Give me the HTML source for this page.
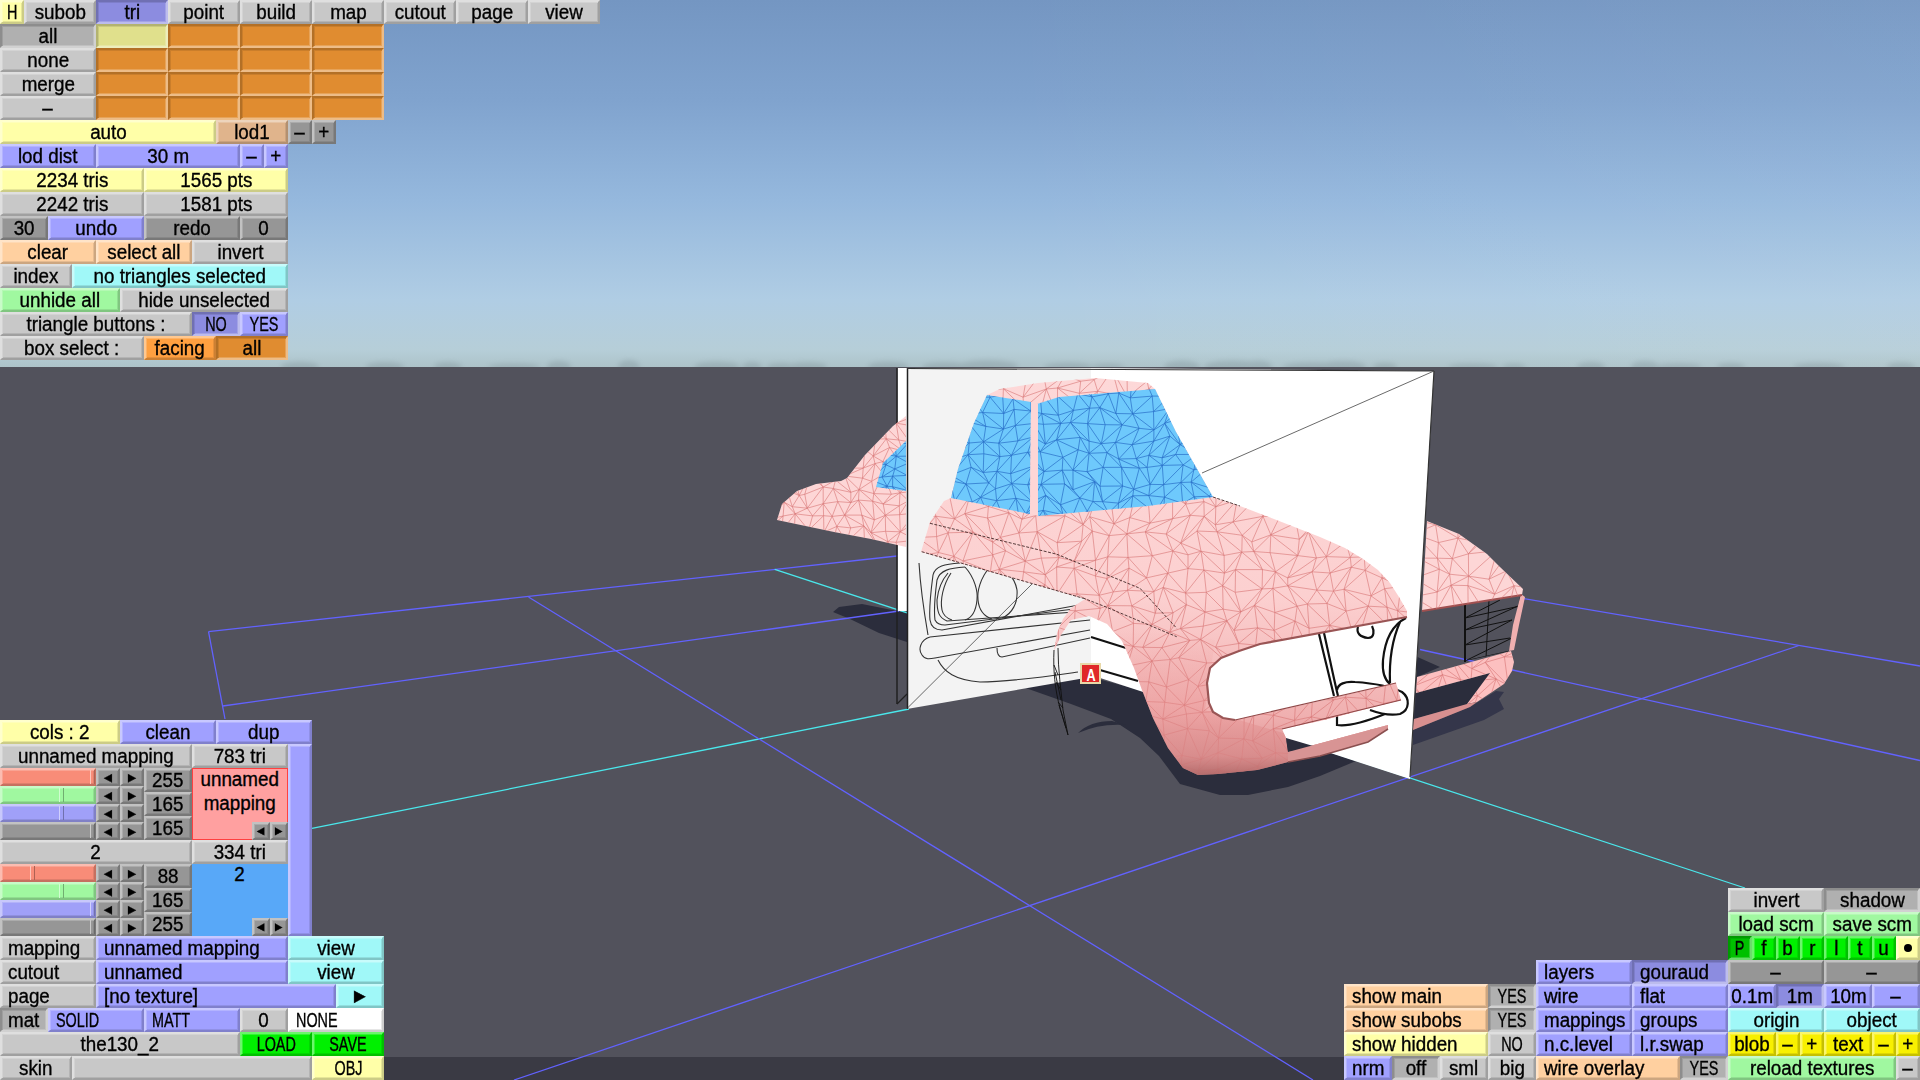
<!DOCTYPE html>
<html><head><meta charset="utf-8"><style>
*{margin:0;padding:0;box-sizing:border-box}
html,body{width:1920px;height:1080px;overflow:hidden;background:#52525c;font-family:"Liberation Sans",sans-serif}
#scene{position:absolute;left:0;top:0;width:1920px;height:1080px}
.b{position:absolute;border:2px solid;border-top-width:2px;border-bottom-width:2px;font-size:20px;line-height:20px;color:#000;text-align:center;white-space:nowrap}
.b span{display:inline-block;transform:scaleX(0.94);transform-origin:50% 50%;-webkit-text-stroke:0.35px #000}
.b.l span{transform-origin:0 50%}
.b.caps span{transform:scaleX(0.72)}
</style></head>
<body>
<svg id="scene" width="1920" height="1080" viewBox="0 0 1920 1080">
<defs>
<linearGradient id="sky" x1="0" y1="0" x2="0" y2="1">
<stop offset="0" stop-color="#7496c2"/><stop offset="0.272" stop-color="#80a3ce"/><stop offset="0.545" stop-color="#95b8dd"/><stop offset="0.817" stop-color="#b0cde4"/><stop offset="0.954" stop-color="#b6ced8"/><stop offset="1" stop-color="#adc3c9"/>
</linearGradient>
<linearGradient id="fshade" x1="0" y1="630" x2="0" y2="778" gradientUnits="userSpaceOnUse">
<stop offset="0" stop-color="#e89090" stop-opacity="0"/><stop offset="0.5" stop-color="#e89090" stop-opacity="0.35"/><stop offset="0.85" stop-color="#d88888" stop-opacity="0.6"/><stop offset="1" stop-color="#a86060" stop-opacity="0.85"/>
</linearGradient>
<filter id="hblur" x="-50%" y="-50%" width="200%" height="200%"><feGaussianBlur stdDeviation="2.5"/></filter>
<linearGradient id="skyh" x1="0" y1="0" x2="1920" y2="0" gradientUnits="userSpaceOnUse">
<stop offset="0.5" stop-color="#ffffff" stop-opacity="0"/><stop offset="1" stop-color="#ffffff" stop-opacity="0.05"/>
</linearGradient>
<linearGradient id="pinkg" x1="0" y1="0" x2="0" y2="1">
<stop offset="0" stop-color="#fdd8d8"/><stop offset="0.55" stop-color="#fcd0d0"/><stop offset="0.85" stop-color="#f0b0b0"/><stop offset="1" stop-color="#d08888"/>
</linearGradient>

<clipPath id="cpf"><polygon points="921,552 930,522 944,501 951,498 958,469 974,423 987,395 1000,389 1038,383 1095,378 1148,383 1155,389 1176,432 1213,497 1240,506 1274,519 1320,537 1345,548 1363,559 1378,570 1390,583 1399,597 1407,611 1407,617 1260,644 1239,651 1221,658 1210,668 1207,683 1209,703 1213,712 1223,718 1235,720 1320,701 1396,683 1401,700 1320,721 1282,729 1286,738 1288,752 1388,725 1388,729 1368,742 1320,756 1288,762 1257,770 1218,774 1198,775 1183,768 1168,748 1153,718 1142,690 1134,668 1122,641 1107,624 1089,616 1071,620 1061,635 1054,651 1057,633 1063,619 1071,608 1085,599"/><polygon points="1427,521 1459,534 1487,554 1500,567 1523,589 1522,595 1422,611"/><polygon points="1417,677 1511,651 1514,662 1512,671 1504,684 1477,702 1467,704 1490,673 1416,693"/></clipPath>
<clipPath id="cpr"><polygon points="906,416 893,426 865,455 847,478 841,481 816,484 797,491 782,504 777,520 834,532 871,539 906,547"/></clipPath>
<clipPath id="cpb"><polygon points="987,395 1031,402 1030,514 951,498 958,469 974,423"/><polygon points="1037,404 1059,397 1155,389 1176,432 1213,497 1148,506 1038,516"/><polygon points="906,441 883,463 876,487 906,491"/></clipPath>
<clipPath id="cpbr"><polygon points="906,441 883,463 876,487 906,491"/></clipPath>
<clipPath id="cpg"><polygon points="1465,604 1521,594 1510,651 1465,661"/></clipPath>
</defs>
<rect x="0" y="0" width="1920" height="367" fill="url(#sky)"/>
<rect x="0" y="0" width="1920" height="367" fill="url(#skyh)"/>
<g fill="#6f8288" opacity="0.28" filter="url(#hblur)"><ellipse cx="300" cy="367" rx="19" ry="5.2"/><ellipse cx="385" cy="367" rx="19" ry="5.0"/><ellipse cx="448" cy="367" rx="14" ry="5.0"/><ellipse cx="514" cy="367" rx="26" ry="3.4"/><ellipse cx="559" cy="367" rx="12" ry="6.2"/><ellipse cx="629" cy="367" rx="11" ry="6.9"/><ellipse cx="717" cy="367" rx="23" ry="5.5"/><ellipse cx="752" cy="367" rx="10" ry="5.1"/><ellipse cx="781" cy="367" rx="14" ry="4.0"/><ellipse cx="808" cy="367" rx="19" ry="4.8"/><ellipse cx="888" cy="367" rx="20" ry="5.6"/><ellipse cx="945" cy="367" rx="23" ry="4.8"/><ellipse cx="988" cy="367" rx="30" ry="7.0"/><ellipse cx="1068" cy="367" rx="24" ry="4.3"/><ellipse cx="1108" cy="367" rx="16" ry="3.3"/><ellipse cx="1182" cy="367" rx="18" ry="6.4"/><ellipse cx="1233" cy="367" rx="29" ry="6.4"/><ellipse cx="1258" cy="367" rx="14" ry="6.6"/><ellipse cx="1313" cy="367" rx="30" ry="4.6"/><ellipse cx="1343" cy="367" rx="23" ry="6.1"/><ellipse cx="1385" cy="367" rx="12" ry="4.3"/><ellipse cx="1473" cy="367" rx="25" ry="3.5"/><ellipse cx="1514" cy="367" rx="12" ry="3.2"/><ellipse cx="1591" cy="367" rx="14" ry="5.2"/><ellipse cx="1645" cy="367" rx="14" ry="5.9"/><ellipse cx="1679" cy="367" rx="23" ry="3.5"/><ellipse cx="1731" cy="367" rx="14" ry="4.1"/><ellipse cx="1819" cy="367" rx="26" ry="4.2"/><ellipse cx="1901" cy="367" rx="14" ry="4.6"/></g>
<rect x="0" y="367" width="1920" height="713" fill="#52525c"/>
<rect x="384" y="1057" width="960" height="23" fill="#3a3a44"/>
<polygon points="833,612 839,607 862,604 897,611 907,613 907,642 879,633 850,619" fill="#2b2d3c" />
<polygon points="1020,686 1090,677 1140,690 1210,720 1336,754 1356,761 1320,776 1288,787 1248,795 1220,795 1180,784 1159,756 1140,738 1111,719 1071,704" fill="#2b2d3c" />
<path d="M1078,733 Q1090,721 1112,721 L1126,725 Q1100,723 1078,733Z" fill="#2b2d3c"/>
<polygon points="1413,655 1440,667 1417,677 1416,693 1414,719 1413,741" fill="#2b2d3c" />
<polygon points="1413,730 1470,707 1496,691 1504,692 1499,699 1504,709 1484,720 1413,745" fill="#34364a" />
<line x1="208.5" y1="631.6" x2="897" y2="556" stroke="#6262ff" stroke-width="1.3"/>
<line x1="222.8" y1="706" x2="899" y2="611" stroke="#6262ff" stroke-width="1.3"/>
<line x1="312" y1="828.4" x2="909" y2="709" stroke="#4ae8ec" stroke-width="1.3"/>
<line x1="514" y1="1080" x2="1799" y2="645.5" stroke="#6262ff" stroke-width="1.3"/>
<line x1="208.5" y1="631.6" x2="225" y2="719" stroke="#6262ff" stroke-width="1.3"/>
<line x1="528.5" y1="597" x2="1313" y2="1080" stroke="#6262ff" stroke-width="1.3"/>
<line x1="774.7" y1="569.3" x2="1745" y2="888" stroke="#4ae8ec" stroke-width="1.3"/>
<line x1="1420" y1="649.5" x2="1920" y2="760.5" stroke="#6262ff" stroke-width="1.3"/>
<line x1="1520" y1="598" x2="1920" y2="666" stroke="#6262ff" stroke-width="1.3"/>
<line x1="897" y1="556" x2="975" y2="547.5" stroke="#6262ff" stroke-width="1.3"/>
<rect x="897.5" y="368" width="10" height="243" fill="#ffffff"/>
<line x1="897" y1="368" x2="897" y2="704" stroke="#202020" stroke-width="1.5"/>
<path d="M897,704 L907,694" stroke="#202020" stroke-width="1.2"/>
<polygon points="906,416 893,426 865,455 847,478 841,481 816,484 797,491 782,504 777,520 834,532 871,539 906,547" fill="#fdd6d6" />
<path clip-path="url(#cpr)" d="M767.6 400.4L786.3 399.8M767.6 400.4L768.8 413.9M767.6 400.4L785.0 416.4M768.8 413.9L785.0 416.4M768.8 413.9L771.1 422.0M785.0 416.4L771.1 422.0M771.1 422.0L784.9 429.8M771.1 422.0L765.6 442.1M784.9 429.8L765.6 442.1M765.6 442.1L782.0 441.7M765.6 442.1L767.8 449.6M782.0 441.7L767.8 449.6M767.8 449.6L782.5 456.0M767.8 449.6L774.5 464.7M782.5 456.0L774.5 464.7M774.5 464.7L786.4 461.3M774.5 464.7L773.1 477.8M786.4 461.3L773.1 477.8M773.1 477.8L779.7 475.4M773.1 477.8L771.3 487.8M779.7 475.4L771.3 487.8M771.3 487.8L787.2 490.4M771.3 487.8L771.2 507.3M771.3 487.8L784.2 502.2M771.2 507.3L784.2 502.2M771.2 507.3L770.2 519.2M784.2 502.2L770.2 519.2M770.2 519.2L783.1 516.0M770.2 519.2L771.6 526.0M783.1 516.0L771.6 526.0M771.6 526.0L781.6 530.8M771.6 526.0L772.3 543.8M781.6 530.8L772.3 543.8M772.3 543.8L783.8 546.7M772.3 543.8L768.2 551.7M772.3 543.8L784.7 559.9M768.2 551.7L784.7 559.9M786.3 399.8L799.2 404.5M786.3 399.8L785.0 416.4M799.2 404.5L785.0 416.4M785.0 416.4L797.6 409.9M785.0 416.4L784.9 429.8M797.6 409.9L784.9 429.8M784.9 429.8L799.3 430.2M784.9 429.8L782.0 441.7M784.9 429.8L799.7 439.6M782.0 441.7L799.7 439.6M782.0 441.7L782.5 456.0M782.0 441.7L797.9 449.4M782.5 456.0L797.9 449.4M782.5 456.0L786.4 461.3M797.9 449.4L786.4 461.3M786.4 461.3L799.0 465.7M786.4 461.3L779.7 475.4M799.0 465.7L779.7 475.4M779.7 475.4L794.0 474.0M779.7 475.4L787.2 490.4M779.7 475.4L799.2 495.5M787.2 490.4L799.2 495.5M787.2 490.4L784.2 502.2M787.2 490.4L792.3 506.7M784.2 502.2L792.3 506.7M784.2 502.2L783.1 516.0M784.2 502.2L795.2 513.8M783.1 516.0L795.2 513.8M783.1 516.0L781.6 530.8M795.2 513.8L781.6 530.8M781.6 530.8L794.1 532.4M781.6 530.8L783.8 546.7M794.1 532.4L783.8 546.7M783.8 546.7L799.4 538.9M783.8 546.7L784.7 559.9M783.8 546.7L797.0 551.9M784.7 559.9L797.0 551.9M799.2 404.5L811.0 398.5M799.2 404.5L797.6 409.9M799.2 404.5L812.5 417.4M797.6 409.9L812.5 417.4M797.6 409.9L799.3 430.2M797.6 409.9L809.0 430.5M799.3 430.2L809.0 430.5M799.3 430.2L799.7 439.6M799.3 430.2L807.3 435.2M799.7 439.6L807.3 435.2M799.7 439.6L797.9 449.4M799.7 439.6L809.9 447.7M797.9 449.4L809.9 447.7M797.9 449.4L799.0 465.7M797.9 449.4L806.2 464.2M799.0 465.7L806.2 464.2M799.0 465.7L794.0 474.0M806.2 464.2L794.0 474.0M794.0 474.0L810.0 474.9M794.0 474.0L799.2 495.5M810.0 474.9L799.2 495.5M799.2 495.5L804.8 494.3M799.2 495.5L792.3 506.7M799.2 495.5L807.3 508.2M792.3 506.7L807.3 508.2M792.3 506.7L795.2 513.8M807.3 508.2L795.2 513.8M795.2 513.8L812.6 515.9M795.2 513.8L794.1 532.4M795.2 513.8L808.6 530.2M794.1 532.4L808.6 530.2M794.1 532.4L799.4 538.9M808.6 530.2L799.4 538.9M799.4 538.9L810.3 543.9M799.4 538.9L797.0 551.9M810.3 543.9L797.0 551.9M797.0 551.9L809.5 557.1M811.0 398.5L826.0 400.1M811.0 398.5L812.5 417.4M826.0 400.1L812.5 417.4M812.5 417.4L821.4 415.0M812.5 417.4L809.0 430.5M821.4 415.0L809.0 430.5M809.0 430.5L819.6 424.2M809.0 430.5L807.3 435.2M809.0 430.5L826.3 439.2M807.3 435.2L826.3 439.2M807.3 435.2L809.9 447.7M826.3 439.2L809.9 447.7M809.9 447.7L822.4 447.6M809.9 447.7L806.2 464.2M822.4 447.6L806.2 464.2M806.2 464.2L821.2 465.7M806.2 464.2L810.0 474.9M806.2 464.2L817.6 479.1M810.0 474.9L817.6 479.1M810.0 474.9L804.8 494.3M810.0 474.9L823.2 487.0M804.8 494.3L823.2 487.0M804.8 494.3L807.3 508.2M823.2 487.0L807.3 508.2M807.3 508.2L823.2 503.7M807.3 508.2L812.6 515.9M823.2 503.7L812.6 515.9M812.6 515.9L823.6 515.7M812.6 515.9L808.6 530.2M823.6 515.7L808.6 530.2M808.6 530.2L823.9 532.2M808.6 530.2L810.3 543.9M808.6 530.2L817.7 539.0M810.3 543.9L817.7 539.0M810.3 543.9L809.5 557.1M817.7 539.0L809.5 557.1M809.5 557.1L823.6 560.2M826.0 400.1L832.7 399.6M826.0 400.1L821.4 415.0M826.0 400.1L835.8 411.4M821.4 415.0L835.8 411.4M821.4 415.0L819.6 424.2M821.4 415.0L833.8 424.3M819.6 424.2L833.8 424.3M819.6 424.2L826.3 439.2M819.6 424.2L833.8 439.9M826.3 439.2L833.8 439.9M826.3 439.2L822.4 447.6M833.8 439.9L822.4 447.6M822.4 447.6L833.2 450.9M822.4 447.6L821.2 465.7M822.4 447.6L837.5 460.7M821.2 465.7L837.5 460.7M821.2 465.7L817.6 479.1M821.2 465.7L835.6 480.1M817.6 479.1L835.6 480.1M817.6 479.1L823.2 487.0M835.6 480.1L823.2 487.0M823.2 487.0L833.3 488.5M823.2 487.0L823.2 503.7M833.3 488.5L823.2 503.7M823.2 503.7L837.8 501.6M823.2 503.7L823.6 515.7M823.2 503.7L832.2 516.4M823.6 515.7L832.2 516.4M823.6 515.7L823.9 532.2M832.2 516.4L823.9 532.2M823.9 532.2L836.8 526.4M823.9 532.2L817.7 539.0M823.9 532.2L833.4 541.5M817.7 539.0L833.4 541.5M817.7 539.0L823.6 560.2M833.4 541.5L823.6 560.2M823.6 560.2L838.0 555.4M832.7 399.6L851.2 397.0M832.7 399.6L835.8 411.4M851.2 397.0L835.8 411.4M835.8 411.4L846.5 414.4M835.8 411.4L833.8 424.3M835.8 411.4L851.5 425.6M833.8 424.3L851.5 425.6M833.8 424.3L833.8 439.9M833.8 424.3L845.5 435.6M833.8 439.9L845.5 435.6M833.8 439.9L833.2 450.9M833.8 439.9L848.3 449.2M833.2 450.9L848.3 449.2M833.2 450.9L837.5 460.7M833.2 450.9L850.8 468.1M837.5 460.7L850.8 468.1M837.5 460.7L835.6 480.1M837.5 460.7L845.1 476.0M835.6 480.1L845.1 476.0M835.6 480.1L833.3 488.5M835.6 480.1L850.8 492.3M833.3 488.5L850.8 492.3M833.3 488.5L837.8 501.6M833.3 488.5L850.8 502.6M837.8 501.6L850.8 502.6M837.8 501.6L832.2 516.4M837.8 501.6L844.6 515.1M832.2 516.4L844.6 515.1M832.2 516.4L836.8 526.4M844.6 515.1L836.8 526.4M836.8 526.4L850.7 527.9M836.8 526.4L833.4 541.5M836.8 526.4L846.6 542.2M833.4 541.5L846.6 542.2M833.4 541.5L838.0 555.4M846.6 542.2L838.0 555.4M838.0 555.4L847.3 555.2M851.2 397.0L864.8 396.9M851.2 397.0L846.5 414.4M851.2 397.0L856.5 417.0M846.5 414.4L856.5 417.0M846.5 414.4L851.5 425.6M856.5 417.0L851.5 425.6M851.5 425.6L864.5 430.4M851.5 425.6L845.5 435.6M851.5 425.6L860.4 443.1M845.5 435.6L860.4 443.1M845.5 435.6L848.3 449.2M860.4 443.1L848.3 449.2M848.3 449.2L864.9 449.5M848.3 449.2L850.8 468.1M864.9 449.5L850.8 468.1M850.8 468.1L863.2 468.1M850.8 468.1L845.1 476.0M863.2 468.1L845.1 476.0M845.1 476.0L862.5 478.2M845.1 476.0L850.8 492.3M845.1 476.0L859.1 489.6M850.8 492.3L859.1 489.6M850.8 492.3L850.8 502.6M859.1 489.6L850.8 502.6M850.8 502.6L858.5 500.1M850.8 502.6L844.6 515.1M858.5 500.1L844.6 515.1M844.6 515.1L861.8 515.1M844.6 515.1L850.7 527.9M844.6 515.1L863.8 525.9M850.7 527.9L863.8 525.9M850.7 527.9L846.6 542.2M863.8 525.9L846.6 542.2M846.6 542.2L864.7 544.8M846.6 542.2L847.3 555.2M864.7 544.8L847.3 555.2M847.3 555.2L864.9 559.6M864.8 396.9L877.6 400.7M864.8 396.9L856.5 417.0M864.8 396.9L869.6 415.2M856.5 417.0L869.6 415.2M856.5 417.0L864.5 430.4M856.5 417.0L871.0 424.2M864.5 430.4L871.0 424.2M864.5 430.4L860.4 443.1M864.5 430.4L875.5 439.2M860.4 443.1L875.5 439.2M860.4 443.1L864.9 449.5M875.5 439.2L864.9 449.5M864.9 449.5L873.2 456.0M864.9 449.5L863.2 468.1M873.2 456.0L863.2 468.1M863.2 468.1L875.0 463.6M863.2 468.1L862.5 478.2M875.0 463.6L862.5 478.2M862.5 478.2L871.7 481.3M862.5 478.2L859.1 489.6M871.7 481.3L859.1 489.6M859.1 489.6L873.8 493.6M859.1 489.6L858.5 500.1M859.1 489.6L872.7 501.2M858.5 500.1L872.7 501.2M858.5 500.1L861.8 515.1M858.5 500.1L874.3 519.9M861.8 515.1L874.3 519.9M861.8 515.1L863.8 525.9M861.8 515.1L871.0 532.7M863.8 525.9L871.0 532.7M863.8 525.9L864.7 544.8M863.8 525.9L877.8 545.8M864.7 544.8L877.8 545.8M864.7 544.8L864.9 559.6M877.8 545.8L864.9 559.6M864.9 559.6L876.9 551.5M877.6 400.7L888.2 403.3M877.6 400.7L869.6 415.2M888.2 403.3L869.6 415.2M869.6 415.2L882.9 410.9M869.6 415.2L871.0 424.2M882.9 410.9L871.0 424.2M871.0 424.2L884.9 426.2M871.0 424.2L875.5 439.2M871.0 424.2L886.3 438.8M875.5 439.2L886.3 438.8M875.5 439.2L873.2 456.0M886.3 438.8L873.2 456.0M873.2 456.0L889.5 447.5M873.2 456.0L875.0 463.6M873.2 456.0L882.9 461.6M875.0 463.6L882.9 461.6M875.0 463.6L871.7 481.3M875.0 463.6L883.6 474.1M871.7 481.3L883.6 474.1M871.7 481.3L873.8 493.6M883.6 474.1L873.8 493.6M873.8 493.6L891.3 494.2M873.8 493.6L872.7 501.2M873.8 493.6L883.2 504.0M872.7 501.2L883.2 504.0M872.7 501.2L874.3 519.9M872.7 501.2L885.3 515.3M874.3 519.9L885.3 515.3M874.3 519.9L871.0 532.7M885.3 515.3L871.0 532.7M871.0 532.7L885.6 531.3M871.0 532.7L877.8 545.8M871.0 532.7L887.8 541.7M877.8 545.8L887.8 541.7M877.8 545.8L876.9 551.5M877.8 545.8L884.2 554.4M876.9 551.5L884.2 554.4M888.2 403.3L896.6 400.5M888.2 403.3L882.9 410.9M896.6 400.5L882.9 410.9M882.9 410.9L902.0 411.9M882.9 410.9L884.9 426.2M902.0 411.9L884.9 426.2M884.9 426.2L896.2 423.1M884.9 426.2L886.3 438.8M884.9 426.2L898.8 440.0M886.3 438.8L898.8 440.0M886.3 438.8L889.5 447.5M886.3 438.8L902.6 450.9M889.5 447.5L902.6 450.9M889.5 447.5L882.9 461.6M889.5 447.5L902.7 466.1M882.9 461.6L902.7 466.1M882.9 461.6L883.6 474.1M882.9 461.6L899.4 476.8M883.6 474.1L899.4 476.8M883.6 474.1L891.3 494.2M883.6 474.1L900.0 492.8M891.3 494.2L900.0 492.8M891.3 494.2L883.2 504.0M900.0 492.8L883.2 504.0M883.2 504.0L899.3 505.8M883.2 504.0L885.3 515.3M899.3 505.8L885.3 515.3M885.3 515.3L899.6 514.7M885.3 515.3L885.6 531.3M885.3 515.3L900.3 531.8M885.6 531.3L900.3 531.8M885.6 531.3L887.8 541.7M900.3 531.8L887.8 541.7M887.8 541.7L896.1 542.3M887.8 541.7L884.2 554.4M887.8 541.7L899.3 559.5M884.2 554.4L899.3 559.5M896.6 400.5L917.0 398.9M896.6 400.5L902.0 411.9M896.6 400.5L916.6 415.6M902.0 411.9L916.6 415.6M902.0 411.9L896.2 423.1M916.6 415.6L896.2 423.1M896.2 423.1L910.8 425.7M896.2 423.1L898.8 440.0M896.2 423.1L909.6 441.9M898.8 440.0L909.6 441.9M898.8 440.0L902.6 450.9M909.6 441.9L902.6 450.9M902.6 450.9L914.5 455.5M902.6 450.9L902.7 466.1M914.5 455.5L902.7 466.1M902.7 466.1L915.7 466.5M902.7 466.1L899.4 476.8M902.7 466.1L915.1 478.6M899.4 476.8L915.1 478.6M899.4 476.8L900.0 492.8M915.1 478.6L900.0 492.8M900.0 492.8L909.4 491.8M900.0 492.8L899.3 505.8M900.0 492.8L908.5 500.8M899.3 505.8L908.5 500.8M899.3 505.8L899.6 514.7M908.5 500.8L899.6 514.7M899.6 514.7L915.5 512.9M899.6 514.7L900.3 531.8M915.5 512.9L900.3 531.8M900.3 531.8L909.3 526.4M900.3 531.8L896.1 542.3M900.3 531.8L916.5 540.1M896.1 542.3L916.5 540.1M896.1 542.3L899.3 559.5M916.5 540.1L899.3 559.5M899.3 559.5L908.7 559.1M917.0 398.9L916.6 415.6M916.6 415.6L910.8 425.7M910.8 425.7L909.6 441.9M909.6 441.9L914.5 455.5M914.5 455.5L915.7 466.5M915.7 466.5L915.1 478.6M915.1 478.6L909.4 491.8M909.4 491.8L908.5 500.8M908.5 500.8L915.5 512.9M915.5 512.9L909.3 526.4M909.3 526.4L916.5 540.1M916.5 540.1L908.7 559.1" stroke="#d87878" stroke-width="0.7" fill="none" opacity="0.9"/>
<polygon points="906,441 883,463 876,487 906,491" fill="#6ec9fc" />
<path clip-path="url(#cpbr)" d="M861.3 432.6L873.2 431.1M861.3 432.6L858.0 444.1M873.2 431.1L858.0 444.1M858.0 444.1L869.3 445.3M858.0 444.1L863.9 455.5M869.3 445.3L863.9 455.5M863.9 455.5L873.3 450.8M863.9 455.5L860.3 462.8M863.9 455.5L875.6 463.0M860.3 462.8L875.6 463.0M860.3 462.8L859.9 476.8M875.6 463.0L859.9 476.8M859.9 476.8L870.6 479.9M859.9 476.8L861.8 491.5M870.6 479.9L861.8 491.5M861.8 491.5L872.8 490.5M861.8 491.5L860.6 499.3M861.8 491.5L873.2 501.6M860.6 499.3L873.2 501.6M873.2 431.1L882.4 427.3M873.2 431.1L869.3 445.3M882.4 427.3L869.3 445.3M869.3 445.3L880.4 443.8M869.3 445.3L873.3 450.8M869.3 445.3L886.1 454.4M873.3 450.8L886.1 454.4M873.3 450.8L875.6 463.0M873.3 450.8L886.0 464.8M875.6 463.0L886.0 464.8M875.6 463.0L870.6 479.9M886.0 464.8L870.6 479.9M870.6 479.9L882.0 477.0M870.6 479.9L872.8 490.5M870.6 479.9L887.1 486.2M872.8 490.5L887.1 486.2M872.8 490.5L873.2 501.6M887.1 486.2L873.2 501.6M873.2 501.6L884.0 499.9M882.4 427.3L898.3 428.8M882.4 427.3L880.4 443.8M898.3 428.8L880.4 443.8M880.4 443.8L894.6 441.2M880.4 443.8L886.1 454.4M880.4 443.8L896.3 456.3M886.1 454.4L896.3 456.3M886.1 454.4L886.0 464.8M896.3 456.3L886.0 464.8M886.0 464.8L894.8 468.9M886.0 464.8L882.0 477.0M894.8 468.9L882.0 477.0M882.0 477.0L892.7 476.1M882.0 477.0L887.1 486.2M892.7 476.1L887.1 486.2M887.1 486.2L892.6 486.7M887.1 486.2L884.0 499.9M887.1 486.2L898.3 503.9M884.0 499.9L898.3 503.9M898.3 428.8L905.4 427.4M898.3 428.8L894.6 441.2M905.4 427.4L894.6 441.2M894.6 441.2L907.3 444.0M894.6 441.2L896.3 456.3M907.3 444.0L896.3 456.3M896.3 456.3L910.7 456.1M896.3 456.3L894.8 468.9M896.3 456.3L908.8 463.0M894.8 468.9L908.8 463.0M894.8 468.9L892.7 476.1M894.8 468.9L907.1 475.4M892.7 476.1L907.1 475.4M892.7 476.1L892.6 486.7M892.7 476.1L908.2 490.6M892.6 486.7L908.2 490.6M892.6 486.7L898.3 503.9M892.6 486.7L905.5 499.9M898.3 503.9L905.5 499.9M905.4 427.4L922.4 426.1M905.4 427.4L907.3 444.0M922.4 426.1L907.3 444.0M907.3 444.0L922.5 445.3M907.3 444.0L910.7 456.1M922.5 445.3L910.7 456.1M910.7 456.1L923.8 453.0M910.7 456.1L908.8 463.0M910.7 456.1L920.4 466.7M908.8 463.0L920.4 466.7M908.8 463.0L907.1 475.4M920.4 466.7L907.1 475.4M907.1 475.4L921.1 482.0M907.1 475.4L908.2 490.6M921.1 482.0L908.2 490.6M908.2 490.6L921.6 488.3M908.2 490.6L905.5 499.9M908.2 490.6L923.0 501.9M905.5 499.9L923.0 501.9M922.4 426.1L922.5 445.3M922.5 445.3L923.8 453.0M923.8 453.0L920.4 466.7M920.4 466.7L921.1 482.0M921.1 482.0L921.6 488.3M921.6 488.3L923.0 501.9" stroke="#2a70c8" stroke-width="0.8" fill="none" opacity="0.9"/>
<polygon points="907,368 1091,368 1091,677 907,709" fill="#f3f3f3" />
<polygon points="1091,368 1434,371 1410,779 1091,675" fill="#ffffff" />
<line x1="907.5" y1="368" x2="907.5" y2="709" stroke="#222" stroke-width="1.5"/>
<line x1="907" y1="368.5" x2="1434" y2="371" stroke="#333" stroke-width="1.2"/>
<line x1="1434" y1="371" x2="1410" y2="777" stroke="#333" stroke-width="1.2"/>
<line x1="907.5" y1="708" x2="1033" y2="583" stroke="#444" stroke-width="0.8"/>
<line x1="1202" y1="473" x2="1434" y2="371" stroke="#444" stroke-width="0.8"/>
<g fill="none" stroke="#333" stroke-width="1.1">
<path d="M919,563 C920,580 922,600 928,635"/>
<path d="M960,563 C945,564 935,566 933,575 C931,590 929,610 930,620 C931,627 936,630 942,630 L1090,603"/>
<path d="M965,567 C950,568 940,570 937,580 C935,595 934,612 935,620 C937,624 940,625 945,625 L1090,607"/>
<path d="M948,573 C942,580 938,590 937,600 C937,612 939,618 947,621 L1090,611"/>
<path d="M951,573 C943,585 940,600 942,610 C943,615 946,618 952,620"/>
<path d="M965,567 C975,578 978,592 977,600 C976,610 972,618 965,620"/>
<path d="M990,567 C980,578 977,592 978,600 C979,610 983,616 992,619"/>
<path d="M990,567 C1005,565 1015,578 1017,590 C1018,603 1012,614 1002,618"/>
<path d="M930,637 C920,640 918,650 922,655 C925,660 930,659 935,658 L1090,630"/>
<path d="M930,637 L1090,620"/>
<path d="M997,648 C997,654 999,657 1002,657 L1090,638"/>
<path d="M938,660 C944,672 955,680 980,682 C1010,682 1050,676 1078,672"/>
</g>
<g fill="none" stroke="#111" stroke-width="2.2">
<path d="M1091,637 L1126,648"/>
<path d="M1100,670 L1138,681"/>
<path d="M1319,634 C1324,655 1330,680 1334,696"/>
<path d="M1324,633 C1329,655 1334,680 1338,696"/>
<path d="M1358,627 C1356,633 1360,637 1368,638 C1375,638 1374,630 1372,626"/>
<path d="M1406,618 C1392,625 1385,640 1383,660 C1382,672 1385,680 1390,684"/>
<path d="M1400,622 C1392,640 1389,660 1390,683"/>
<path d="M1337,690 C1338,684 1345,681 1355,682 C1370,683 1390,686 1402,692 C1410,698 1410,710 1400,714 C1390,716 1378,713 1370,710"/>
<path d="M1337,700 L1337,725 C1350,727 1370,720 1385,714"/>
</g>
<path clip-path="url(#cpg)" d="M1465,604 L1521,594 L1510,651 L1465,661 Z M1465,618 L1520,606 M1465,630 L1512,620 M1465,645 L1510,638 M1489,600 L1486,658 M1465,618 L1500,600 M1465,630 L1518,606 M1465,645 L1512,620 M1465,661 L1512,638" stroke="#111" stroke-width="1" fill="none"/>
<line x1="1465" y1="604" x2="1465" y2="662" stroke="#111" stroke-width="2"/>
<polygon points="1416,693 1490,673 1477,702 1414,719" fill="#2b2d3c" />
<polygon points="1427,521 1459,534 1487,554 1500,567 1523,589 1522,595 1422,611" fill="#fdd6d6" />
<polygon points="1417,677 1511,651 1514,662 1512,671 1504,684 1477,702 1467,704 1490,673 1416,693" fill="#fcc0c0" />
<polygon points="1414,719 1467,704 1477,702 1470,707 1413,730" fill="#d89090" />
<polygon points="1521,594 1525,597 1519,625 1514,650 1509,651 1513,625" fill="#f0b0b0" />
<path d="M1422,611 L1522,595" stroke="#a05050" stroke-width="2" fill="none"/>
<polygon points="921,552 930,522 944,501 951,498 958,469 974,423 987,395 1000,389 1038,383 1095,378 1148,383 1155,389 1176,432 1213,497 1240,506 1274,519 1320,537 1345,548 1363,559 1378,570 1390,583 1399,597 1407,611 1407,617 1260,644 1239,651 1221,658 1210,668 1207,683 1209,703 1213,712 1223,718 1235,720 1320,701 1396,683 1401,700 1320,721 1282,729 1286,738 1288,752 1388,725 1388,729 1368,742 1320,756 1288,762 1257,770 1218,774 1198,775 1183,768 1168,748 1153,718 1142,690 1134,668 1122,641 1107,624 1089,616 1071,620 1061,635 1054,651 1057,633 1063,619 1071,608 1085,599" fill="url(#pinkg)" />
<path clip-path="url(#cpf)" d="M919.5 376.3L932.3 373.8M919.5 376.3L920.4 395.7M932.3 373.8L920.4 395.7M920.4 395.7L935.6 387.3M920.4 395.7L918.0 409.0M935.6 387.3L918.0 409.0M918.0 409.0L931.8 409.7M918.0 409.0L918.9 434.4M931.8 409.7L918.9 434.4M918.9 434.4L927.0 434.9M918.9 434.4L919.6 446.2M927.0 434.9L919.6 446.2M919.6 446.2L929.5 441.9M919.6 446.2L918.2 464.8M929.5 441.9L918.2 464.8M918.2 464.8L932.7 460.8M918.2 464.8L910.1 477.2M932.7 460.8L910.1 477.2M910.1 477.2L934.5 481.1M910.1 477.2L909.7 497.2M934.5 481.1L909.7 497.2M909.7 497.2L928.3 495.4M909.7 497.2L910.7 519.0M928.3 495.4L910.7 519.0M910.7 519.0L935.9 516.2M910.7 519.0L917.5 537.5M935.9 516.2L917.5 537.5M917.5 537.5L936.6 536.6M917.5 537.5L914.0 556.9M917.5 537.5L938.5 552.5M914.0 556.9L938.5 552.5M914.0 556.9L912.5 572.6M914.0 556.9L929.8 570.0M912.5 572.6L929.8 570.0M912.5 572.6L918.2 589.8M929.8 570.0L918.2 589.8M918.2 589.8L937.0 592.6M918.2 589.8L911.0 614.0M937.0 592.6L911.0 614.0M911.0 614.0L931.0 603.9M911.0 614.0L917.8 625.3M911.0 614.0L935.3 632.9M917.8 625.3L935.3 632.9M917.8 625.3L913.4 645.4M935.3 632.9L913.4 645.4M913.4 645.4L934.2 638.7M913.4 645.4L916.2 659.5M934.2 638.7L916.2 659.5M916.2 659.5L927.1 657.8M916.2 659.5L908.7 677.3M927.1 657.8L908.7 677.3M908.7 677.3L928.8 675.2M908.7 677.3L918.6 694.5M928.8 675.2L918.6 694.5M918.6 694.5L927.4 700.9M918.6 694.5L914.5 713.2M927.4 700.9L914.5 713.2M914.5 713.2L938.0 713.2M914.5 713.2L911.3 730.9M914.5 713.2L939.0 734.7M911.3 730.9L939.0 734.7M911.3 730.9L913.8 748.8M939.0 734.7L913.8 748.8M913.8 748.8L936.8 758.3M913.8 748.8L909.0 766.1M913.8 748.8L938.5 765.1M909.0 766.1L938.5 765.1M909.0 766.1L910.8 788.9M938.5 765.1L910.8 788.9M910.8 788.9L930.5 790.3M910.8 788.9L909.5 801.0M930.5 790.3L909.5 801.0M909.5 801.0L938.6 801.8M932.3 373.8L948.4 379.4M932.3 373.8L935.6 387.3M932.3 373.8L946.1 391.6M935.6 387.3L946.1 391.6M935.6 387.3L931.8 409.7M935.6 387.3L948.9 413.3M931.8 409.7L948.9 413.3M931.8 409.7L927.0 434.9M948.9 413.3L927.0 434.9M927.0 434.9L956.4 424.9M927.0 434.9L929.5 441.9M927.0 434.9L954.0 449.9M929.5 441.9L954.0 449.9M929.5 441.9L932.7 460.8M954.0 449.9L932.7 460.8M932.7 460.8L955.2 465.7M932.7 460.8L934.5 481.1M932.7 460.8L956.3 481.3M934.5 481.1L956.3 481.3M934.5 481.1L928.3 495.4M956.3 481.3L928.3 495.4M928.3 495.4L949.9 497.6M928.3 495.4L935.9 516.2M928.3 495.4L954.5 518.8M935.9 516.2L954.5 518.8M935.9 516.2L936.6 536.6M935.9 516.2L948.1 532.8M936.6 536.6L948.1 532.8M936.6 536.6L938.5 552.5M948.1 532.8L938.5 552.5M938.5 552.5L953.8 556.3M938.5 552.5L929.8 570.0M953.8 556.3L929.8 570.0M929.8 570.0L953.7 571.6M929.8 570.0L937.0 592.6M929.8 570.0L950.8 586.6M937.0 592.6L950.8 586.6M937.0 592.6L931.0 603.9M937.0 592.6L953.7 603.0M931.0 603.9L953.7 603.0M931.0 603.9L935.3 632.9M931.0 603.9L950.6 630.3M935.3 632.9L950.6 630.3M935.3 632.9L934.2 638.7M935.3 632.9L953.2 639.9M934.2 638.7L953.2 639.9M934.2 638.7L927.1 657.8M934.2 638.7L947.7 667.3M927.1 657.8L947.7 667.3M927.1 657.8L928.8 675.2M947.7 667.3L928.8 675.2M928.8 675.2L952.8 685.8M928.8 675.2L927.4 700.9M928.8 675.2L955.7 698.4M927.4 700.9L955.7 698.4M927.4 700.9L938.0 713.2M927.4 700.9L956.0 719.9M938.0 713.2L956.0 719.9M938.0 713.2L939.0 734.7M956.0 719.9L939.0 734.7M939.0 734.7L948.9 733.4M939.0 734.7L936.8 758.3M939.0 734.7L945.6 751.7M936.8 758.3L945.6 751.7M936.8 758.3L938.5 765.1M945.6 751.7L938.5 765.1M938.5 765.1L956.7 766.0M938.5 765.1L930.5 790.3M956.7 766.0L930.5 790.3M930.5 790.3L951.9 784.1M930.5 790.3L938.6 801.8M951.9 784.1L938.6 801.8M938.6 801.8L945.7 808.9M948.4 379.4L965.7 369.3M948.4 379.4L946.1 391.6M948.4 379.4L964.6 394.8M946.1 391.6L964.6 394.8M946.1 391.6L948.9 413.3M964.6 394.8L948.9 413.3M948.9 413.3L970.1 404.8M948.9 413.3L956.4 424.9M948.9 413.3L965.6 434.9M956.4 424.9L965.6 434.9M956.4 424.9L954.0 449.9M965.6 434.9L954.0 449.9M954.0 449.9L965.5 447.8M954.0 449.9L955.2 465.7M954.0 449.9L968.0 468.5M955.2 465.7L968.0 468.5M955.2 465.7L956.3 481.3M968.0 468.5L956.3 481.3M956.3 481.3L970.3 486.6M956.3 481.3L949.9 497.6M956.3 481.3L969.4 497.1M949.9 497.6L969.4 497.1M949.9 497.6L954.5 518.8M969.4 497.1L954.5 518.8M954.5 518.8L964.9 513.7M954.5 518.8L948.1 532.8M954.5 518.8L973.1 532.1M948.1 532.8L973.1 532.1M948.1 532.8L953.8 556.3M973.1 532.1L953.8 556.3M953.8 556.3L963.0 560.9M953.8 556.3L953.7 571.6M953.8 556.3L965.2 578.0M953.7 571.6L965.2 578.0M953.7 571.6L950.8 586.6M965.2 578.0L950.8 586.6M950.8 586.6L963.8 590.6M950.8 586.6L953.7 603.0M963.8 590.6L953.7 603.0M953.7 603.0L965.5 613.2M953.7 603.0L950.6 630.3M953.7 603.0L970.5 628.8M950.6 630.3L970.5 628.8M950.6 630.3L953.2 639.9M970.5 628.8L953.2 639.9M953.2 639.9L972.3 649.7M953.2 639.9L947.7 667.3M972.3 649.7L947.7 667.3M947.7 667.3L967.1 664.3M947.7 667.3L952.8 685.8M947.7 667.3L968.3 676.1M952.8 685.8L968.3 676.1M952.8 685.8L955.7 698.4M952.8 685.8L973.2 700.2M955.7 698.4L973.2 700.2M955.7 698.4L956.0 719.9M973.2 700.2L956.0 719.9M956.0 719.9L973.0 713.3M956.0 719.9L948.9 733.4M973.0 713.3L948.9 733.4M948.9 733.4L969.5 734.5M948.9 733.4L945.6 751.7M948.9 733.4L971.9 747.7M945.6 751.7L971.9 747.7M945.6 751.7L956.7 766.0M971.9 747.7L956.7 766.0M956.7 766.0L967.1 770.8M956.7 766.0L951.9 784.1M967.1 770.8L951.9 784.1M951.9 784.1L963.6 789.7M951.9 784.1L945.7 808.9M951.9 784.1L972.0 806.0M945.7 808.9L972.0 806.0M965.7 369.3L988.9 376.3M965.7 369.3L964.6 394.8M988.9 376.3L964.6 394.8M964.6 394.8L983.4 391.1M964.6 394.8L970.1 404.8M964.6 394.8L993.2 408.9M970.1 404.8L993.2 408.9M970.1 404.8L965.6 434.9M993.2 408.9L965.6 434.9M965.6 434.9L986.1 423.8M965.6 434.9L965.5 447.8M986.1 423.8L965.5 447.8M965.5 447.8L983.4 442.8M965.5 447.8L968.0 468.5M965.5 447.8L992.4 467.9M968.0 468.5L992.4 467.9M968.0 468.5L970.3 486.6M968.0 468.5L991.7 489.1M970.3 486.6L991.7 489.1M970.3 486.6L969.4 497.1M991.7 489.1L969.4 497.1M969.4 497.1L988.4 506.4M969.4 497.1L964.9 513.7M988.4 506.4L964.9 513.7M964.9 513.7L987.5 518.0M964.9 513.7L973.1 532.1M964.9 513.7L992.6 542.1M973.1 532.1L992.6 542.1M973.1 532.1L963.0 560.9M973.1 532.1L992.7 554.8M963.0 560.9L992.7 554.8M963.0 560.9L965.2 578.0M963.0 560.9L990.4 571.8M965.2 578.0L990.4 571.8M965.2 578.0L963.8 590.6M965.2 578.0L993.3 596.3M963.8 590.6L993.3 596.3M963.8 590.6L965.5 613.2M993.3 596.3L965.5 613.2M965.5 613.2L984.4 614.5M965.5 613.2L970.5 628.8M984.4 614.5L970.5 628.8M970.5 628.8L983.0 621.9M970.5 628.8L972.3 649.7M983.0 621.9L972.3 649.7M972.3 649.7L989.8 642.4M972.3 649.7L967.1 664.3M989.8 642.4L967.1 664.3M967.1 664.3L987.2 664.8M967.1 664.3L968.3 676.1M967.1 664.3L981.2 684.1M968.3 676.1L981.2 684.1M968.3 676.1L973.2 700.2M968.3 676.1L984.2 698.1M973.2 700.2L984.2 698.1M973.2 700.2L973.0 713.3M984.2 698.1L973.0 713.3M973.0 713.3L985.0 720.1M973.0 713.3L969.5 734.5M985.0 720.1L969.5 734.5M969.5 734.5L990.1 732.3M969.5 734.5L971.9 747.7M990.1 732.3L971.9 747.7M971.9 747.7L982.0 750.5M971.9 747.7L967.1 770.8M982.0 750.5L967.1 770.8M967.1 770.8L985.9 765.7M967.1 770.8L963.6 789.7M985.9 765.7L963.6 789.7M963.6 789.7L982.6 792.3M963.6 789.7L972.0 806.0M982.6 792.3L972.0 806.0M972.0 806.0L989.5 813.0M988.9 376.3L1011.0 379.7M988.9 376.3L983.4 391.1M1011.0 379.7L983.4 391.1M983.4 391.1L1003.4 388.7M983.4 391.1L993.2 408.9M983.4 391.1L1002.6 410.5M993.2 408.9L1002.6 410.5M993.2 408.9L986.1 423.8M993.2 408.9L1005.3 429.5M986.1 423.8L1005.3 429.5M986.1 423.8L983.4 442.8M986.1 423.8L1003.2 451.4M983.4 442.8L1003.2 451.4M983.4 442.8L992.4 467.9M983.4 442.8L1002.3 464.5M992.4 467.9L1002.3 464.5M992.4 467.9L991.7 489.1M992.4 467.9L1009.9 486.9M991.7 489.1L1009.9 486.9M991.7 489.1L988.4 506.4M1009.9 486.9L988.4 506.4M988.4 506.4L1002.4 497.8M988.4 506.4L987.5 518.0M988.4 506.4L1008.9 512.8M987.5 518.0L1008.9 512.8M987.5 518.0L992.6 542.1M987.5 518.0L1000.4 537.4M992.6 542.1L1000.4 537.4M992.6 542.1L992.7 554.8M992.6 542.1L1005.5 550.8M992.7 554.8L1005.5 550.8M992.7 554.8L990.4 571.8M992.7 554.8L999.3 569.3M990.4 571.8L999.3 569.3M990.4 571.8L993.3 596.3M999.3 569.3L993.3 596.3M993.3 596.3L1008.4 590.6M993.3 596.3L984.4 614.5M1008.4 590.6L984.4 614.5M984.4 614.5L1011.0 612.6M984.4 614.5L983.0 621.9M1011.0 612.6L983.0 621.9M983.0 621.9L1011.0 621.1M983.0 621.9L989.8 642.4M983.0 621.9L1001.0 638.9M989.8 642.4L1001.0 638.9M989.8 642.4L987.2 664.8M989.8 642.4L1004.1 661.0M987.2 664.8L1004.1 661.0M987.2 664.8L981.2 684.1M987.2 664.8L999.3 681.6M981.2 684.1L999.3 681.6M981.2 684.1L984.2 698.1M999.3 681.6L984.2 698.1M984.2 698.1L999.9 696.6M984.2 698.1L985.0 720.1M999.9 696.6L985.0 720.1M985.0 720.1L1001.8 720.8M985.0 720.1L990.1 732.3M1001.8 720.8L990.1 732.3M990.1 732.3L1004.0 732.0M990.1 732.3L982.0 750.5M1004.0 732.0L982.0 750.5M982.0 750.5L999.3 752.1M982.0 750.5L985.9 765.7M982.0 750.5L1006.6 773.2M985.9 765.7L1006.6 773.2M985.9 765.7L982.6 792.3M1006.6 773.2L982.6 792.3M982.6 792.3L1010.2 792.9M982.6 792.3L989.5 813.0M982.6 792.3L1001.8 802.4M989.5 813.0L1001.8 802.4M1011.0 379.7L1026.3 378.6M1011.0 379.7L1003.4 388.7M1026.3 378.6L1003.4 388.7M1003.4 388.7L1023.1 397.2M1003.4 388.7L1002.6 410.5M1003.4 388.7L1023.7 408.2M1002.6 410.5L1023.7 408.2M1002.6 410.5L1005.3 429.5M1023.7 408.2L1005.3 429.5M1005.3 429.5L1018.8 422.9M1005.3 429.5L1003.2 451.4M1005.3 429.5L1024.8 452.0M1003.2 451.4L1024.8 452.0M1003.2 451.4L1002.3 464.5M1003.2 451.4L1028.1 464.6M1002.3 464.5L1028.1 464.6M1002.3 464.5L1009.9 486.9M1002.3 464.5L1025.1 488.4M1009.9 486.9L1025.1 488.4M1009.9 486.9L1002.4 497.8M1025.1 488.4L1002.4 497.8M1002.4 497.8L1027.0 502.3M1002.4 497.8L1008.9 512.8M1002.4 497.8L1021.9 519.2M1008.9 512.8L1021.9 519.2M1008.9 512.8L1000.4 537.4M1008.9 512.8L1018.9 533.0M1000.4 537.4L1018.9 533.0M1000.4 537.4L1005.5 550.8M1000.4 537.4L1025.3 561.2M1005.5 550.8L1025.3 561.2M1005.5 550.8L999.3 569.3M1025.3 561.2L999.3 569.3M999.3 569.3L1023.6 571.8M999.3 569.3L1008.4 590.6M999.3 569.3L1021.1 590.4M1008.4 590.6L1021.1 590.4M1008.4 590.6L1011.0 612.6M1021.1 590.4L1011.0 612.6M1011.0 612.6L1026.8 608.4M1011.0 612.6L1011.0 621.1M1026.8 608.4L1011.0 621.1M1011.0 621.1L1028.8 622.7M1011.0 621.1L1001.0 638.9M1028.8 622.7L1001.0 638.9M1001.0 638.9L1020.7 645.3M1001.0 638.9L1004.1 661.0M1020.7 645.3L1004.1 661.0M1004.1 661.0L1021.9 667.4M1004.1 661.0L999.3 681.6M1004.1 661.0L1027.1 686.4M999.3 681.6L1027.1 686.4M999.3 681.6L999.9 696.6M1027.1 686.4L999.9 696.6M999.9 696.6L1024.4 693.1M999.9 696.6L1001.8 720.8M1024.4 693.1L1001.8 720.8M1001.8 720.8L1023.9 717.6M1001.8 720.8L1004.0 732.0M1023.9 717.6L1004.0 732.0M1004.0 732.0L1022.8 732.2M1004.0 732.0L999.3 752.1M1004.0 732.0L1025.6 758.2M999.3 752.1L1025.6 758.2M999.3 752.1L1006.6 773.2M999.3 752.1L1018.0 773.1M1006.6 773.2L1018.0 773.1M1006.6 773.2L1010.2 792.9M1018.0 773.1L1010.2 792.9M1010.2 792.9L1021.4 789.2M1010.2 792.9L1001.8 802.4M1021.4 789.2L1001.8 802.4M1001.8 802.4L1028.0 812.8M1026.3 378.6L1042.8 371.2M1026.3 378.6L1023.1 397.2M1042.8 371.2L1023.1 397.2M1023.1 397.2L1046.3 389.0M1023.1 397.2L1023.7 408.2M1046.3 389.0L1023.7 408.2M1023.7 408.2L1039.5 415.1M1023.7 408.2L1018.8 422.9M1039.5 415.1L1018.8 422.9M1018.8 422.9L1038.7 426.1M1018.8 422.9L1024.8 452.0M1018.8 422.9L1046.7 452.6M1024.8 452.0L1046.7 452.6M1024.8 452.0L1028.1 464.6M1046.7 452.6L1028.1 464.6M1028.1 464.6L1038.7 463.6M1028.1 464.6L1025.1 488.4M1038.7 463.6L1025.1 488.4M1025.1 488.4L1038.3 478.4M1025.1 488.4L1027.0 502.3M1025.1 488.4L1037.9 507.1M1027.0 502.3L1037.9 507.1M1027.0 502.3L1021.9 519.2M1037.9 507.1L1021.9 519.2M1021.9 519.2L1035.7 515.6M1021.9 519.2L1018.9 533.0M1035.7 515.6L1018.9 533.0M1018.9 533.0L1037.2 531.7M1018.9 533.0L1025.3 561.2M1037.2 531.7L1025.3 561.2M1025.3 561.2L1041.3 558.1M1025.3 561.2L1023.6 571.8M1025.3 561.2L1045.3 574.7M1023.6 571.8L1045.3 574.7M1023.6 571.8L1021.1 590.4M1023.6 571.8L1045.0 584.8M1021.1 590.4L1045.0 584.8M1021.1 590.4L1026.8 608.4M1045.0 584.8L1026.8 608.4M1026.8 608.4L1038.3 614.8M1026.8 608.4L1028.8 622.7M1038.3 614.8L1028.8 622.7M1028.8 622.7L1035.6 624.1M1028.8 622.7L1020.7 645.3M1035.6 624.1L1020.7 645.3M1020.7 645.3L1040.8 642.1M1020.7 645.3L1021.9 667.4M1020.7 645.3L1041.6 657.3M1021.9 667.4L1041.6 657.3M1021.9 667.4L1027.1 686.4M1041.6 657.3L1027.1 686.4M1027.1 686.4L1037.7 686.8M1027.1 686.4L1024.4 693.1M1037.7 686.8L1024.4 693.1M1024.4 693.1L1036.5 704.1M1024.4 693.1L1023.9 717.6M1024.4 693.1L1036.9 723.2M1023.9 717.6L1036.9 723.2M1023.9 717.6L1022.8 732.2M1036.9 723.2L1022.8 732.2M1022.8 732.2L1043.2 736.9M1022.8 732.2L1025.6 758.2M1022.8 732.2L1036.5 747.4M1025.6 758.2L1036.5 747.4M1025.6 758.2L1018.0 773.1M1025.6 758.2L1044.3 766.9M1018.0 773.1L1044.3 766.9M1018.0 773.1L1021.4 789.2M1018.0 773.1L1037.1 793.1M1021.4 789.2L1037.1 793.1M1021.4 789.2L1028.0 812.8M1037.1 793.1L1028.0 812.8M1028.0 812.8L1045.7 801.3M1042.8 371.2L1064.8 375.4M1042.8 371.2L1046.3 389.0M1064.8 375.4L1046.3 389.0M1046.3 389.0L1057.5 388.0M1046.3 389.0L1039.5 415.1M1046.3 389.0L1057.6 417.1M1039.5 415.1L1057.6 417.1M1039.5 415.1L1038.7 426.1M1039.5 415.1L1056.2 424.4M1038.7 426.1L1056.2 424.4M1038.7 426.1L1046.7 452.6M1038.7 426.1L1054.5 442.3M1046.7 452.6L1054.5 442.3M1046.7 452.6L1038.7 463.6M1046.7 452.6L1057.1 470.2M1038.7 463.6L1057.1 470.2M1038.7 463.6L1038.3 478.4M1057.1 470.2L1038.3 478.4M1038.3 478.4L1053.7 479.1M1038.3 478.4L1037.9 507.1M1038.3 478.4L1064.5 507.3M1037.9 507.1L1064.5 507.3M1037.9 507.1L1035.7 515.6M1064.5 507.3L1035.7 515.6M1035.7 515.6L1065.0 515.8M1035.7 515.6L1037.2 531.7M1065.0 515.8L1037.2 531.7M1037.2 531.7L1057.2 542.7M1037.2 531.7L1041.3 558.1M1037.2 531.7L1058.8 557.6M1041.3 558.1L1058.8 557.6M1041.3 558.1L1045.3 574.7M1058.8 557.6L1045.3 574.7M1045.3 574.7L1056.6 567.0M1045.3 574.7L1045.0 584.8M1045.3 574.7L1057.1 594.1M1045.0 584.8L1057.1 594.1M1045.0 584.8L1038.3 614.8M1057.1 594.1L1038.3 614.8M1038.3 614.8L1062.6 609.9M1038.3 614.8L1035.6 624.1M1062.6 609.9L1035.6 624.1M1035.6 624.1L1058.5 627.5M1035.6 624.1L1040.8 642.1M1035.6 624.1L1058.3 645.4M1040.8 642.1L1058.3 645.4M1040.8 642.1L1041.6 657.3M1040.8 642.1L1063.2 659.2M1041.6 657.3L1063.2 659.2M1041.6 657.3L1037.7 686.8M1063.2 659.2L1037.7 686.8M1037.7 686.8L1060.2 686.5M1037.7 686.8L1036.5 704.1M1060.2 686.5L1036.5 704.1M1036.5 704.1L1063.4 695.0M1036.5 704.1L1036.9 723.2M1063.4 695.0L1036.9 723.2M1036.9 723.2L1064.8 721.3M1036.9 723.2L1043.2 736.9M1036.9 723.2L1054.8 732.1M1043.2 736.9L1054.8 732.1M1043.2 736.9L1036.5 747.4M1054.8 732.1L1036.5 747.4M1036.5 747.4L1055.2 747.4M1036.5 747.4L1044.3 766.9M1036.5 747.4L1065.0 769.9M1044.3 766.9L1065.0 769.9M1044.3 766.9L1037.1 793.1M1044.3 766.9L1063.7 784.1M1037.1 793.1L1063.7 784.1M1037.1 793.1L1045.7 801.3M1063.7 784.1L1045.7 801.3M1045.7 801.3L1052.9 811.7M1064.8 375.4L1080.7 381.2M1064.8 375.4L1057.5 388.0M1080.7 381.2L1057.5 388.0M1057.5 388.0L1079.3 393.3M1057.5 388.0L1057.6 417.1M1057.5 388.0L1080.4 405.9M1057.6 417.1L1080.4 405.9M1057.6 417.1L1056.2 424.4M1080.4 405.9L1056.2 424.4M1056.2 424.4L1077.5 428.3M1056.2 424.4L1054.5 442.3M1056.2 424.4L1072.5 448.3M1054.5 442.3L1072.5 448.3M1054.5 442.3L1057.1 470.2M1072.5 448.3L1057.1 470.2M1057.1 470.2L1074.8 465.1M1057.1 470.2L1053.7 479.1M1074.8 465.1L1053.7 479.1M1053.7 479.1L1075.4 480.7M1053.7 479.1L1064.5 507.3M1053.7 479.1L1075.2 502.3M1064.5 507.3L1075.2 502.3M1064.5 507.3L1065.0 515.8M1064.5 507.3L1083.1 524.5M1065.0 515.8L1083.1 524.5M1065.0 515.8L1057.2 542.7M1083.1 524.5L1057.2 542.7M1057.2 542.7L1081.6 541.2M1057.2 542.7L1058.8 557.6M1081.6 541.2L1058.8 557.6M1058.8 557.6L1074.3 561.0M1058.8 557.6L1056.6 567.0M1074.3 561.0L1056.6 567.0M1056.6 567.0L1074.1 568.3M1056.6 567.0L1057.1 594.1M1074.1 568.3L1057.1 594.1M1057.1 594.1L1077.0 593.9M1057.1 594.1L1062.6 609.9M1077.0 593.9L1062.6 609.9M1062.6 609.9L1075.0 610.8M1062.6 609.9L1058.5 627.5M1075.0 610.8L1058.5 627.5M1058.5 627.5L1074.3 632.9M1058.5 627.5L1058.3 645.4M1074.3 632.9L1058.3 645.4M1058.3 645.4L1076.4 644.7M1058.3 645.4L1063.2 659.2M1076.4 644.7L1063.2 659.2M1063.2 659.2L1077.4 667.7M1063.2 659.2L1060.2 686.5M1063.2 659.2L1083.1 681.4M1060.2 686.5L1083.1 681.4M1060.2 686.5L1063.4 695.0M1083.1 681.4L1063.4 695.0M1063.4 695.0L1076.3 700.5M1063.4 695.0L1064.8 721.3M1076.3 700.5L1064.8 721.3M1064.8 721.3L1071.6 716.1M1064.8 721.3L1054.8 732.1M1071.6 716.1L1054.8 732.1M1054.8 732.1L1081.4 738.5M1054.8 732.1L1055.2 747.4M1054.8 732.1L1071.4 757.5M1055.2 747.4L1071.4 757.5M1055.2 747.4L1065.0 769.9M1055.2 747.4L1075.5 777.1M1065.0 769.9L1075.5 777.1M1065.0 769.9L1063.7 784.1M1075.5 777.1L1063.7 784.1M1063.7 784.1L1075.3 785.4M1063.7 784.1L1052.9 811.7M1063.7 784.1L1077.6 811.8M1052.9 811.7L1077.6 811.8M1080.7 381.2L1094.1 379.6M1080.7 381.2L1079.3 393.3M1094.1 379.6L1079.3 393.3M1079.3 393.3L1097.7 391.3M1079.3 393.3L1080.4 405.9M1097.7 391.3L1080.4 405.9M1080.4 405.9L1092.5 411.1M1080.4 405.9L1077.5 428.3M1092.5 411.1L1077.5 428.3M1077.5 428.3L1093.7 427.4M1077.5 428.3L1072.5 448.3M1077.5 428.3L1096.9 451.7M1072.5 448.3L1096.9 451.7M1072.5 448.3L1074.8 465.1M1096.9 451.7L1074.8 465.1M1074.8 465.1L1096.1 460.5M1074.8 465.1L1075.4 480.7M1096.1 460.5L1075.4 480.7M1075.4 480.7L1091.5 481.4M1075.4 480.7L1075.2 502.3M1091.5 481.4L1075.2 502.3M1075.2 502.3L1096.4 496.5M1075.2 502.3L1083.1 524.5M1096.4 496.5L1083.1 524.5M1083.1 524.5L1089.7 516.7M1083.1 524.5L1081.6 541.2M1083.1 524.5L1092.3 531.1M1081.6 541.2L1092.3 531.1M1081.6 541.2L1074.3 561.0M1092.3 531.1L1074.3 561.0M1074.3 561.0L1095.5 560.3M1074.3 561.0L1074.1 568.3M1095.5 560.3L1074.1 568.3M1074.1 568.3L1095.4 576.0M1074.1 568.3L1077.0 593.9M1074.1 568.3L1099.1 595.3M1077.0 593.9L1099.1 595.3M1077.0 593.9L1075.0 610.8M1077.0 593.9L1100.2 608.3M1075.0 610.8L1100.2 608.3M1075.0 610.8L1074.3 632.9M1075.0 610.8L1097.3 622.2M1074.3 632.9L1097.3 622.2M1074.3 632.9L1076.4 644.7M1097.3 622.2L1076.4 644.7M1076.4 644.7L1099.8 643.5M1076.4 644.7L1077.4 667.7M1076.4 644.7L1094.7 667.9M1077.4 667.7L1094.7 667.9M1077.4 667.7L1083.1 681.4M1094.7 667.9L1083.1 681.4M1083.1 681.4L1092.3 677.1M1083.1 681.4L1076.3 700.5M1092.3 677.1L1076.3 700.5M1076.3 700.5L1099.1 700.2M1076.3 700.5L1071.6 716.1M1099.1 700.2L1071.6 716.1M1071.6 716.1L1089.8 711.1M1071.6 716.1L1081.4 738.5M1071.6 716.1L1093.1 728.8M1081.4 738.5L1093.1 728.8M1081.4 738.5L1071.4 757.5M1093.1 728.8L1071.4 757.5M1071.4 757.5L1099.2 749.0M1071.4 757.5L1075.5 777.1M1099.2 749.0L1075.5 777.1M1075.5 777.1L1092.2 769.6M1075.5 777.1L1075.3 785.4M1092.2 769.6L1075.3 785.4M1075.3 785.4L1095.1 788.1M1075.3 785.4L1077.6 811.8M1095.1 788.1L1077.6 811.8M1077.6 811.8L1096.6 809.0M1094.1 379.6L1112.2 369.9M1094.1 379.6L1097.7 391.3M1112.2 369.9L1097.7 391.3M1097.7 391.3L1119.0 395.4M1097.7 391.3L1092.5 411.1M1119.0 395.4L1092.5 411.1M1092.5 411.1L1107.8 410.3M1092.5 411.1L1093.7 427.4M1107.8 410.3L1093.7 427.4M1093.7 427.4L1116.2 435.2M1093.7 427.4L1096.9 451.7M1116.2 435.2L1096.9 451.7M1096.9 451.7L1107.5 440.8M1096.9 451.7L1096.1 460.5M1096.9 451.7L1112.7 464.0M1096.1 460.5L1112.7 464.0M1096.1 460.5L1091.5 481.4M1096.1 460.5L1118.0 487.1M1091.5 481.4L1118.0 487.1M1091.5 481.4L1096.4 496.5M1118.0 487.1L1096.4 496.5M1096.4 496.5L1110.9 500.0M1096.4 496.5L1089.7 516.7M1096.4 496.5L1114.0 523.8M1089.7 516.7L1114.0 523.8M1089.7 516.7L1092.3 531.1M1089.7 516.7L1109.2 535.6M1092.3 531.1L1109.2 535.6M1092.3 531.1L1095.5 560.3M1109.2 535.6L1095.5 560.3M1095.5 560.3L1107.8 556.8M1095.5 560.3L1095.4 576.0M1107.8 556.8L1095.4 576.0M1095.4 576.0L1107.0 578.5M1095.4 576.0L1099.1 595.3M1107.0 578.5L1099.1 595.3M1099.1 595.3L1113.3 591.9M1099.1 595.3L1100.2 608.3M1099.1 595.3L1107.8 605.6M1100.2 608.3L1107.8 605.6M1100.2 608.3L1097.3 622.2M1107.8 605.6L1097.3 622.2M1097.3 622.2L1112.6 631.5M1097.3 622.2L1099.8 643.5M1097.3 622.2L1113.5 642.3M1099.8 643.5L1113.5 642.3M1099.8 643.5L1094.7 667.9M1099.8 643.5L1119.1 665.0M1094.7 667.9L1119.1 665.0M1094.7 667.9L1092.3 677.1M1094.7 667.9L1113.4 677.2M1092.3 677.1L1113.4 677.2M1092.3 677.1L1099.1 700.2M1113.4 677.2L1099.1 700.2M1099.1 700.2L1110.5 704.0M1099.1 700.2L1089.8 711.1M1110.5 704.0L1089.8 711.1M1089.8 711.1L1108.4 717.4M1089.8 711.1L1093.1 728.8M1089.8 711.1L1114.5 733.2M1093.1 728.8L1114.5 733.2M1093.1 728.8L1099.2 749.0M1114.5 733.2L1099.2 749.0M1099.2 749.0L1116.4 758.2M1099.2 749.0L1092.2 769.6M1099.2 749.0L1117.5 774.0M1092.2 769.6L1117.5 774.0M1092.2 769.6L1095.1 788.1M1092.2 769.6L1109.3 783.5M1095.1 788.1L1109.3 783.5M1095.1 788.1L1096.6 809.0M1095.1 788.1L1112.2 804.6M1096.6 809.0L1112.2 804.6M1112.2 369.9L1127.1 379.7M1112.2 369.9L1119.0 395.4M1112.2 369.9L1127.4 397.1M1119.0 395.4L1127.4 397.1M1119.0 395.4L1107.8 410.3M1119.0 395.4L1136.5 406.2M1107.8 410.3L1136.5 406.2M1107.8 410.3L1116.2 435.2M1136.5 406.2L1116.2 435.2M1116.2 435.2L1136.2 427.7M1116.2 435.2L1107.5 440.8M1116.2 435.2L1127.4 443.0M1107.5 440.8L1127.4 443.0M1107.5 440.8L1112.7 464.0M1127.4 443.0L1112.7 464.0M1112.7 464.0L1125.2 465.0M1112.7 464.0L1118.0 487.1M1112.7 464.0L1129.5 487.4M1118.0 487.1L1129.5 487.4M1118.0 487.1L1110.9 500.0M1118.0 487.1L1135.2 495.4M1110.9 500.0L1135.2 495.4M1110.9 500.0L1114.0 523.8M1135.2 495.4L1114.0 523.8M1114.0 523.8L1129.8 517.6M1114.0 523.8L1109.2 535.6M1114.0 523.8L1126.9 533.9M1109.2 535.6L1126.9 533.9M1109.2 535.6L1107.8 556.8M1126.9 533.9L1107.8 556.8M1107.8 556.8L1128.0 557.4M1107.8 556.8L1107.0 578.5M1128.0 557.4L1107.0 578.5M1107.0 578.5L1129.0 568.1M1107.0 578.5L1113.3 591.9M1129.0 568.1L1113.3 591.9M1113.3 591.9L1127.5 590.3M1113.3 591.9L1107.8 605.6M1127.5 590.3L1107.8 605.6M1107.8 605.6L1131.8 605.8M1107.8 605.6L1112.6 631.5M1107.8 605.6L1133.5 623.4M1112.6 631.5L1133.5 623.4M1112.6 631.5L1113.5 642.3M1112.6 631.5L1133.2 646.4M1113.5 642.3L1133.2 646.4M1113.5 642.3L1119.1 665.0M1133.2 646.4L1119.1 665.0M1119.1 665.0L1126.9 666.2M1119.1 665.0L1113.4 677.2M1126.9 666.2L1113.4 677.2M1113.4 677.2L1129.7 681.5M1113.4 677.2L1110.5 704.0M1113.4 677.2L1132.2 700.6M1110.5 704.0L1132.2 700.6M1110.5 704.0L1108.4 717.4M1110.5 704.0L1130.3 711.4M1108.4 717.4L1130.3 711.4M1108.4 717.4L1114.5 733.2M1108.4 717.4L1134.6 739.5M1114.5 733.2L1134.6 739.5M1114.5 733.2L1116.4 758.2M1134.6 739.5L1116.4 758.2M1116.4 758.2L1130.9 754.0M1116.4 758.2L1117.5 774.0M1116.4 758.2L1128.1 776.0M1117.5 774.0L1128.1 776.0M1117.5 774.0L1109.3 783.5M1128.1 776.0L1109.3 783.5M1109.3 783.5L1133.3 785.5M1109.3 783.5L1112.2 804.6M1109.3 783.5L1135.0 813.1M1112.2 804.6L1135.0 813.1M1127.1 379.7L1147.1 381.2M1127.1 379.7L1127.4 397.1M1147.1 381.2L1127.4 397.1M1127.4 397.1L1148.8 389.0M1127.4 397.1L1136.5 406.2M1148.8 389.0L1136.5 406.2M1136.5 406.2L1151.7 409.0M1136.5 406.2L1136.2 427.7M1136.5 406.2L1151.9 430.1M1136.2 427.7L1151.9 430.1M1136.2 427.7L1127.4 443.0M1151.9 430.1L1127.4 443.0M1127.4 443.0L1144.1 447.4M1127.4 443.0L1125.2 465.0M1144.1 447.4L1125.2 465.0M1125.2 465.0L1153.4 464.7M1125.2 465.0L1129.5 487.4M1125.2 465.0L1149.5 487.6M1129.5 487.4L1149.5 487.6M1129.5 487.4L1135.2 495.4M1149.5 487.6L1135.2 495.4M1135.2 495.4L1148.3 500.9M1135.2 495.4L1129.8 517.6M1148.3 500.9L1129.8 517.6M1129.8 517.6L1150.0 523.1M1129.8 517.6L1126.9 533.9M1150.0 523.1L1126.9 533.9M1126.9 533.9L1145.3 531.9M1126.9 533.9L1128.0 557.4M1126.9 533.9L1152.3 555.7M1128.0 557.4L1152.3 555.7M1128.0 557.4L1129.0 568.1M1128.0 557.4L1146.5 577.9M1129.0 568.1L1146.5 577.9M1129.0 568.1L1127.5 590.3M1146.5 577.9L1127.5 590.3M1127.5 590.3L1153.8 591.5M1127.5 590.3L1131.8 605.8M1153.8 591.5L1131.8 605.8M1131.8 605.8L1155.2 613.2M1131.8 605.8L1133.5 623.4M1131.8 605.8L1152.1 624.4M1133.5 623.4L1152.1 624.4M1133.5 623.4L1133.2 646.4M1152.1 624.4L1133.2 646.4M1133.2 646.4L1142.8 647.3M1133.2 646.4L1126.9 666.2M1133.2 646.4L1152.0 661.1M1126.9 666.2L1152.0 661.1M1126.9 666.2L1129.7 681.5M1152.0 661.1L1129.7 681.5M1129.7 681.5L1148.7 681.8M1129.7 681.5L1132.2 700.6M1129.7 681.5L1145.8 701.5M1132.2 700.6L1145.8 701.5M1132.2 700.6L1130.3 711.4M1132.2 700.6L1149.8 715.6M1130.3 711.4L1149.8 715.6M1130.3 711.4L1134.6 739.5M1130.3 711.4L1144.1 735.7M1134.6 739.5L1144.1 735.7M1134.6 739.5L1130.9 754.0M1134.6 739.5L1146.7 755.8M1130.9 754.0L1146.7 755.8M1130.9 754.0L1128.1 776.0M1130.9 754.0L1144.9 769.7M1128.1 776.0L1144.9 769.7M1128.1 776.0L1133.3 785.5M1144.9 769.7L1133.3 785.5M1133.3 785.5L1145.2 787.8M1133.3 785.5L1135.0 813.1M1145.2 787.8L1135.0 813.1M1135.0 813.1L1150.0 802.0M1147.1 381.2L1161.4 374.8M1147.1 381.2L1148.8 389.0M1161.4 374.8L1148.8 389.0M1148.8 389.0L1163.2 393.1M1148.8 389.0L1151.7 409.0M1148.8 389.0L1162.8 406.0M1151.7 409.0L1162.8 406.0M1151.7 409.0L1151.9 430.1M1151.7 409.0L1167.5 434.3M1151.9 430.1L1167.5 434.3M1151.9 430.1L1144.1 447.4M1167.5 434.3L1144.1 447.4M1144.1 447.4L1171.6 447.2M1144.1 447.4L1153.4 464.7M1144.1 447.4L1165.7 459.5M1153.4 464.7L1165.7 459.5M1153.4 464.7L1149.5 487.6M1153.4 464.7L1164.2 480.7M1149.5 487.6L1164.2 480.7M1149.5 487.6L1148.3 500.9M1149.5 487.6L1172.6 496.2M1148.3 500.9L1172.6 496.2M1148.3 500.9L1150.0 523.1M1172.6 496.2L1150.0 523.1M1150.0 523.1L1172.6 518.7M1150.0 523.1L1145.3 531.9M1172.6 518.7L1145.3 531.9M1145.3 531.9L1166.2 534.0M1145.3 531.9L1152.3 555.7M1145.3 531.9L1172.8 551.0M1152.3 555.7L1172.8 551.0M1152.3 555.7L1146.5 577.9M1152.3 555.7L1167.9 573.1M1146.5 577.9L1167.9 573.1M1146.5 577.9L1153.8 591.5M1167.9 573.1L1153.8 591.5M1153.8 591.5L1163.2 587.5M1153.8 591.5L1155.2 613.2M1163.2 587.5L1155.2 613.2M1155.2 613.2L1173.1 612.7M1155.2 613.2L1152.1 624.4M1173.1 612.7L1152.1 624.4M1152.1 624.4L1169.9 632.1M1152.1 624.4L1142.8 647.3M1169.9 632.1L1142.8 647.3M1142.8 647.3L1161.9 647.6M1142.8 647.3L1152.0 661.1M1161.9 647.6L1152.0 661.1M1152.0 661.1L1170.2 659.5M1152.0 661.1L1148.7 681.8M1152.0 661.1L1166.5 687.0M1148.7 681.8L1166.5 687.0M1148.7 681.8L1145.8 701.5M1148.7 681.8L1164.8 702.3M1145.8 701.5L1164.8 702.3M1145.8 701.5L1149.8 715.6M1145.8 701.5L1162.8 719.1M1149.8 715.6L1162.8 719.1M1149.8 715.6L1144.1 735.7M1149.8 715.6L1164.1 735.1M1144.1 735.7L1164.1 735.1M1144.1 735.7L1146.7 755.8M1144.1 735.7L1165.4 757.7M1146.7 755.8L1165.4 757.7M1146.7 755.8L1144.9 769.7M1146.7 755.8L1170.1 771.1M1144.9 769.7L1170.1 771.1M1144.9 769.7L1145.2 787.8M1144.9 769.7L1169.4 788.1M1145.2 787.8L1169.4 788.1M1145.2 787.8L1150.0 802.0M1169.4 788.1L1150.0 802.0M1150.0 802.0L1170.8 803.9M1161.4 374.8L1185.6 376.1M1161.4 374.8L1163.2 393.1M1185.6 376.1L1163.2 393.1M1163.2 393.1L1183.6 387.3M1163.2 393.1L1162.8 406.0M1183.6 387.3L1162.8 406.0M1162.8 406.0L1180.8 412.8M1162.8 406.0L1167.5 434.3M1162.8 406.0L1181.4 432.3M1167.5 434.3L1181.4 432.3M1167.5 434.3L1171.6 447.2M1167.5 434.3L1185.1 452.7M1171.6 447.2L1185.1 452.7M1171.6 447.2L1165.7 459.5M1185.1 452.7L1165.7 459.5M1165.7 459.5L1189.4 467.9M1165.7 459.5L1164.2 480.7M1189.4 467.9L1164.2 480.7M1164.2 480.7L1183.4 477.2M1164.2 480.7L1172.6 496.2M1164.2 480.7L1185.7 504.1M1172.6 496.2L1185.7 504.1M1172.6 496.2L1172.6 518.7M1185.7 504.1L1172.6 518.7M1172.6 518.7L1190.3 515.3M1172.6 518.7L1166.2 534.0M1190.3 515.3L1166.2 534.0M1166.2 534.0L1180.7 543.1M1166.2 534.0L1172.8 551.0M1180.7 543.1L1172.8 551.0M1172.8 551.0L1188.0 554.8M1172.8 551.0L1167.9 573.1M1172.8 551.0L1188.0 568.6M1167.9 573.1L1188.0 568.6M1167.9 573.1L1163.2 587.5M1167.9 573.1L1185.6 593.1M1163.2 587.5L1185.6 593.1M1163.2 587.5L1173.1 612.7M1163.2 587.5L1186.3 604.7M1173.1 612.7L1186.3 604.7M1173.1 612.7L1169.9 632.1M1186.3 604.7L1169.9 632.1M1169.9 632.1L1180.4 628.6M1169.9 632.1L1161.9 647.6M1169.9 632.1L1189.8 640.4M1161.9 647.6L1189.8 640.4M1161.9 647.6L1170.2 659.5M1189.8 640.4L1170.2 659.5M1170.2 659.5L1178.8 657.7M1170.2 659.5L1166.5 687.0M1170.2 659.5L1188.6 679.6M1166.5 687.0L1188.6 679.6M1166.5 687.0L1164.8 702.3M1166.5 687.0L1184.4 705.2M1164.8 702.3L1184.4 705.2M1164.8 702.3L1162.8 719.1M1184.4 705.2L1162.8 719.1M1162.8 719.1L1186.4 714.0M1162.8 719.1L1164.1 735.1M1162.8 719.1L1187.5 728.7M1164.1 735.1L1187.5 728.7M1164.1 735.1L1165.4 757.7M1164.1 735.1L1182.2 755.5M1165.4 757.7L1182.2 755.5M1165.4 757.7L1170.1 771.1M1182.2 755.5L1170.1 771.1M1170.1 771.1L1180.9 765.1M1170.1 771.1L1169.4 788.1M1170.1 771.1L1185.2 786.8M1169.4 788.1L1185.2 786.8M1169.4 788.1L1170.8 803.9M1185.2 786.8L1170.8 803.9M1170.8 803.9L1190.9 802.0M1185.6 376.1L1206.8 373.6M1185.6 376.1L1183.6 387.3M1206.8 373.6L1183.6 387.3M1183.6 387.3L1206.8 392.3M1183.6 387.3L1180.8 412.8M1183.6 387.3L1205.1 408.8M1180.8 412.8L1205.1 408.8M1180.8 412.8L1181.4 432.3M1205.1 408.8L1181.4 432.3M1181.4 432.3L1199.5 428.4M1181.4 432.3L1185.1 452.7M1199.5 428.4L1185.1 452.7M1185.1 452.7L1206.8 445.1M1185.1 452.7L1189.4 467.9M1206.8 445.1L1189.4 467.9M1189.4 467.9L1199.6 463.9M1189.4 467.9L1183.4 477.2M1199.6 463.9L1183.4 477.2M1183.4 477.2L1197.9 480.7M1183.4 477.2L1185.7 504.1M1197.9 480.7L1185.7 504.1M1185.7 504.1L1203.9 501.6M1185.7 504.1L1190.3 515.3M1203.9 501.6L1190.3 515.3M1190.3 515.3L1204.2 516.4M1190.3 515.3L1180.7 543.1M1204.2 516.4L1180.7 543.1M1180.7 543.1L1197.0 531.0M1180.7 543.1L1188.0 554.8M1180.7 543.1L1201.0 551.2M1188.0 554.8L1201.0 551.2M1188.0 554.8L1188.0 568.6M1201.0 551.2L1188.0 568.6M1188.0 568.6L1203.9 570.0M1188.0 568.6L1185.6 593.1M1203.9 570.0L1185.6 593.1M1185.6 593.1L1206.3 592.3M1185.6 593.1L1186.3 604.7M1185.6 593.1L1205.0 612.0M1186.3 604.7L1205.0 612.0M1186.3 604.7L1180.4 628.6M1205.0 612.0L1180.4 628.6M1180.4 628.6L1203.3 626.1M1180.4 628.6L1189.8 640.4M1180.4 628.6L1200.6 639.5M1189.8 640.4L1200.6 639.5M1189.8 640.4L1178.8 657.7M1200.6 639.5L1178.8 657.7M1178.8 657.7L1206.7 663.0M1178.8 657.7L1188.6 679.6M1206.7 663.0L1188.6 679.6M1188.6 679.6L1198.0 686.4M1188.6 679.6L1184.4 705.2M1198.0 686.4L1184.4 705.2M1184.4 705.2L1204.0 700.6M1184.4 705.2L1186.4 714.0M1184.4 705.2L1202.2 712.3M1186.4 714.0L1202.2 712.3M1186.4 714.0L1187.5 728.7M1202.2 712.3L1187.5 728.7M1187.5 728.7L1209.3 730.8M1187.5 728.7L1182.2 755.5M1187.5 728.7L1201.3 759.3M1182.2 755.5L1201.3 759.3M1182.2 755.5L1180.9 765.1M1201.3 759.3L1180.9 765.1M1180.9 765.1L1198.2 771.0M1180.9 765.1L1185.2 786.8M1180.9 765.1L1202.7 785.8M1185.2 786.8L1202.7 785.8M1185.2 786.8L1190.9 802.0M1202.7 785.8L1190.9 802.0M1190.9 802.0L1208.4 805.9M1206.8 373.6L1214.8 374.7M1206.8 373.6L1206.8 392.3M1214.8 374.7L1206.8 392.3M1206.8 392.3L1214.8 395.6M1206.8 392.3L1205.1 408.8M1214.8 395.6L1205.1 408.8M1205.1 408.8L1225.6 416.1M1205.1 408.8L1199.5 428.4M1205.1 408.8L1215.3 431.2M1199.5 428.4L1215.3 431.2M1199.5 428.4L1206.8 445.1M1215.3 431.2L1206.8 445.1M1206.8 445.1L1218.5 446.7M1206.8 445.1L1199.6 463.9M1206.8 445.1L1218.5 462.5M1199.6 463.9L1218.5 462.5M1199.6 463.9L1197.9 480.7M1218.5 462.5L1197.9 480.7M1197.9 480.7L1216.4 484.6M1197.9 480.7L1203.9 501.6M1197.9 480.7L1215.8 506.8M1203.9 501.6L1215.8 506.8M1203.9 501.6L1204.2 516.4M1215.8 506.8L1204.2 516.4M1204.2 516.4L1215.3 524.8M1204.2 516.4L1197.0 531.0M1204.2 516.4L1217.1 531.8M1197.0 531.0L1217.1 531.8M1197.0 531.0L1201.0 551.2M1197.0 531.0L1224.1 555.4M1201.0 551.2L1224.1 555.4M1201.0 551.2L1203.9 570.0M1201.0 551.2L1224.4 573.1M1203.9 570.0L1224.4 573.1M1203.9 570.0L1206.3 592.3M1203.9 570.0L1222.6 585.7M1206.3 592.3L1222.6 585.7M1206.3 592.3L1205.0 612.0M1206.3 592.3L1223.2 609.2M1205.0 612.0L1223.2 609.2M1205.0 612.0L1203.3 626.1M1205.0 612.0L1226.8 620.8M1203.3 626.1L1226.8 620.8M1203.3 626.1L1200.6 639.5M1226.8 620.8L1200.6 639.5M1200.6 639.5L1215.6 647.2M1200.6 639.5L1206.7 663.0M1200.6 639.5L1226.4 662.0M1206.7 663.0L1226.4 662.0M1206.7 663.0L1198.0 686.4M1226.4 662.0L1198.0 686.4M1198.0 686.4L1223.7 681.8M1198.0 686.4L1204.0 700.6M1223.7 681.8L1204.0 700.6M1204.0 700.6L1219.6 698.6M1204.0 700.6L1202.2 712.3M1219.6 698.6L1202.2 712.3M1202.2 712.3L1222.3 711.1M1202.2 712.3L1209.3 730.8M1202.2 712.3L1218.6 738.0M1209.3 730.8L1218.6 738.0M1209.3 730.8L1201.3 759.3M1218.6 738.0L1201.3 759.3M1201.3 759.3L1218.0 752.7M1201.3 759.3L1198.2 771.0M1218.0 752.7L1198.2 771.0M1198.2 771.0L1217.9 769.2M1198.2 771.0L1202.7 785.8M1217.9 769.2L1202.7 785.8M1202.7 785.8L1222.9 792.1M1202.7 785.8L1208.4 805.9M1202.7 785.8L1226.8 806.7M1208.4 805.9L1226.8 806.7M1214.8 374.7L1235.3 372.9M1214.8 374.7L1214.8 395.6M1214.8 374.7L1233.4 389.7M1214.8 395.6L1233.4 389.7M1214.8 395.6L1225.6 416.1M1233.4 389.7L1225.6 416.1M1225.6 416.1L1240.1 412.4M1225.6 416.1L1215.3 431.2M1240.1 412.4L1215.3 431.2M1215.3 431.2L1235.7 425.0M1215.3 431.2L1218.5 446.7M1215.3 431.2L1233.9 443.0M1218.5 446.7L1233.9 443.0M1218.5 446.7L1218.5 462.5M1233.9 443.0L1218.5 462.5M1218.5 462.5L1239.0 461.9M1218.5 462.5L1216.4 484.6M1218.5 462.5L1243.8 483.8M1216.4 484.6L1243.8 483.8M1216.4 484.6L1215.8 506.8M1243.8 483.8L1215.8 506.8M1215.8 506.8L1237.0 500.1M1215.8 506.8L1215.3 524.8M1237.0 500.1L1215.3 524.8M1215.3 524.8L1233.2 521.9M1215.3 524.8L1217.1 531.8M1233.2 521.9L1217.1 531.8M1217.1 531.8L1242.2 535.3M1217.1 531.8L1224.1 555.4M1217.1 531.8L1241.8 552.1M1224.1 555.4L1241.8 552.1M1224.1 555.4L1224.4 573.1M1241.8 552.1L1224.4 573.1M1224.4 573.1L1235.5 569.6M1224.4 573.1L1222.6 585.7M1235.5 569.6L1222.6 585.7M1222.6 585.7L1235.2 592.3M1222.6 585.7L1223.2 609.2M1222.6 585.7L1240.8 611.9M1223.2 609.2L1240.8 611.9M1223.2 609.2L1226.8 620.8M1240.8 611.9L1226.8 620.8M1226.8 620.8L1234.0 630.4M1226.8 620.8L1215.6 647.2M1226.8 620.8L1238.7 643.5M1215.6 647.2L1238.7 643.5M1215.6 647.2L1226.4 662.0M1215.6 647.2L1239.0 662.2M1226.4 662.0L1239.0 662.2M1226.4 662.0L1223.7 681.8M1226.4 662.0L1235.2 679.7M1223.7 681.8L1235.2 679.7M1223.7 681.8L1219.6 698.6M1223.7 681.8L1240.8 701.7M1219.6 698.6L1240.8 701.7M1219.6 698.6L1222.3 711.1M1240.8 701.7L1222.3 711.1M1222.3 711.1L1244.2 713.1M1222.3 711.1L1218.6 738.0M1244.2 713.1L1218.6 738.0M1218.6 738.0L1243.9 738.8M1218.6 738.0L1218.0 752.7M1243.9 738.8L1218.0 752.7M1218.0 752.7L1241.7 759.0M1218.0 752.7L1217.9 769.2M1241.7 759.0L1217.9 769.2M1217.9 769.2L1234.4 774.5M1217.9 769.2L1222.9 792.1M1217.9 769.2L1244.0 784.2M1222.9 792.1L1244.0 784.2M1222.9 792.1L1226.8 806.7M1244.0 784.2L1226.8 806.7M1226.8 806.7L1240.2 812.6M1235.3 372.9L1254.4 379.5M1235.3 372.9L1233.4 389.7M1254.4 379.5L1233.4 389.7M1233.4 389.7L1262.1 392.2M1233.4 389.7L1240.1 412.4M1262.1 392.2L1240.1 412.4M1240.1 412.4L1252.5 407.4M1240.1 412.4L1235.7 425.0M1240.1 412.4L1261.2 428.0M1235.7 425.0L1261.2 428.0M1235.7 425.0L1233.9 443.0M1235.7 425.0L1254.7 446.3M1233.9 443.0L1254.7 446.3M1233.9 443.0L1239.0 461.9M1233.9 443.0L1262.4 461.9M1239.0 461.9L1262.4 461.9M1239.0 461.9L1243.8 483.8M1239.0 461.9L1250.9 488.7M1243.8 483.8L1250.9 488.7M1243.8 483.8L1237.0 500.1M1243.8 483.8L1254.7 499.6M1237.0 500.1L1254.7 499.6M1237.0 500.1L1233.2 521.9M1254.7 499.6L1233.2 521.9M1233.2 521.9L1263.0 516.3M1233.2 521.9L1242.2 535.3M1263.0 516.3L1242.2 535.3M1242.2 535.3L1251.8 541.9M1242.2 535.3L1241.8 552.1M1242.2 535.3L1253.8 551.5M1241.8 552.1L1253.8 551.5M1241.8 552.1L1235.5 569.6M1241.8 552.1L1262.5 569.6M1235.5 569.6L1262.5 569.6M1235.5 569.6L1235.2 592.3M1235.5 569.6L1262.1 588.9M1235.2 592.3L1262.1 588.9M1235.2 592.3L1240.8 611.9M1262.1 588.9L1240.8 611.9M1240.8 611.9L1254.5 605.4M1240.8 611.9L1234.0 630.4M1254.5 605.4L1234.0 630.4M1234.0 630.4L1257.5 627.8M1234.0 630.4L1238.7 643.5M1257.5 627.8L1238.7 643.5M1238.7 643.5L1255.7 645.1M1238.7 643.5L1239.0 662.2M1255.7 645.1L1239.0 662.2M1239.0 662.2L1254.5 667.3M1239.0 662.2L1235.2 679.7M1254.5 667.3L1235.2 679.7M1235.2 679.7L1262.5 684.2M1235.2 679.7L1240.8 701.7M1235.2 679.7L1261.0 693.6M1240.8 701.7L1261.0 693.6M1240.8 701.7L1244.2 713.1M1261.0 693.6L1244.2 713.1M1244.2 713.1L1253.9 713.3M1244.2 713.1L1243.9 738.8M1253.9 713.3L1243.9 738.8M1243.9 738.8L1252.7 740.9M1243.9 738.8L1241.7 759.0M1243.9 738.8L1262.1 758.2M1241.7 759.0L1262.1 758.2M1241.7 759.0L1234.4 774.5M1241.7 759.0L1257.7 766.2M1234.4 774.5L1257.7 766.2M1234.4 774.5L1244.0 784.2M1234.4 774.5L1256.1 783.4M1244.0 784.2L1256.1 783.4M1244.0 784.2L1240.2 812.6M1256.1 783.4L1240.2 812.6M1240.2 812.6L1262.1 804.0M1254.4 379.5L1272.3 380.6M1254.4 379.5L1262.1 392.2M1272.3 380.6L1262.1 392.2M1262.1 392.2L1271.2 398.3M1262.1 392.2L1252.5 407.4M1262.1 392.2L1272.6 413.1M1252.5 407.4L1272.6 413.1M1252.5 407.4L1261.2 428.0M1272.6 413.1L1261.2 428.0M1261.2 428.0L1270.0 434.0M1261.2 428.0L1254.7 446.3M1261.2 428.0L1273.7 445.0M1254.7 446.3L1273.7 445.0M1254.7 446.3L1262.4 461.9M1273.7 445.0L1262.4 461.9M1262.4 461.9L1276.9 466.2M1262.4 461.9L1250.9 488.7M1262.4 461.9L1271.9 478.3M1250.9 488.7L1271.9 478.3M1250.9 488.7L1254.7 499.6M1271.9 478.3L1254.7 499.6M1254.7 499.6L1276.0 495.0M1254.7 499.6L1263.0 516.3M1276.0 495.0L1263.0 516.3M1263.0 516.3L1279.7 517.0M1263.0 516.3L1251.8 541.9M1263.0 516.3L1270.8 534.8M1251.8 541.9L1270.8 534.8M1251.8 541.9L1253.8 551.5M1270.8 534.8L1253.8 551.5M1253.8 551.5L1270.1 552.7M1253.8 551.5L1262.5 569.6M1253.8 551.5L1275.5 571.8M1262.5 569.6L1275.5 571.8M1262.5 569.6L1262.1 588.9M1275.5 571.8L1262.1 588.9M1262.1 588.9L1272.9 588.4M1262.1 588.9L1254.5 605.4M1272.9 588.4L1254.5 605.4M1254.5 605.4L1274.8 612.5M1254.5 605.4L1257.5 627.8M1254.5 605.4L1274.2 630.4M1257.5 627.8L1274.2 630.4M1257.5 627.8L1255.7 645.1M1257.5 627.8L1274.8 640.2M1255.7 645.1L1274.8 640.2M1255.7 645.1L1254.5 667.3M1255.7 645.1L1270.8 667.4M1254.5 667.3L1270.8 667.4M1254.5 667.3L1262.5 684.2M1270.8 667.4L1262.5 684.2M1262.5 684.2L1274.7 679.5M1262.5 684.2L1261.0 693.6M1274.7 679.5L1261.0 693.6M1261.0 693.6L1275.2 703.4M1261.0 693.6L1253.9 713.3M1275.2 703.4L1253.9 713.3M1253.9 713.3L1273.4 715.3M1253.9 713.3L1252.7 740.9M1273.4 715.3L1252.7 740.9M1252.7 740.9L1273.3 728.8M1252.7 740.9L1262.1 758.2M1252.7 740.9L1275.6 752.7M1262.1 758.2L1275.6 752.7M1262.1 758.2L1257.7 766.2M1275.6 752.7L1257.7 766.2M1257.7 766.2L1274.9 770.4M1257.7 766.2L1256.1 783.4M1257.7 766.2L1274.7 791.7M1256.1 783.4L1274.7 791.7M1256.1 783.4L1262.1 804.0M1256.1 783.4L1271.0 813.1M1262.1 804.0L1271.0 813.1M1272.3 380.6L1288.1 379.6M1272.3 380.6L1271.2 398.3M1272.3 380.6L1288.9 396.7M1271.2 398.3L1288.9 396.7M1271.2 398.3L1272.6 413.1M1288.9 396.7L1272.6 413.1M1272.6 413.1L1290.0 405.7M1272.6 413.1L1270.0 434.0M1272.6 413.1L1293.5 433.3M1270.0 434.0L1293.5 433.3M1270.0 434.0L1273.7 445.0M1293.5 433.3L1273.7 445.0M1273.7 445.0L1297.4 451.7M1273.7 445.0L1276.9 466.2M1297.4 451.7L1276.9 466.2M1276.9 466.2L1299.0 459.4M1276.9 466.2L1271.9 478.3M1299.0 459.4L1271.9 478.3M1271.9 478.3L1291.5 478.0M1271.9 478.3L1276.0 495.0M1271.9 478.3L1296.2 500.4M1276.0 495.0L1296.2 500.4M1276.0 495.0L1279.7 517.0M1276.0 495.0L1296.1 522.7M1279.7 517.0L1296.1 522.7M1279.7 517.0L1270.8 534.8M1296.1 522.7L1270.8 534.8M1270.8 534.8L1299.3 539.2M1270.8 534.8L1270.1 552.7M1270.8 534.8L1297.7 555.6M1270.1 552.7L1297.7 555.6M1270.1 552.7L1275.5 571.8M1297.7 555.6L1275.5 571.8M1275.5 571.8L1287.7 577.9M1275.5 571.8L1272.9 588.4M1275.5 571.8L1287.8 585.8M1272.9 588.4L1287.8 585.8M1272.9 588.4L1274.8 612.5M1272.9 588.4L1297.2 606.2M1274.8 612.5L1297.2 606.2M1274.8 612.5L1274.2 630.4M1274.8 612.5L1295.0 621.1M1274.2 630.4L1295.0 621.1M1274.2 630.4L1274.8 640.2M1274.2 630.4L1289.4 647.7M1274.8 640.2L1289.4 647.7M1274.8 640.2L1270.8 667.4M1289.4 647.7L1270.8 667.4M1270.8 667.4L1287.2 663.1M1270.8 667.4L1274.7 679.5M1287.2 663.1L1274.7 679.5M1274.7 679.5L1298.5 677.4M1274.7 679.5L1275.2 703.4M1298.5 677.4L1275.2 703.4M1275.2 703.4L1295.6 702.1M1275.2 703.4L1273.4 715.3M1295.6 702.1L1273.4 715.3M1273.4 715.3L1294.5 720.4M1273.4 715.3L1273.3 728.8M1294.5 720.4L1273.3 728.8M1273.3 728.8L1295.5 728.9M1273.3 728.8L1275.6 752.7M1273.3 728.8L1289.1 753.5M1275.6 752.7L1289.1 753.5M1275.6 752.7L1274.9 770.4M1275.6 752.7L1298.9 767.4M1274.9 770.4L1298.9 767.4M1274.9 770.4L1274.7 791.7M1298.9 767.4L1274.7 791.7M1274.7 791.7L1294.1 784.3M1274.7 791.7L1271.0 813.1M1274.7 791.7L1297.4 806.3M1271.0 813.1L1297.4 806.3M1288.1 379.6L1311.3 377.1M1288.1 379.6L1288.9 396.7M1311.3 377.1L1288.9 396.7M1288.9 396.7L1306.4 395.9M1288.9 396.7L1290.0 405.7M1288.9 396.7L1314.8 415.5M1290.0 405.7L1314.8 415.5M1290.0 405.7L1293.5 433.3M1290.0 405.7L1308.2 425.7M1293.5 433.3L1308.2 425.7M1293.5 433.3L1297.4 451.7M1308.2 425.7L1297.4 451.7M1297.4 451.7L1306.8 452.0M1297.4 451.7L1299.0 459.4M1297.4 451.7L1310.2 463.6M1299.0 459.4L1310.2 463.6M1299.0 459.4L1291.5 478.0M1299.0 459.4L1311.3 485.5M1291.5 478.0L1311.3 485.5M1291.5 478.0L1296.2 500.4M1311.3 485.5L1296.2 500.4M1296.2 500.4L1308.7 498.9M1296.2 500.4L1296.1 522.7M1296.2 500.4L1314.4 522.5M1296.1 522.7L1314.4 522.5M1296.1 522.7L1299.3 539.2M1314.4 522.5L1299.3 539.2M1299.3 539.2L1308.4 531.6M1299.3 539.2L1297.7 555.6M1308.4 531.6L1297.7 555.6M1297.7 555.6L1316.4 557.9M1297.7 555.6L1287.7 577.9M1316.4 557.9L1287.7 577.9M1287.7 577.9L1312.2 571.8M1287.7 577.9L1287.8 585.8M1312.2 571.8L1287.8 585.8M1287.8 585.8L1316.8 590.1M1287.8 585.8L1297.2 606.2M1287.8 585.8L1307.4 604.0M1297.2 606.2L1307.4 604.0M1297.2 606.2L1295.0 621.1M1297.2 606.2L1309.1 628.3M1295.0 621.1L1309.1 628.3M1295.0 621.1L1289.4 647.7M1295.0 621.1L1309.3 650.6M1289.4 647.7L1309.3 650.6M1289.4 647.7L1287.2 663.1M1309.3 650.6L1287.2 663.1M1287.2 663.1L1312.9 662.5M1287.2 663.1L1298.5 677.4M1287.2 663.1L1313.0 682.3M1298.5 677.4L1313.0 682.3M1298.5 677.4L1295.6 702.1M1298.5 677.4L1312.5 698.9M1295.6 702.1L1312.5 698.9M1295.6 702.1L1294.5 720.4M1312.5 698.9L1294.5 720.4M1294.5 720.4L1311.3 716.9M1294.5 720.4L1295.5 728.9M1311.3 716.9L1295.5 728.9M1295.5 728.9L1315.2 731.1M1295.5 728.9L1289.1 753.5M1315.2 731.1L1289.1 753.5M1289.1 753.5L1314.6 750.5M1289.1 753.5L1298.9 767.4M1314.6 750.5L1298.9 767.4M1298.9 767.4L1315.4 765.6M1298.9 767.4L1294.1 784.3M1315.4 765.6L1294.1 784.3M1294.1 784.3L1310.8 788.3M1294.1 784.3L1297.4 806.3M1294.1 784.3L1313.7 803.3M1297.4 806.3L1313.7 803.3M1311.3 377.1L1326.0 370.4M1311.3 377.1L1306.4 395.9M1311.3 377.1L1329.8 394.0M1306.4 395.9L1329.8 394.0M1306.4 395.9L1314.8 415.5M1329.8 394.0L1314.8 415.5M1314.8 415.5L1322.7 406.9M1314.8 415.5L1308.2 425.7M1322.7 406.9L1308.2 425.7M1308.2 425.7L1325.2 434.8M1308.2 425.7L1306.8 452.0M1308.2 425.7L1328.4 447.8M1306.8 452.0L1328.4 447.8M1306.8 452.0L1310.2 463.6M1306.8 452.0L1326.3 467.0M1310.2 463.6L1326.3 467.0M1310.2 463.6L1311.3 485.5M1326.3 467.0L1311.3 485.5M1311.3 485.5L1332.9 485.2M1311.3 485.5L1308.7 498.9M1311.3 485.5L1322.7 500.2M1308.7 498.9L1322.7 500.2M1308.7 498.9L1314.4 522.5M1322.7 500.2L1314.4 522.5M1314.4 522.5L1328.9 513.3M1314.4 522.5L1308.4 531.6M1328.9 513.3L1308.4 531.6M1308.4 531.6L1332.7 534.7M1308.4 531.6L1316.4 557.9M1308.4 531.6L1326.4 556.6M1316.4 557.9L1326.4 556.6M1316.4 557.9L1312.2 571.8M1326.4 556.6L1312.2 571.8M1312.2 571.8L1330.1 573.0M1312.2 571.8L1316.8 590.1M1330.1 573.0L1316.8 590.1M1316.8 590.1L1333.5 591.2M1316.8 590.1L1307.4 604.0M1316.8 590.1L1327.0 603.5M1307.4 604.0L1327.0 603.5M1307.4 604.0L1309.1 628.3M1307.4 604.0L1329.7 625.3M1309.1 628.3L1329.7 625.3M1309.1 628.3L1309.3 650.6M1329.7 625.3L1309.3 650.6M1309.3 650.6L1329.5 643.1M1309.3 650.6L1312.9 662.5M1309.3 650.6L1322.8 657.2M1312.9 662.5L1322.8 657.2M1312.9 662.5L1313.0 682.3M1322.8 657.2L1313.0 682.3M1313.0 682.3L1324.7 675.9M1313.0 682.3L1312.5 698.9M1313.0 682.3L1333.4 700.0M1312.5 698.9L1333.4 700.0M1312.5 698.9L1311.3 716.9M1333.4 700.0L1311.3 716.9M1311.3 716.9L1325.7 719.7M1311.3 716.9L1315.2 731.1M1325.7 719.7L1315.2 731.1M1315.2 731.1L1330.7 729.5M1315.2 731.1L1314.6 750.5M1330.7 729.5L1314.6 750.5M1314.6 750.5L1332.2 749.6M1314.6 750.5L1315.4 765.6M1314.6 750.5L1335.3 766.5M1315.4 765.6L1335.3 766.5M1315.4 765.6L1310.8 788.3M1315.4 765.6L1326.3 785.8M1310.8 788.3L1326.3 785.8M1310.8 788.3L1313.7 803.3M1310.8 788.3L1333.6 811.0M1313.7 803.3L1333.6 811.0M1326.0 370.4L1348.0 370.6M1326.0 370.4L1329.8 394.0M1326.0 370.4L1346.1 395.5M1329.8 394.0L1346.1 395.5M1329.8 394.0L1322.7 406.9M1329.8 394.0L1341.4 416.3M1322.7 406.9L1341.4 416.3M1322.7 406.9L1325.2 434.8M1322.7 406.9L1351.3 434.4M1325.2 434.8L1351.3 434.4M1325.2 434.8L1328.4 447.8M1325.2 434.8L1349.5 448.5M1328.4 447.8L1349.5 448.5M1328.4 447.8L1326.3 467.0M1328.4 447.8L1353.0 462.1M1326.3 467.0L1353.0 462.1M1326.3 467.0L1332.9 485.2M1326.3 467.0L1344.5 478.3M1332.9 485.2L1344.5 478.3M1332.9 485.2L1322.7 500.2M1344.5 478.3L1322.7 500.2M1322.7 500.2L1343.0 504.8M1322.7 500.2L1328.9 513.3M1322.7 500.2L1341.9 522.1M1328.9 513.3L1341.9 522.1M1328.9 513.3L1332.7 534.7M1341.9 522.1L1332.7 534.7M1332.7 534.7L1345.7 541.8M1332.7 534.7L1326.4 556.6M1345.7 541.8L1326.4 556.6M1326.4 556.6L1350.3 557.4M1326.4 556.6L1330.1 573.0M1350.3 557.4L1330.1 573.0M1330.1 573.0L1351.3 567.2M1330.1 573.0L1333.5 591.2M1351.3 567.2L1333.5 591.2M1333.5 591.2L1344.0 589.3M1333.5 591.2L1327.0 603.5M1333.5 591.2L1346.1 611.1M1327.0 603.5L1346.1 611.1M1327.0 603.5L1329.7 625.3M1346.1 611.1L1329.7 625.3M1329.7 625.3L1351.8 630.0M1329.7 625.3L1329.5 643.1M1329.7 625.3L1352.4 647.5M1329.5 643.1L1352.4 647.5M1329.5 643.1L1322.8 657.2M1352.4 647.5L1322.8 657.2M1322.8 657.2L1345.2 663.1M1322.8 657.2L1324.7 675.9M1322.8 657.2L1350.1 685.0M1324.7 675.9L1350.1 685.0M1324.7 675.9L1333.4 700.0M1350.1 685.0L1333.4 700.0M1333.4 700.0L1345.4 697.2M1333.4 700.0L1325.7 719.7M1345.4 697.2L1325.7 719.7M1325.7 719.7L1348.4 713.6M1325.7 719.7L1330.7 729.5M1325.7 719.7L1351.8 728.7M1330.7 729.5L1351.8 728.7M1330.7 729.5L1332.2 749.6M1330.7 729.5L1348.9 752.8M1332.2 749.6L1348.9 752.8M1332.2 749.6L1335.3 766.5M1348.9 752.8L1335.3 766.5M1335.3 766.5L1343.2 771.9M1335.3 766.5L1326.3 785.8M1343.2 771.9L1326.3 785.8M1326.3 785.8L1346.7 794.8M1326.3 785.8L1333.6 811.0M1326.3 785.8L1351.8 808.1M1333.6 811.0L1351.8 808.1M1348.0 370.6L1369.7 379.8M1348.0 370.6L1346.1 395.5M1348.0 370.6L1360.8 397.1M1346.1 395.5L1360.8 397.1M1346.1 395.5L1341.4 416.3M1346.1 395.5L1369.2 417.2M1341.4 416.3L1369.2 417.2M1341.4 416.3L1351.3 434.4M1369.2 417.2L1351.3 434.4M1351.3 434.4L1368.3 427.6M1351.3 434.4L1349.5 448.5M1368.3 427.6L1349.5 448.5M1349.5 448.5L1361.3 448.9M1349.5 448.5L1353.0 462.1M1349.5 448.5L1361.4 468.2M1353.0 462.1L1361.4 468.2M1353.0 462.1L1344.5 478.3M1361.4 468.2L1344.5 478.3M1344.5 478.3L1365.9 487.1M1344.5 478.3L1343.0 504.8M1365.9 487.1L1343.0 504.8M1343.0 504.8L1363.2 498.5M1343.0 504.8L1341.9 522.1M1343.0 504.8L1370.1 521.0M1341.9 522.1L1370.1 521.0M1341.9 522.1L1345.7 541.8M1370.1 521.0L1345.7 541.8M1345.7 541.8L1363.5 537.8M1345.7 541.8L1350.3 557.4M1363.5 537.8L1350.3 557.4M1350.3 557.4L1364.2 556.8M1350.3 557.4L1351.3 567.2M1364.2 556.8L1351.3 567.2M1351.3 567.2L1365.2 570.3M1351.3 567.2L1344.0 589.3M1365.2 570.3L1344.0 589.3M1344.0 589.3L1371.0 595.9M1344.0 589.3L1346.1 611.1M1344.0 589.3L1368.3 606.2M1346.1 611.1L1368.3 606.2M1346.1 611.1L1351.8 630.0M1368.3 606.2L1351.8 630.0M1351.8 630.0L1361.1 629.9M1351.8 630.0L1352.4 647.5M1351.8 630.0L1369.1 646.9M1352.4 647.5L1369.1 646.9M1352.4 647.5L1345.2 663.1M1369.1 646.9L1345.2 663.1M1345.2 663.1L1361.4 665.8M1345.2 663.1L1350.1 685.0M1361.4 665.8L1350.1 685.0M1350.1 685.0L1365.3 679.4M1350.1 685.0L1345.4 697.2M1350.1 685.0L1366.1 698.4M1345.4 697.2L1366.1 698.4M1345.4 697.2L1348.4 713.6M1345.4 697.2L1366.9 720.2M1348.4 713.6L1366.9 720.2M1348.4 713.6L1351.8 728.7M1348.4 713.6L1371.1 730.1M1351.8 728.7L1371.1 730.1M1351.8 728.7L1348.9 752.8M1351.8 728.7L1365.9 758.6M1348.9 752.8L1365.9 758.6M1348.9 752.8L1343.2 771.9M1365.9 758.6L1343.2 771.9M1343.2 771.9L1367.0 772.0M1343.2 771.9L1346.7 794.8M1343.2 771.9L1369.4 783.1M1346.7 794.8L1369.4 783.1M1346.7 794.8L1351.8 808.1M1369.4 783.1L1351.8 808.1M1351.8 808.1L1368.7 808.6M1369.7 379.8L1384.1 372.6M1369.7 379.8L1360.8 397.1M1369.7 379.8L1384.5 388.3M1360.8 397.1L1384.5 388.3M1360.8 397.1L1369.2 417.2M1360.8 397.1L1383.3 407.9M1369.2 417.2L1383.3 407.9M1369.2 417.2L1368.3 427.6M1369.2 417.2L1388.4 432.8M1368.3 427.6L1388.4 432.8M1368.3 427.6L1361.3 448.9M1368.3 427.6L1382.7 450.2M1361.3 448.9L1382.7 450.2M1361.3 448.9L1361.4 468.2M1382.7 450.2L1361.4 468.2M1361.4 468.2L1381.5 465.3M1361.4 468.2L1365.9 487.1M1361.4 468.2L1378.7 487.5M1365.9 487.1L1378.7 487.5M1365.9 487.1L1363.2 498.5M1365.9 487.1L1386.3 504.3M1363.2 498.5L1386.3 504.3M1363.2 498.5L1370.1 521.0M1386.3 504.3L1370.1 521.0M1370.1 521.0L1377.7 523.0M1370.1 521.0L1363.5 537.8M1370.1 521.0L1376.9 537.8M1363.5 537.8L1376.9 537.8M1363.5 537.8L1364.2 556.8M1376.9 537.8L1364.2 556.8M1364.2 556.8L1382.8 549.4M1364.2 556.8L1365.2 570.3M1382.8 549.4L1365.2 570.3M1365.2 570.3L1382.0 577.9M1365.2 570.3L1371.0 595.9M1382.0 577.9L1371.0 595.9M1371.0 595.9L1384.6 588.7M1371.0 595.9L1368.3 606.2M1371.0 595.9L1387.0 607.2M1368.3 606.2L1387.0 607.2M1368.3 606.2L1361.1 629.9M1368.3 606.2L1388.0 625.8M1361.1 629.9L1388.0 625.8M1361.1 629.9L1369.1 646.9M1361.1 629.9L1377.7 650.9M1369.1 646.9L1377.7 650.9M1369.1 646.9L1361.4 665.8M1377.7 650.9L1361.4 665.8M1361.4 665.8L1377.6 659.9M1361.4 665.8L1365.3 679.4M1377.6 659.9L1365.3 679.4M1365.3 679.4L1386.4 676.2M1365.3 679.4L1366.1 698.4M1386.4 676.2L1366.1 698.4M1366.1 698.4L1383.6 703.5M1366.1 698.4L1366.9 720.2M1366.1 698.4L1384.1 715.1M1366.9 720.2L1384.1 715.1M1366.9 720.2L1371.1 730.1M1366.9 720.2L1386.3 739.1M1371.1 730.1L1386.3 739.1M1371.1 730.1L1365.9 758.6M1386.3 739.1L1365.9 758.6M1365.9 758.6L1384.0 754.6M1365.9 758.6L1367.0 772.0M1384.0 754.6L1367.0 772.0M1367.0 772.0L1380.8 769.8M1367.0 772.0L1369.4 783.1M1367.0 772.0L1389.2 794.9M1369.4 783.1L1389.2 794.9M1369.4 783.1L1368.7 808.6M1369.4 783.1L1376.7 803.2M1368.7 808.6L1376.7 803.2M1384.1 372.6L1397.5 378.7M1384.1 372.6L1384.5 388.3M1384.1 372.6L1397.2 388.8M1384.5 388.3L1397.2 388.8M1384.5 388.3L1383.3 407.9M1397.2 388.8L1383.3 407.9M1383.3 407.9L1404.4 406.8M1383.3 407.9L1388.4 432.8M1383.3 407.9L1407.0 428.4M1388.4 432.8L1407.0 428.4M1388.4 432.8L1382.7 450.2M1388.4 432.8L1406.0 451.0M1382.7 450.2L1406.0 451.0M1382.7 450.2L1381.5 465.3M1406.0 451.0L1381.5 465.3M1381.5 465.3L1397.3 468.6M1381.5 465.3L1378.7 487.5M1381.5 465.3L1399.9 479.5M1378.7 487.5L1399.9 479.5M1378.7 487.5L1386.3 504.3M1378.7 487.5L1395.3 503.6M1386.3 504.3L1395.3 503.6M1386.3 504.3L1377.7 523.0M1386.3 504.3L1401.8 516.5M1377.7 523.0L1401.8 516.5M1377.7 523.0L1376.9 537.8M1377.7 523.0L1405.2 533.2M1376.9 537.8L1405.2 533.2M1376.9 537.8L1382.8 549.4M1405.2 533.2L1382.8 549.4M1382.8 549.4L1400.3 549.8M1382.8 549.4L1382.0 577.9M1382.8 549.4L1399.1 577.8M1382.0 577.9L1399.1 577.8M1382.0 577.9L1384.6 588.7M1382.0 577.9L1401.0 586.6M1384.6 588.7L1401.0 586.6M1384.6 588.7L1387.0 607.2M1384.6 588.7L1397.7 610.8M1387.0 607.2L1397.7 610.8M1387.0 607.2L1388.0 625.8M1387.0 607.2L1398.2 631.9M1388.0 625.8L1398.2 631.9M1388.0 625.8L1377.7 650.9M1398.2 631.9L1377.7 650.9M1377.7 650.9L1395.5 649.6M1377.7 650.9L1377.6 659.9M1377.7 650.9L1402.5 667.1M1377.6 659.9L1402.5 667.1M1377.6 659.9L1386.4 676.2M1402.5 667.1L1386.4 676.2M1386.4 676.2L1399.2 675.6M1386.4 676.2L1383.6 703.5M1386.4 676.2L1396.9 700.6M1383.6 703.5L1396.9 700.6M1383.6 703.5L1384.1 715.1M1383.6 703.5L1395.0 712.1M1384.1 715.1L1395.0 712.1M1384.1 715.1L1386.3 739.1M1384.1 715.1L1404.6 739.8M1386.3 739.1L1404.6 739.8M1386.3 739.1L1384.0 754.6M1386.3 739.1L1405.5 757.3M1384.0 754.6L1405.5 757.3M1384.0 754.6L1380.8 769.8M1405.5 757.3L1380.8 769.8M1380.8 769.8L1401.7 775.7M1380.8 769.8L1389.2 794.9M1401.7 775.7L1389.2 794.9M1389.2 794.9L1403.5 789.7M1389.2 794.9L1376.7 803.2M1403.5 789.7L1376.7 803.2M1376.7 803.2L1400.1 801.0M1397.5 378.7L1413.8 371.8M1397.5 378.7L1397.2 388.8M1413.8 371.8L1397.2 388.8M1397.2 388.8L1418.5 388.2M1397.2 388.8L1404.4 406.8M1397.2 388.8L1424.9 412.0M1404.4 406.8L1424.9 412.0M1404.4 406.8L1407.0 428.4M1424.9 412.0L1407.0 428.4M1407.0 428.4L1422.0 433.9M1407.0 428.4L1406.0 451.0M1407.0 428.4L1415.6 451.9M1406.0 451.0L1415.6 451.9M1406.0 451.0L1397.3 468.6M1406.0 451.0L1424.8 462.1M1397.3 468.6L1424.8 462.1M1397.3 468.6L1399.9 479.5M1397.3 468.6L1414.3 486.8M1399.9 479.5L1414.3 486.8M1399.9 479.5L1395.3 503.6M1414.3 486.8L1395.3 503.6M1395.3 503.6L1423.9 504.8M1395.3 503.6L1401.8 516.5M1423.9 504.8L1401.8 516.5M1401.8 516.5L1417.8 520.3M1401.8 516.5L1405.2 533.2M1401.8 516.5L1414.1 533.7M1405.2 533.2L1414.1 533.7M1405.2 533.2L1400.3 549.8M1405.2 533.2L1418.0 558.1M1400.3 549.8L1418.0 558.1M1400.3 549.8L1399.1 577.8M1400.3 549.8L1413.8 578.4M1399.1 577.8L1413.8 578.4M1399.1 577.8L1401.0 586.6M1413.8 578.4L1401.0 586.6M1401.0 586.6L1413.1 596.9M1401.0 586.6L1397.7 610.8M1413.1 596.9L1397.7 610.8M1397.7 610.8L1415.7 613.0M1397.7 610.8L1398.2 631.9M1397.7 610.8L1423.0 632.7M1398.2 631.9L1423.0 632.7M1398.2 631.9L1395.5 649.6M1398.2 631.9L1418.6 647.5M1395.5 649.6L1418.6 647.5M1395.5 649.6L1402.5 667.1M1418.6 647.5L1402.5 667.1M1402.5 667.1L1416.4 667.2M1402.5 667.1L1399.2 675.6M1416.4 667.2L1399.2 675.6M1399.2 675.6L1414.1 685.8M1399.2 675.6L1396.9 700.6M1399.2 675.6L1420.2 693.5M1396.9 700.6L1420.2 693.5M1396.9 700.6L1395.0 712.1M1420.2 693.5L1395.0 712.1M1395.0 712.1L1424.6 714.7M1395.0 712.1L1404.6 739.8M1424.6 714.7L1404.6 739.8M1404.6 739.8L1413.6 732.0M1404.6 739.8L1405.5 757.3M1413.6 732.0L1405.5 757.3M1405.5 757.3L1413.0 750.2M1405.5 757.3L1401.7 775.7M1405.5 757.3L1421.6 777.2M1401.7 775.7L1421.6 777.2M1401.7 775.7L1403.5 789.7M1421.6 777.2L1403.5 789.7M1403.5 789.7L1420.7 793.5M1403.5 789.7L1400.1 801.0M1403.5 789.7L1423.1 809.7M1400.1 801.0L1423.1 809.7M1413.8 371.8L1435.5 371.9M1413.8 371.8L1418.5 388.2M1435.5 371.9L1418.5 388.2M1418.5 388.2L1432.7 393.6M1418.5 388.2L1424.9 412.0M1432.7 393.6L1424.9 412.0M1424.9 412.0L1433.3 414.0M1424.9 412.0L1422.0 433.9M1433.3 414.0L1422.0 433.9M1422.0 433.9L1434.7 430.0M1422.0 433.9L1415.6 451.9M1422.0 433.9L1437.6 448.6M1415.6 451.9L1437.6 448.6M1415.6 451.9L1424.8 462.1M1415.6 451.9L1432.7 461.9M1424.8 462.1L1432.7 461.9M1424.8 462.1L1414.3 486.8M1424.8 462.1L1439.4 479.4M1414.3 486.8L1439.4 479.4M1414.3 486.8L1423.9 504.8M1414.3 486.8L1439.2 506.9M1423.9 504.8L1439.2 506.9M1423.9 504.8L1417.8 520.3M1439.2 506.9L1417.8 520.3M1417.8 520.3L1435.6 524.8M1417.8 520.3L1414.1 533.7M1435.6 524.8L1414.1 533.7M1414.1 533.7L1438.4 542.6M1414.1 533.7L1418.0 558.1M1414.1 533.7L1437.3 558.2M1418.0 558.1L1437.3 558.2M1418.0 558.1L1413.8 578.4M1418.0 558.1L1439.3 569.2M1413.8 578.4L1439.3 569.2M1413.8 578.4L1413.1 596.9M1413.8 578.4L1437.2 592.0M1413.1 596.9L1437.2 592.0M1413.1 596.9L1415.7 613.0M1413.1 596.9L1436.5 611.0M1415.7 613.0L1436.5 611.0M1415.7 613.0L1423.0 632.7M1436.5 611.0L1423.0 632.7M1423.0 632.7L1442.2 630.7M1423.0 632.7L1418.6 647.5M1423.0 632.7L1440.9 640.5M1418.6 647.5L1440.9 640.5M1418.6 647.5L1416.4 667.2M1440.9 640.5L1416.4 667.2M1416.4 667.2L1439.6 664.6M1416.4 667.2L1414.1 685.8M1439.6 664.6L1414.1 685.8M1414.1 685.8L1442.5 674.7M1414.1 685.8L1420.2 693.5M1442.5 674.7L1420.2 693.5M1420.2 693.5L1432.9 705.0M1420.2 693.5L1424.6 714.7M1432.9 705.0L1424.6 714.7M1424.6 714.7L1435.4 719.6M1424.6 714.7L1413.6 732.0M1424.6 714.7L1438.2 733.7M1413.6 732.0L1438.2 733.7M1413.6 732.0L1413.0 750.2M1413.6 732.0L1436.2 753.8M1413.0 750.2L1436.2 753.8M1413.0 750.2L1421.6 777.2M1436.2 753.8L1421.6 777.2M1421.6 777.2L1443.1 771.4M1421.6 777.2L1420.7 793.5M1421.6 777.2L1440.7 786.5M1420.7 793.5L1440.7 786.5M1420.7 793.5L1423.1 809.7M1440.7 786.5L1423.1 809.7M1423.1 809.7L1439.7 808.3M1435.5 371.9L1458.1 379.8M1435.5 371.9L1432.7 393.6M1435.5 371.9L1449.7 398.9M1432.7 393.6L1449.7 398.9M1432.7 393.6L1433.3 414.0M1449.7 398.9L1433.3 414.0M1433.3 414.0L1456.4 408.0M1433.3 414.0L1434.7 430.0M1433.3 414.0L1454.6 423.9M1434.7 430.0L1454.6 423.9M1434.7 430.0L1437.6 448.6M1434.7 430.0L1451.6 451.3M1437.6 448.6L1451.6 451.3M1437.6 448.6L1432.7 461.9M1451.6 451.3L1432.7 461.9M1432.7 461.9L1457.7 469.6M1432.7 461.9L1439.4 479.4M1432.7 461.9L1450.7 478.1M1439.4 479.4L1450.7 478.1M1439.4 479.4L1439.2 506.9M1439.4 479.4L1453.5 500.9M1439.2 506.9L1453.5 500.9M1439.2 506.9L1435.6 524.8M1439.2 506.9L1457.7 516.5M1435.6 524.8L1457.7 516.5M1435.6 524.8L1438.4 542.6M1435.6 524.8L1458.0 538.1M1438.4 542.6L1458.0 538.1M1438.4 542.6L1437.3 558.2M1438.4 542.6L1452.3 558.6M1437.3 558.2L1452.3 558.6M1437.3 558.2L1439.3 569.2M1437.3 558.2L1449.6 574.2M1439.3 569.2L1449.6 574.2M1439.3 569.2L1437.2 592.0M1449.6 574.2L1437.2 592.0M1437.2 592.0L1451.1 585.2M1437.2 592.0L1436.5 611.0M1451.1 585.2L1436.5 611.0M1436.5 611.0L1454.7 609.2M1436.5 611.0L1442.2 630.7M1454.7 609.2L1442.2 630.7M1442.2 630.7L1456.4 625.4M1442.2 630.7L1440.9 640.5M1456.4 625.4L1440.9 640.5M1440.9 640.5L1460.4 648.6M1440.9 640.5L1439.6 664.6M1440.9 640.5L1450.6 656.8M1439.6 664.6L1450.6 656.8M1439.6 664.6L1442.5 674.7M1439.6 664.6L1460.8 679.9M1442.5 674.7L1460.8 679.9M1442.5 674.7L1432.9 705.0M1442.5 674.7L1450.0 694.9M1432.9 705.0L1450.0 694.9M1432.9 705.0L1435.4 719.6M1432.9 705.0L1457.5 712.9M1435.4 719.6L1457.5 712.9M1435.4 719.6L1438.2 733.7M1457.5 712.9L1438.2 733.7M1438.2 733.7L1453.4 737.2M1438.2 733.7L1436.2 753.8M1438.2 733.7L1453.1 754.9M1436.2 753.8L1453.1 754.9M1436.2 753.8L1443.1 771.4M1453.1 754.9L1443.1 771.4M1443.1 771.4L1460.6 774.7M1443.1 771.4L1440.7 786.5M1460.6 774.7L1440.7 786.5M1440.7 786.5L1456.6 790.6M1440.7 786.5L1439.7 808.3M1440.7 786.5L1452.6 808.8M1439.7 808.3L1452.6 808.8M1458.1 379.8L1474.9 376.1M1458.1 379.8L1449.7 398.9M1458.1 379.8L1472.9 396.2M1449.7 398.9L1472.9 396.2M1449.7 398.9L1456.4 408.0M1449.7 398.9L1469.3 413.7M1456.4 408.0L1469.3 413.7M1456.4 408.0L1454.6 423.9M1456.4 408.0L1479.0 423.2M1454.6 423.9L1479.0 423.2M1454.6 423.9L1451.6 451.3M1454.6 423.9L1469.9 453.1M1451.6 451.3L1469.9 453.1M1451.6 451.3L1457.7 469.6M1451.6 451.3L1467.7 469.0M1457.7 469.6L1467.7 469.0M1457.7 469.6L1450.7 478.1M1457.7 469.6L1474.0 477.6M1450.7 478.1L1474.0 477.6M1450.7 478.1L1453.5 500.9M1450.7 478.1L1474.6 494.8M1453.5 500.9L1474.6 494.8M1453.5 500.9L1457.7 516.5M1474.6 494.8L1457.7 516.5M1457.7 516.5L1477.4 516.5M1457.7 516.5L1458.0 538.1M1477.4 516.5L1458.0 538.1M1458.0 538.1L1478.3 542.0M1458.0 538.1L1452.3 558.6M1458.0 538.1L1468.4 553.8M1452.3 558.6L1468.4 553.8M1452.3 558.6L1449.6 574.2M1452.3 558.6L1468.6 576.2M1449.6 574.2L1468.6 576.2M1449.6 574.2L1451.1 585.2M1468.6 576.2L1451.1 585.2M1451.1 585.2L1467.9 585.6M1451.1 585.2L1454.7 609.2M1451.1 585.2L1468.2 613.5M1454.7 609.2L1468.2 613.5M1454.7 609.2L1456.4 625.4M1454.7 609.2L1469.8 624.8M1456.4 625.4L1469.8 624.8M1456.4 625.4L1460.4 648.6M1469.8 624.8L1460.4 648.6M1460.4 648.6L1472.3 645.7M1460.4 648.6L1450.6 656.8M1472.3 645.7L1450.6 656.8M1450.6 656.8L1471.9 668.6M1450.6 656.8L1460.8 679.9M1450.6 656.8L1471.0 680.7M1460.8 679.9L1471.0 680.7M1460.8 679.9L1450.0 694.9M1471.0 680.7L1450.0 694.9M1450.0 694.9L1477.6 695.8M1450.0 694.9L1457.5 712.9M1477.6 695.8L1457.5 712.9M1457.5 712.9L1468.9 721.2M1457.5 712.9L1453.4 737.2M1468.9 721.2L1453.4 737.2M1453.4 737.2L1470.7 739.9M1453.4 737.2L1453.1 754.9M1453.4 737.2L1477.1 751.4M1453.1 754.9L1477.1 751.4M1453.1 754.9L1460.6 774.7M1453.1 754.9L1470.9 766.0M1460.6 774.7L1470.9 766.0M1460.6 774.7L1456.6 790.6M1460.6 774.7L1477.7 788.3M1456.6 790.6L1477.7 788.3M1456.6 790.6L1452.6 808.8M1477.7 788.3L1452.6 808.8M1452.6 808.8L1471.0 802.9M1474.9 376.1L1487.5 379.7M1474.9 376.1L1472.9 396.2M1487.5 379.7L1472.9 396.2M1472.9 396.2L1486.3 393.7M1472.9 396.2L1469.3 413.7M1472.9 396.2L1492.6 411.3M1469.3 413.7L1492.6 411.3M1469.3 413.7L1479.0 423.2M1492.6 411.3L1479.0 423.2M1479.0 423.2L1491.0 427.7M1479.0 423.2L1469.9 453.1M1479.0 423.2L1487.1 451.0M1469.9 453.1L1487.1 451.0M1469.9 453.1L1467.7 469.0M1487.1 451.0L1467.7 469.0M1467.7 469.0L1496.0 465.8M1467.7 469.0L1474.0 477.6M1467.7 469.0L1487.9 488.2M1474.0 477.6L1487.9 488.2M1474.0 477.6L1474.6 494.8M1487.9 488.2L1474.6 494.8M1474.6 494.8L1487.2 496.9M1474.6 494.8L1477.4 516.5M1487.2 496.9L1477.4 516.5M1477.4 516.5L1492.6 523.2M1477.4 516.5L1478.3 542.0M1477.4 516.5L1491.9 532.1M1478.3 542.0L1491.9 532.1M1478.3 542.0L1468.4 553.8M1491.9 532.1L1468.4 553.8M1468.4 553.8L1497.0 550.7M1468.4 553.8L1468.6 576.2M1497.0 550.7L1468.6 576.2M1468.6 576.2L1489.0 579.2M1468.6 576.2L1467.9 585.6M1468.6 576.2L1494.7 594.2M1467.9 585.6L1494.7 594.2M1467.9 585.6L1468.2 613.5M1467.9 585.6L1485.7 613.4M1468.2 613.5L1485.7 613.4M1468.2 613.5L1469.8 624.8M1468.2 613.5L1489.7 620.8M1469.8 624.8L1489.7 620.8M1469.8 624.8L1472.3 645.7M1489.7 620.8L1472.3 645.7M1472.3 645.7L1494.6 650.4M1472.3 645.7L1471.9 668.6M1494.6 650.4L1471.9 668.6M1471.9 668.6L1485.3 662.4M1471.9 668.6L1471.0 680.7M1471.9 668.6L1496.1 678.9M1471.0 680.7L1496.1 678.9M1471.0 680.7L1477.6 695.8M1496.1 678.9L1477.6 695.8M1477.6 695.8L1488.5 702.5M1477.6 695.8L1468.9 721.2M1488.5 702.5L1468.9 721.2M1468.9 721.2L1490.3 723.3M1468.9 721.2L1470.7 739.9M1468.9 721.2L1495.5 739.5M1470.7 739.9L1495.5 739.5M1470.7 739.9L1477.1 751.4M1470.7 739.9L1493.6 749.2M1477.1 751.4L1493.6 749.2M1477.1 751.4L1470.9 766.0M1493.6 749.2L1470.9 766.0M1470.9 766.0L1493.4 772.0M1470.9 766.0L1477.7 788.3M1470.9 766.0L1490.8 789.8M1477.7 788.3L1490.8 789.8M1477.7 788.3L1471.0 802.9M1490.8 789.8L1471.0 802.9M1471.0 802.9L1488.5 803.2M1487.5 379.7L1514.2 373.3M1487.5 379.7L1486.3 393.7M1514.2 373.3L1486.3 393.7M1486.3 393.7L1504.0 399.0M1486.3 393.7L1492.6 411.3M1486.3 393.7L1509.1 413.2M1492.6 411.3L1509.1 413.2M1492.6 411.3L1491.0 427.7M1492.6 411.3L1507.0 424.6M1491.0 427.7L1507.0 424.6M1491.0 427.7L1487.1 451.0M1507.0 424.6L1487.1 451.0M1487.1 451.0L1506.9 451.2M1487.1 451.0L1496.0 465.8M1506.9 451.2L1496.0 465.8M1496.0 465.8L1506.2 470.2M1496.0 465.8L1487.9 488.2M1506.2 470.2L1487.9 488.2M1487.9 488.2L1506.5 488.0M1487.9 488.2L1487.2 496.9M1487.9 488.2L1505.0 500.3M1487.2 496.9L1505.0 500.3M1487.2 496.9L1492.6 523.2M1487.2 496.9L1504.3 514.6M1492.6 523.2L1504.3 514.6M1492.6 523.2L1491.9 532.1M1492.6 523.2L1509.3 535.3M1491.9 532.1L1509.3 535.3M1491.9 532.1L1497.0 550.7M1491.9 532.1L1509.5 551.4M1497.0 550.7L1509.5 551.4M1497.0 550.7L1489.0 579.2M1509.5 551.4L1489.0 579.2M1489.0 579.2L1506.6 570.8M1489.0 579.2L1494.7 594.2M1506.6 570.8L1494.7 594.2M1494.7 594.2L1514.0 585.7M1494.7 594.2L1485.7 613.4M1514.0 585.7L1485.7 613.4M1485.7 613.4L1507.9 613.5M1485.7 613.4L1489.7 620.8M1485.7 613.4L1509.9 623.9M1489.7 620.8L1509.9 623.9M1489.7 620.8L1494.6 650.4M1489.7 620.8L1515.3 640.1M1494.6 650.4L1515.3 640.1M1494.6 650.4L1485.3 662.4M1494.6 650.4L1504.4 656.9M1485.3 662.4L1504.4 656.9M1485.3 662.4L1496.1 678.9M1485.3 662.4L1508.2 685.5M1496.1 678.9L1508.2 685.5M1496.1 678.9L1488.5 702.5M1496.1 678.9L1506.3 696.3M1488.5 702.5L1506.3 696.3M1488.5 702.5L1490.3 723.3M1506.3 696.3L1490.3 723.3M1490.3 723.3L1512.8 711.7M1490.3 723.3L1495.5 739.5M1490.3 723.3L1502.9 737.1M1495.5 739.5L1502.9 737.1M1495.5 739.5L1493.6 749.2M1495.5 739.5L1503.8 753.3M1493.6 749.2L1503.8 753.3M1493.6 749.2L1493.4 772.0M1503.8 753.3L1493.4 772.0M1493.4 772.0L1504.5 772.3M1493.4 772.0L1490.8 789.8M1493.4 772.0L1513.4 788.4M1490.8 789.8L1513.4 788.4M1490.8 789.8L1488.5 803.2M1490.8 789.8L1506.1 808.6M1488.5 803.2L1506.1 808.6M1514.2 373.3L1529.5 369.4M1514.2 373.3L1504.0 399.0M1529.5 369.4L1504.0 399.0M1504.0 399.0L1523.7 391.4M1504.0 399.0L1509.1 413.2M1523.7 391.4L1509.1 413.2M1509.1 413.2L1527.1 408.1M1509.1 413.2L1507.0 424.6M1509.1 413.2L1529.0 425.9M1507.0 424.6L1529.0 425.9M1507.0 424.6L1506.9 451.2M1507.0 424.6L1532.1 445.1M1506.9 451.2L1532.1 445.1M1506.9 451.2L1506.2 470.2M1532.1 445.1L1506.2 470.2M1506.2 470.2L1523.5 459.7M1506.2 470.2L1506.5 488.0M1506.2 470.2L1522.3 479.4M1506.5 488.0L1522.3 479.4M1506.5 488.0L1505.0 500.3M1506.5 488.0L1531.8 499.9M1505.0 500.3L1531.8 499.9M1505.0 500.3L1504.3 514.6M1531.8 499.9L1504.3 514.6M1504.3 514.6L1526.3 524.8M1504.3 514.6L1509.3 535.3M1526.3 524.8L1509.3 535.3M1509.3 535.3L1532.9 540.3M1509.3 535.3L1509.5 551.4M1509.3 535.3L1523.7 552.8M1509.5 551.4L1523.7 552.8M1509.5 551.4L1506.6 570.8M1509.5 551.4L1527.1 570.0M1506.6 570.8L1527.1 570.0M1506.6 570.8L1514.0 585.7M1506.6 570.8L1525.1 587.4M1514.0 585.7L1525.1 587.4M1514.0 585.7L1507.9 613.5M1514.0 585.7L1523.7 612.1M1507.9 613.5L1523.7 612.1M1507.9 613.5L1509.9 623.9M1507.9 613.5L1528.3 626.3M1509.9 623.9L1528.3 626.3M1509.9 623.9L1515.3 640.1M1528.3 626.3L1515.3 640.1M1515.3 640.1L1526.6 646.4M1515.3 640.1L1504.4 656.9M1526.6 646.4L1504.4 656.9M1504.4 656.9L1529.3 657.0M1504.4 656.9L1508.2 685.5M1529.3 657.0L1508.2 685.5M1508.2 685.5L1531.3 680.5M1508.2 685.5L1506.3 696.3M1508.2 685.5L1525.0 704.8M1506.3 696.3L1525.0 704.8M1506.3 696.3L1512.8 711.7M1525.0 704.8L1512.8 711.7M1512.8 711.7L1530.2 715.1M1512.8 711.7L1502.9 737.1M1530.2 715.1L1502.9 737.1M1502.9 737.1L1521.0 734.2M1502.9 737.1L1503.8 753.3M1502.9 737.1L1526.2 751.4M1503.8 753.3L1526.2 751.4M1503.8 753.3L1504.5 772.3M1526.2 751.4L1504.5 772.3M1504.5 772.3L1521.9 772.0M1504.5 772.3L1513.4 788.4M1504.5 772.3L1523.9 792.3M1513.4 788.4L1523.9 792.3M1513.4 788.4L1506.1 808.6M1523.9 792.3L1506.1 808.6M1506.1 808.6L1527.4 804.4M1529.5 369.4L1549.1 374.3M1529.5 369.4L1523.7 391.4M1549.1 374.3L1523.7 391.4M1523.7 391.4L1539.8 390.2M1523.7 391.4L1527.1 408.1M1523.7 391.4L1539.4 410.1M1527.1 408.1L1539.4 410.1M1527.1 408.1L1529.0 425.9M1539.4 410.1L1529.0 425.9M1529.0 425.9L1550.2 434.5M1529.0 425.9L1532.1 445.1M1529.0 425.9L1546.9 442.6M1532.1 445.1L1546.9 442.6M1532.1 445.1L1523.5 459.7M1532.1 445.1L1541.7 461.3M1523.5 459.7L1541.7 461.3M1523.5 459.7L1522.3 479.4M1541.7 461.3L1522.3 479.4M1522.3 479.4L1543.4 484.7M1522.3 479.4L1531.8 499.9M1543.4 484.7L1531.8 499.9M1531.8 499.9L1539.0 500.9M1531.8 499.9L1526.3 524.8M1531.8 499.9L1544.1 521.0M1526.3 524.8L1544.1 521.0M1526.3 524.8L1532.9 540.3M1526.3 524.8L1549.1 535.7M1532.9 540.3L1549.1 535.7M1532.9 540.3L1523.7 552.8M1549.1 535.7L1523.7 552.8M1523.7 552.8L1546.3 552.1M1523.7 552.8L1527.1 570.0M1523.7 552.8L1544.4 574.7M1527.1 570.0L1544.4 574.7M1527.1 570.0L1525.1 587.4M1527.1 570.0L1539.4 591.2M1525.1 587.4L1539.4 591.2M1525.1 587.4L1523.7 612.1M1539.4 591.2L1523.7 612.1M1523.7 612.1L1545.0 605.0M1523.7 612.1L1528.3 626.3M1523.7 612.1L1541.8 631.1M1528.3 626.3L1541.8 631.1M1528.3 626.3L1526.6 646.4M1541.8 631.1L1526.6 646.4M1526.6 646.4L1543.1 641.1M1526.6 646.4L1529.3 657.0M1526.6 646.4L1542.3 663.3M1529.3 657.0L1542.3 663.3M1529.3 657.0L1531.3 680.5M1529.3 657.0L1543.7 679.1M1531.3 680.5L1543.7 679.1M1531.3 680.5L1525.0 704.8M1531.3 680.5L1542.8 695.4M1525.0 704.8L1542.8 695.4M1525.0 704.8L1530.2 715.1M1542.8 695.4L1530.2 715.1M1530.2 715.1L1545.1 718.3M1530.2 715.1L1521.0 734.2M1545.1 718.3L1521.0 734.2M1521.0 734.2L1539.8 736.1M1521.0 734.2L1526.2 751.4M1539.8 736.1L1526.2 751.4M1526.2 751.4L1542.6 759.0M1526.2 751.4L1521.9 772.0M1526.2 751.4L1550.5 766.4M1521.9 772.0L1550.5 766.4M1521.9 772.0L1523.9 792.3M1550.5 766.4L1523.9 792.3M1523.9 792.3L1547.5 787.0M1523.9 792.3L1527.4 804.4M1523.9 792.3L1540.1 811.7M1527.4 804.4L1540.1 811.7M1549.1 374.3L1539.8 390.2M1539.8 390.2L1539.4 410.1M1539.4 410.1L1550.2 434.5M1550.2 434.5L1546.9 442.6M1546.9 442.6L1541.7 461.3M1541.7 461.3L1543.4 484.7M1543.4 484.7L1539.0 500.9M1539.0 500.9L1544.1 521.0M1544.1 521.0L1549.1 535.7M1549.1 535.7L1546.3 552.1M1546.3 552.1L1544.4 574.7M1544.4 574.7L1539.4 591.2M1539.4 591.2L1545.0 605.0M1545.0 605.0L1541.8 631.1M1541.8 631.1L1543.1 641.1M1543.1 641.1L1542.3 663.3M1542.3 663.3L1543.7 679.1M1543.7 679.1L1542.8 695.4M1542.8 695.4L1545.1 718.3M1545.1 718.3L1539.8 736.1M1539.8 736.1L1542.6 759.0M1542.6 759.0L1550.5 766.4M1550.5 766.4L1547.5 787.0M1547.5 787.0L1540.1 811.7" stroke="#d87878" stroke-width="0.7" fill="none" opacity="0.9"/>
<polygon points="1095,615 1215,640 1205,710 1290,735 1395,725 1395,790 1095,790" fill="url(#fshade)" clip-path="url(#cpf)"/>
<path d="M921.7,551.7 L1083.3,598.3 M930,523.3 L1056.7,554.2 L1140,588.3 L1176.7,628.3 M1083,598 L1106,607 L1176.7,636.7 M1213,497 L1240,506" stroke="#3a2020" stroke-width="1" stroke-dasharray="3 1.5" fill="none" opacity="0.85"/>
<polygon points="987,395 1031,402 1030,514 951,498 958,469 974,423" fill="#6ec9fc" />
<polygon points="1037,404 1059,397 1155,389 1176,432 1213,497 1148,506 1038,516" fill="#6ec9fc" />
<path clip-path="url(#cpb)" d="M938.5 374.8L954.2 382.9M938.5 374.8L934.9 399.5M954.2 382.9L934.9 399.5M934.9 399.5L952.2 394.2M934.9 399.5L942.8 407.3M934.9 399.5L959.5 413.9M942.8 407.3L959.5 413.9M942.8 407.3L941.2 420.2M959.5 413.9L941.2 420.2M941.2 420.2L958.9 420.1M941.2 420.2L943.4 441.2M941.2 420.2L960.0 440.6M943.4 441.2L960.0 440.6M943.4 441.2L942.3 454.3M960.0 440.6L942.3 454.3M942.3 454.3L951.3 460.1M942.3 454.3L939.3 473.3M951.3 460.1L939.3 473.3M939.3 473.3L951.0 475.1M939.3 473.3L938.1 480.6M951.0 475.1L938.1 480.6M938.1 480.6L950.1 480.6M938.1 480.6L936.0 504.4M950.1 480.6L936.0 504.4M936.0 504.4L954.7 501.1M936.0 504.4L937.7 510.4M954.7 501.1L937.7 510.4M937.7 510.4L955.9 518.3M937.7 510.4L940.7 526.1M937.7 510.4L950.9 532.4M940.7 526.1L950.9 532.4M954.2 382.9L968.1 384.8M954.2 382.9L952.2 394.2M954.2 382.9L971.3 397.0M952.2 394.2L971.3 397.0M952.2 394.2L959.5 413.9M952.2 394.2L966.1 414.3M959.5 413.9L966.1 414.3M959.5 413.9L958.9 420.1M959.5 413.9L967.8 421.9M958.9 420.1L967.8 421.9M958.9 420.1L960.0 440.6M967.8 421.9L960.0 440.6M960.0 440.6L969.2 443.0M960.0 440.6L951.3 460.1M969.2 443.0L951.3 460.1M951.3 460.1L968.1 454.7M951.3 460.1L951.0 475.1M968.1 454.7L951.0 475.1M951.0 475.1L971.1 467.3M951.0 475.1L950.1 480.6M951.0 475.1L966.0 484.0M950.1 480.6L966.0 484.0M950.1 480.6L954.7 501.1M966.0 484.0L954.7 501.1M954.7 501.1L972.2 501.9M954.7 501.1L955.9 518.3M972.2 501.9L955.9 518.3M955.9 518.3L967.0 516.7M955.9 518.3L950.9 532.4M955.9 518.3L973.5 532.1M950.9 532.4L973.5 532.1M968.1 384.8L981.7 375.2M968.1 384.8L971.3 397.0M981.7 375.2L971.3 397.0M971.3 397.0L990.1 397.2M971.3 397.0L966.1 414.3M971.3 397.0L982.6 412.5M966.1 414.3L982.6 412.5M966.1 414.3L967.8 421.9M966.1 414.3L985.8 426.4M967.8 421.9L985.8 426.4M967.8 421.9L969.2 443.0M967.8 421.9L983.5 441.8M969.2 443.0L983.5 441.8M969.2 443.0L968.1 454.7M983.5 441.8L968.1 454.7M968.1 454.7L983.8 453.8M968.1 454.7L971.1 467.3M968.1 454.7L983.2 472.5M971.1 467.3L983.2 472.5M971.1 467.3L966.0 484.0M971.1 467.3L988.8 482.8M966.0 484.0L988.8 482.8M966.0 484.0L972.2 501.9M966.0 484.0L980.5 497.4M972.2 501.9L980.5 497.4M972.2 501.9L967.0 516.7M980.5 497.4L967.0 516.7M967.0 516.7L987.7 513.5M967.0 516.7L973.5 532.1M967.0 516.7L979.9 533.6M973.5 532.1L979.9 533.6M981.7 375.2L999.3 375.5M981.7 375.2L990.1 397.2M981.7 375.2L1002.6 395.1M990.1 397.2L1002.6 395.1M990.1 397.2L982.6 412.5M990.1 397.2L1003.7 413.5M982.6 412.5L1003.7 413.5M982.6 412.5L985.8 426.4M982.6 412.5L1003.4 429.0M985.8 426.4L1003.4 429.0M985.8 426.4L983.5 441.8M1003.4 429.0L983.5 441.8M983.5 441.8L998.8 443.2M983.5 441.8L983.8 453.8M983.5 441.8L999.9 456.6M983.8 453.8L999.9 456.6M983.8 453.8L983.2 472.5M999.9 456.6L983.2 472.5M983.2 472.5L997.0 471.3M983.2 472.5L988.8 482.8M997.0 471.3L988.8 482.8M988.8 482.8L995.5 488.8M988.8 482.8L980.5 497.4M995.5 488.8L980.5 497.4M980.5 497.4L996.6 500.7M980.5 497.4L987.7 513.5M996.6 500.7L987.7 513.5M987.7 513.5L1003.6 518.4M987.7 513.5L979.9 533.6M987.7 513.5L1003.7 529.2M979.9 533.6L1003.7 529.2M999.3 375.5L1010.5 385.1M999.3 375.5L1002.6 395.1M999.3 375.5L1013.0 398.8M1002.6 395.1L1013.0 398.8M1002.6 395.1L1003.7 413.5M1013.0 398.8L1003.7 413.5M1003.7 413.5L1014.1 409.4M1003.7 413.5L1003.4 429.0M1014.1 409.4L1003.4 429.0M1003.4 429.0L1015.4 425.5M1003.4 429.0L998.8 443.2M1015.4 425.5L998.8 443.2M998.8 443.2L1017.9 440.9M998.8 443.2L999.9 456.6M998.8 443.2L1011.5 455.3M999.9 456.6L1011.5 455.3M999.9 456.6L997.0 471.3M1011.5 455.3L997.0 471.3M997.0 471.3L1010.7 473.7M997.0 471.3L995.5 488.8M997.0 471.3L1011.6 483.6M995.5 488.8L1011.6 483.6M995.5 488.8L996.6 500.7M1011.6 483.6L996.6 500.7M996.6 500.7L1015.9 498.3M996.6 500.7L1003.6 518.4M1015.9 498.3L1003.6 518.4M1003.6 518.4L1019.1 518.1M1003.6 518.4L1003.7 529.2M1003.6 518.4L1013.2 529.3M1003.7 529.2L1013.2 529.3M1010.5 385.1L1032.5 380.1M1010.5 385.1L1013.0 398.8M1032.5 380.1L1013.0 398.8M1013.0 398.8L1031.4 393.3M1013.0 398.8L1014.1 409.4M1013.0 398.8L1030.7 411.0M1014.1 409.4L1030.7 411.0M1014.1 409.4L1015.4 425.5M1030.7 411.0L1015.4 425.5M1015.4 425.5L1034.2 423.4M1015.4 425.5L1017.9 440.9M1034.2 423.4L1017.9 440.9M1017.9 440.9L1033.2 437.0M1017.9 440.9L1011.5 455.3M1033.2 437.0L1011.5 455.3M1011.5 455.3L1027.8 452.2M1011.5 455.3L1010.7 473.7M1027.8 452.2L1010.7 473.7M1010.7 473.7L1034.5 465.8M1010.7 473.7L1011.6 483.6M1034.5 465.8L1011.6 483.6M1011.6 483.6L1027.8 484.7M1011.6 483.6L1015.9 498.3M1011.6 483.6L1032.2 501.7M1015.9 498.3L1032.2 501.7M1015.9 498.3L1019.1 518.1M1015.9 498.3L1026.0 513.9M1019.1 518.1L1026.0 513.9M1019.1 518.1L1013.2 529.3M1026.0 513.9L1013.2 529.3M1013.2 529.3L1032.3 526.3M1032.5 380.1L1041.0 383.4M1032.5 380.1L1031.4 393.3M1041.0 383.4L1031.4 393.3M1031.4 393.3L1039.8 390.6M1031.4 393.3L1030.7 411.0M1039.8 390.6L1030.7 411.0M1030.7 411.0L1041.7 413.5M1030.7 411.0L1034.2 423.4M1041.7 413.5L1034.2 423.4M1034.2 423.4L1043.4 424.3M1034.2 423.4L1033.2 437.0M1034.2 423.4L1045.4 444.1M1033.2 437.0L1045.4 444.1M1033.2 437.0L1027.8 452.2M1033.2 437.0L1040.2 451.8M1027.8 452.2L1040.2 451.8M1027.8 452.2L1034.5 465.8M1027.8 452.2L1044.0 471.5M1034.5 465.8L1044.0 471.5M1034.5 465.8L1027.8 484.7M1044.0 471.5L1027.8 484.7M1027.8 484.7L1041.1 484.3M1027.8 484.7L1032.2 501.7M1041.1 484.3L1032.2 501.7M1032.2 501.7L1045.7 495.4M1032.2 501.7L1026.0 513.9M1045.7 495.4L1026.0 513.9M1026.0 513.9L1043.2 510.4M1026.0 513.9L1032.3 526.3M1043.2 510.4L1032.3 526.3M1032.3 526.3L1049.3 524.9M1041.0 383.4L1056.4 381.2M1041.0 383.4L1039.8 390.6M1041.0 383.4L1057.2 395.8M1039.8 390.6L1057.2 395.8M1039.8 390.6L1041.7 413.5M1039.8 390.6L1058.3 415.2M1041.7 413.5L1058.3 415.2M1041.7 413.5L1043.4 424.3M1041.7 413.5L1060.7 423.5M1043.4 424.3L1060.7 423.5M1043.4 424.3L1045.4 444.1M1060.7 423.5L1045.4 444.1M1045.4 444.1L1056.6 439.8M1045.4 444.1L1040.2 451.8M1056.6 439.8L1040.2 451.8M1040.2 451.8L1062.9 457.3M1040.2 451.8L1044.0 471.5M1062.9 457.3L1044.0 471.5M1044.0 471.5L1062.2 470.2M1044.0 471.5L1041.1 484.3M1062.2 470.2L1041.1 484.3M1041.1 484.3L1064.6 483.9M1041.1 484.3L1045.7 495.4M1041.1 484.3L1060.5 504.8M1045.7 495.4L1060.5 504.8M1045.7 495.4L1043.2 510.4M1045.7 495.4L1063.0 514.7M1043.2 510.4L1063.0 514.7M1043.2 510.4L1049.3 524.9M1043.2 510.4L1063.1 532.8M1049.3 524.9L1063.1 532.8M1056.4 381.2L1072.8 378.9M1056.4 381.2L1057.2 395.8M1056.4 381.2L1077.7 393.7M1057.2 395.8L1077.7 393.7M1057.2 395.8L1058.3 415.2M1057.2 395.8L1073.4 410.4M1058.3 415.2L1073.4 410.4M1058.3 415.2L1060.7 423.5M1073.4 410.4L1060.7 423.5M1060.7 423.5L1070.5 422.5M1060.7 423.5L1056.6 439.8M1070.5 422.5L1056.6 439.8M1056.6 439.8L1080.1 437.4M1056.6 439.8L1062.9 457.3M1056.6 439.8L1078.2 449.8M1062.9 457.3L1078.2 449.8M1062.9 457.3L1062.2 470.2M1062.9 457.3L1073.0 470.2M1062.2 470.2L1073.0 470.2M1062.2 470.2L1064.6 483.9M1062.2 470.2L1073.0 489.7M1064.6 483.9L1073.0 489.7M1064.6 483.9L1060.5 504.8M1064.6 483.9L1079.8 497.9M1060.5 504.8L1079.8 497.9M1060.5 504.8L1063.0 514.7M1060.5 504.8L1071.2 519.4M1063.0 514.7L1071.2 519.4M1063.0 514.7L1063.1 532.8M1063.0 514.7L1078.1 530.2M1063.1 532.8L1078.1 530.2M1072.8 378.9L1085.4 374.9M1072.8 378.9L1077.7 393.7M1072.8 378.9L1092.0 396.9M1077.7 393.7L1092.0 396.9M1077.7 393.7L1073.4 410.4M1077.7 393.7L1089.6 408.2M1073.4 410.4L1089.6 408.2M1073.4 410.4L1070.5 422.5M1089.6 408.2L1070.5 422.5M1070.5 422.5L1087.6 423.6M1070.5 422.5L1080.1 437.4M1070.5 422.5L1089.1 441.2M1080.1 437.4L1089.1 441.2M1080.1 437.4L1078.2 449.8M1080.1 437.4L1089.1 453.3M1078.2 449.8L1089.1 453.3M1078.2 449.8L1073.0 470.2M1089.1 453.3L1073.0 470.2M1073.0 470.2L1087.1 471.7M1073.0 470.2L1073.0 489.7M1073.0 470.2L1094.6 481.7M1073.0 489.7L1094.6 481.7M1073.0 489.7L1079.8 497.9M1094.6 481.7L1079.8 497.9M1079.8 497.9L1092.9 501.5M1079.8 497.9L1071.2 519.4M1079.8 497.9L1087.2 511.2M1071.2 519.4L1087.2 511.2M1071.2 519.4L1078.1 530.2M1087.2 511.2L1078.1 530.2M1078.1 530.2L1093.5 526.3M1085.4 374.9L1101.0 375.7M1085.4 374.9L1092.0 396.9M1085.4 374.9L1108.3 393.7M1092.0 396.9L1108.3 393.7M1092.0 396.9L1089.6 408.2M1092.0 396.9L1099.8 407.7M1089.6 408.2L1099.8 407.7M1089.6 408.2L1087.6 423.6M1099.8 407.7L1087.6 423.6M1087.6 423.6L1105.2 424.7M1087.6 423.6L1089.1 441.2M1087.6 423.6L1101.3 443.7M1089.1 441.2L1101.3 443.7M1089.1 441.2L1089.1 453.3M1101.3 443.7L1089.1 453.3M1089.1 453.3L1107.1 452.6M1089.1 453.3L1087.1 471.7M1089.1 453.3L1103.1 467.4M1087.1 471.7L1103.1 467.4M1087.1 471.7L1094.6 481.7M1087.1 471.7L1100.0 486.2M1094.6 481.7L1100.0 486.2M1094.6 481.7L1092.9 501.5M1094.6 481.7L1102.6 501.7M1092.9 501.5L1102.6 501.7M1092.9 501.5L1087.2 511.2M1092.9 501.5L1108.5 513.1M1087.2 511.2L1108.5 513.1M1087.2 511.2L1093.5 526.3M1087.2 511.2L1102.8 528.6M1093.5 526.3L1102.8 528.6M1101.0 375.7L1119.7 375.2M1101.0 375.7L1108.3 393.7M1119.7 375.2L1108.3 393.7M1108.3 393.7L1118.8 393.0M1108.3 393.7L1099.8 407.7M1108.3 393.7L1115.9 413.5M1099.8 407.7L1115.9 413.5M1099.8 407.7L1105.2 424.7M1099.8 407.7L1122.1 424.9M1105.2 424.7L1122.1 424.9M1105.2 424.7L1101.3 443.7M1122.1 424.9L1101.3 443.7M1101.3 443.7L1115.5 442.4M1101.3 443.7L1107.1 452.6M1115.5 442.4L1107.1 452.6M1107.1 452.6L1118.7 459.0M1107.1 452.6L1103.1 467.4M1107.1 452.6L1121.5 467.3M1103.1 467.4L1121.5 467.3M1103.1 467.4L1100.0 486.2M1103.1 467.4L1122.6 486.0M1100.0 486.2L1122.6 486.0M1100.0 486.2L1102.6 501.7M1122.6 486.0L1102.6 501.7M1102.6 501.7L1118.5 503.1M1102.6 501.7L1108.5 513.1M1118.5 503.1L1108.5 513.1M1108.5 513.1L1118.2 511.3M1108.5 513.1L1102.8 528.6M1118.2 511.3L1102.8 528.6M1102.8 528.6L1115.2 531.2M1119.7 375.2L1132.6 376.4M1119.7 375.2L1118.8 393.0M1132.6 376.4L1118.8 393.0M1118.8 393.0L1130.3 397.9M1118.8 393.0L1115.9 413.5M1118.8 393.0L1132.7 413.8M1115.9 413.5L1132.7 413.8M1115.9 413.5L1122.1 424.9M1132.7 413.8L1122.1 424.9M1122.1 424.9L1139.1 428.3M1122.1 424.9L1115.5 442.4M1139.1 428.3L1115.5 442.4M1115.5 442.4L1132.1 444.7M1115.5 442.4L1118.7 459.0M1132.1 444.7L1118.7 459.0M1118.7 459.0L1136.3 458.6M1118.7 459.0L1121.5 467.3M1118.7 459.0L1139.3 468.1M1121.5 467.3L1139.3 468.1M1121.5 467.3L1122.6 486.0M1121.5 467.3L1133.7 489.2M1122.6 486.0L1133.7 489.2M1122.6 486.0L1118.5 503.1M1133.7 489.2L1118.5 503.1M1118.5 503.1L1132.8 495.8M1118.5 503.1L1118.2 511.3M1132.8 495.8L1118.2 511.3M1118.2 511.3L1130.1 515.6M1118.2 511.3L1115.2 531.2M1130.1 515.6L1115.2 531.2M1115.2 531.2L1133.0 534.7M1132.6 376.4L1144.9 378.9M1132.6 376.4L1130.3 397.9M1144.9 378.9L1130.3 397.9M1130.3 397.9L1152.2 396.1M1130.3 397.9L1132.7 413.8M1152.2 396.1L1132.7 413.8M1132.7 413.8L1153.5 411.6M1132.7 413.8L1139.1 428.3M1132.7 413.8L1153.9 429.9M1139.1 428.3L1153.9 429.9M1139.1 428.3L1132.1 444.7M1153.9 429.9L1132.1 444.7M1132.1 444.7L1153.8 441.1M1132.1 444.7L1136.3 458.6M1153.8 441.1L1136.3 458.6M1136.3 458.6L1148.9 455.3M1136.3 458.6L1139.3 468.1M1136.3 458.6L1147.1 467.4M1139.3 468.1L1147.1 467.4M1139.3 468.1L1133.7 489.2M1139.3 468.1L1150.2 484.4M1133.7 489.2L1150.2 484.4M1133.7 489.2L1132.8 495.8M1133.7 489.2L1148.8 495.6M1132.8 495.8L1148.8 495.6M1132.8 495.8L1130.1 515.6M1132.8 495.8L1155.1 513.2M1130.1 515.6L1155.1 513.2M1130.1 515.6L1133.0 534.7M1130.1 515.6L1149.8 528.4M1133.0 534.7L1149.8 528.4M1144.9 378.9L1165.6 382.9M1144.9 378.9L1152.2 396.1M1144.9 378.9L1169.6 396.1M1152.2 396.1L1169.6 396.1M1152.2 396.1L1153.5 411.6M1169.6 396.1L1153.5 411.6M1153.5 411.6L1169.6 408.6M1153.5 411.6L1153.9 429.9M1169.6 408.6L1153.9 429.9M1153.9 429.9L1164.7 423.3M1153.9 429.9L1153.8 441.1M1164.7 423.3L1153.8 441.1M1153.8 441.1L1169.9 436.1M1153.8 441.1L1148.9 455.3M1169.9 436.1L1148.9 455.3M1148.9 455.3L1162.1 457.8M1148.9 455.3L1147.1 467.4M1148.9 455.3L1162.3 465.4M1147.1 467.4L1162.3 465.4M1147.1 467.4L1150.2 484.4M1162.3 465.4L1150.2 484.4M1150.2 484.4L1163.6 484.6M1150.2 484.4L1148.8 495.6M1163.6 484.6L1148.8 495.6M1148.8 495.6L1164.5 497.2M1148.8 495.6L1155.1 513.2M1164.5 497.2L1155.1 513.2M1155.1 513.2L1163.4 512.8M1155.1 513.2L1149.8 528.4M1155.1 513.2L1161.6 530.1M1149.8 528.4L1161.6 530.1M1165.6 382.9L1177.1 376.8M1165.6 382.9L1169.6 396.1M1177.1 376.8L1169.6 396.1M1169.6 396.1L1184.5 399.1M1169.6 396.1L1169.6 408.6M1184.5 399.1L1169.6 408.6M1169.6 408.6L1178.7 410.3M1169.6 408.6L1164.7 423.3M1178.7 410.3L1164.7 423.3M1164.7 423.3L1175.8 420.0M1164.7 423.3L1169.9 436.1M1164.7 423.3L1180.1 444.7M1169.9 436.1L1180.1 444.7M1169.9 436.1L1162.1 457.8M1180.1 444.7L1162.1 457.8M1162.1 457.8L1175.6 454.5M1162.1 457.8L1162.3 465.4M1175.6 454.5L1162.3 465.4M1162.3 465.4L1183.1 464.9M1162.3 465.4L1163.6 484.6M1183.1 464.9L1163.6 484.6M1163.6 484.6L1180.9 482.5M1163.6 484.6L1164.5 497.2M1180.9 482.5L1164.5 497.2M1164.5 497.2L1182.7 503.4M1164.5 497.2L1163.4 512.8M1182.7 503.4L1163.4 512.8M1163.4 512.8L1184.0 517.9M1163.4 512.8L1161.6 530.1M1184.0 517.9L1161.6 530.1M1161.6 530.1L1175.7 531.7M1177.1 376.8L1195.6 377.9M1177.1 376.8L1184.5 399.1M1195.6 377.9L1184.5 399.1M1184.5 399.1L1191.9 394.7M1184.5 399.1L1178.7 410.3M1191.9 394.7L1178.7 410.3M1178.7 410.3L1194.2 409.0M1178.7 410.3L1175.8 420.0M1178.7 410.3L1199.8 422.2M1175.8 420.0L1199.8 422.2M1175.8 420.0L1180.1 444.7M1199.8 422.2L1180.1 444.7M1180.1 444.7L1198.7 436.3M1180.1 444.7L1175.6 454.5M1180.1 444.7L1197.0 454.4M1175.6 454.5L1197.0 454.4M1175.6 454.5L1183.1 464.9M1197.0 454.4L1183.1 464.9M1183.1 464.9L1193.9 469.8M1183.1 464.9L1180.9 482.5M1193.9 469.8L1180.9 482.5M1180.9 482.5L1191.1 482.1M1180.9 482.5L1182.7 503.4M1180.9 482.5L1194.1 496.8M1182.7 503.4L1194.1 496.8M1182.7 503.4L1184.0 517.9M1182.7 503.4L1198.6 517.0M1184.0 517.9L1198.6 517.0M1184.0 517.9L1175.7 531.7M1198.6 517.0L1175.7 531.7M1175.7 531.7L1196.4 532.0M1195.6 377.9L1206.5 374.9M1195.6 377.9L1191.9 394.7M1206.5 374.9L1191.9 394.7M1191.9 394.7L1205.6 399.0M1191.9 394.7L1194.2 409.0M1205.6 399.0L1194.2 409.0M1194.2 409.0L1209.9 415.0M1194.2 409.0L1199.8 422.2M1194.2 409.0L1208.2 423.8M1199.8 422.2L1208.2 423.8M1199.8 422.2L1198.7 436.3M1199.8 422.2L1211.6 443.6M1198.7 436.3L1211.6 443.6M1198.7 436.3L1197.0 454.4M1198.7 436.3L1209.2 454.8M1197.0 454.4L1209.2 454.8M1197.0 454.4L1193.9 469.8M1209.2 454.8L1193.9 469.8M1193.9 469.8L1208.5 467.3M1193.9 469.8L1191.1 482.1M1208.5 467.3L1191.1 482.1M1191.1 482.1L1214.3 489.3M1191.1 482.1L1194.1 496.8M1191.1 482.1L1209.3 496.2M1194.1 496.8L1209.3 496.2M1194.1 496.8L1198.6 517.0M1194.1 496.8L1213.9 514.6M1198.6 517.0L1213.9 514.6M1198.6 517.0L1196.4 532.0M1198.6 517.0L1212.6 529.1M1196.4 532.0L1212.6 529.1M1206.5 374.9L1220.6 382.6M1206.5 374.9L1205.6 399.0M1220.6 382.6L1205.6 399.0M1205.6 399.0L1220.9 399.6M1205.6 399.0L1209.9 415.0M1220.9 399.6L1209.9 415.0M1209.9 415.0L1221.5 408.3M1209.9 415.0L1208.2 423.8M1221.5 408.3L1208.2 423.8M1208.2 423.8L1219.8 422.1M1208.2 423.8L1211.6 443.6M1208.2 423.8L1226.6 435.7M1211.6 443.6L1226.6 435.7M1211.6 443.6L1209.2 454.8M1211.6 443.6L1220.9 450.4M1209.2 454.8L1220.9 450.4M1209.2 454.8L1208.5 467.3M1209.2 454.8L1219.9 470.2M1208.5 467.3L1219.9 470.2M1208.5 467.3L1214.3 489.3M1208.5 467.3L1222.1 487.7M1214.3 489.3L1222.1 487.7M1214.3 489.3L1209.3 496.2M1214.3 489.3L1226.9 500.1M1209.3 496.2L1226.9 500.1M1209.3 496.2L1213.9 514.6M1209.3 496.2L1229.5 519.9M1213.9 514.6L1229.5 519.9M1213.9 514.6L1212.6 529.1M1213.9 514.6L1223.0 532.9M1212.6 529.1L1223.0 532.9M1220.6 382.6L1220.9 399.6M1220.9 399.6L1221.5 408.3M1221.5 408.3L1219.8 422.1M1219.8 422.1L1226.6 435.7M1226.6 435.7L1220.9 450.4M1220.9 450.4L1219.9 470.2M1219.9 470.2L1222.1 487.7M1222.1 487.7L1226.9 500.1M1226.9 500.1L1229.5 519.9M1229.5 519.9L1223.0 532.9" stroke="#2a70c8" stroke-width="0.8" fill="none" opacity="0.9"/>
<polygon points="1031,402 1038,404 1038,516 1030,514" fill="#fdd6d6" />
<polygon points="1286,738 1320,748 1288,752" fill="#2b2d3c" />
<polygon points="1288,752 1388,725 1388,729 1368,742 1320,756 1288,762" fill="#d89494" />
<path d="M1288,762 L1320,756 L1368,742 L1388,729" stroke="#8a5050" stroke-width="1.5" fill="none"/>
<path d="M1235,720 L1223,718 L1213,712 L1209,703 L1207,683 L1210,668 L1221,658 L1239,651 L1260,644 L1407,617" stroke="#9a5555" stroke-width="2.2" fill="none"/>
<path d="M1235,720 L1396,683" stroke="#904848" stroke-width="1.2" fill="none"/>
<path d="M1282,729 L1401,700" stroke="#904848" stroke-width="1.2" fill="none"/>
<rect x="1080" y="663" width="21" height="21" fill="#e8d8a8"/><rect x="1082" y="665" width="17" height="17" fill="#e02828"/>
<text x="0" y="0" transform="translate(1091,681) scale(0.75,1)" font-family="Liberation Sans" font-weight="bold" font-size="17" fill="#fff" text-anchor="middle">A</text>
<path d="M1054,650 C1053,670 1055,690 1060,708 L1068,735 M1058,648 C1058,670 1061,690 1063,710 L1068,735 M1054,665 L1058,675 M1056,682 L1061,690 M1058,702 L1063,708 M1055,672 L1061,700 M1059,705 L1066,728" stroke="#111" stroke-width="0.9" fill="none"/>
</svg>

<div class="b caps" style="left:0px;top:0px;width:24px;height:24px;background:#ffffa8;border-color:#ffffcd #cccc86 #cccc86 #ffffcd;box-shadow:inset 1px 1px 0 #ffffb9,inset -1px -1px 0 #e6e697;"><span>H</span></div>
<div class="b" style="left:24px;top:0px;width:72px;height:24px;background:#c8c8c8;border-color:#dfdfdf #a0a0a0 #a0a0a0 #dfdfdf;box-shadow:inset 1px 1px 0 #d3d3d3,inset -1px -1px 0 #b4b4b4;"><span>subob</span></div>
<div class="b" style="left:96px;top:0px;width:72px;height:24px;background:#8c8ce0;border-color:#7070b3 #bcbced #bcbced #7070b3;box-shadow:inset 1px 1px 0 #7e7eca,inset -1px -1px 0 #a3a3e6;"><span>tri</span></div>
<div class="b" style="left:168px;top:0px;width:72px;height:24px;background:#c8c8c8;border-color:#dfdfdf #a0a0a0 #a0a0a0 #dfdfdf;box-shadow:inset 1px 1px 0 #d3d3d3,inset -1px -1px 0 #b4b4b4;"><span>point</span></div>
<div class="b" style="left:240px;top:0px;width:72px;height:24px;background:#c8c8c8;border-color:#dfdfdf #a0a0a0 #a0a0a0 #dfdfdf;box-shadow:inset 1px 1px 0 #d3d3d3,inset -1px -1px 0 #b4b4b4;"><span>build</span></div>
<div class="b" style="left:312px;top:0px;width:72px;height:24px;background:#c8c8c8;border-color:#dfdfdf #a0a0a0 #a0a0a0 #dfdfdf;box-shadow:inset 1px 1px 0 #d3d3d3,inset -1px -1px 0 #b4b4b4;"><span>map</span></div>
<div class="b" style="left:384px;top:0px;width:72px;height:24px;background:#c8c8c8;border-color:#dfdfdf #a0a0a0 #a0a0a0 #dfdfdf;box-shadow:inset 1px 1px 0 #d3d3d3,inset -1px -1px 0 #b4b4b4;"><span>cutout</span></div>
<div class="b" style="left:456px;top:0px;width:72px;height:24px;background:#c8c8c8;border-color:#dfdfdf #a0a0a0 #a0a0a0 #dfdfdf;box-shadow:inset 1px 1px 0 #d3d3d3,inset -1px -1px 0 #b4b4b4;"><span>page</span></div>
<div class="b" style="left:528px;top:0px;width:72px;height:24px;background:#c8c8c8;border-color:#dfdfdf #a0a0a0 #a0a0a0 #dfdfdf;box-shadow:inset 1px 1px 0 #d3d3d3,inset -1px -1px 0 #b4b4b4;"><span>view</span></div>
<div class="b" style="left:0px;top:24px;width:96px;height:24px;background:#b0b0b0;border-color:#8d8d8d #d1d1d1 #d1d1d1 #8d8d8d;box-shadow:inset 1px 1px 0 #9e9e9e,inset -1px -1px 0 #c0c0c0;"><span>all</span></div>
<div class="b" style="left:96px;top:24px;width:72px;height:24px;background:#e0e08c;border-color:#b3b370 #ededbc #ededbc #b3b370;box-shadow:inset 1px 1px 0 #caca7e,inset -1px -1px 0 #e6e6a3;"><span></span></div>
<div class="b" style="left:168px;top:24px;width:72px;height:24px;background:#e08c30;border-color:#b37026 #edbc87 #edbc87 #b37026;box-shadow:inset 1px 1px 0 #ca7e2b,inset -1px -1px 0 #e6a359;"><span></span></div>
<div class="b" style="left:240px;top:24px;width:72px;height:24px;background:#e08c30;border-color:#b37026 #edbc87 #edbc87 #b37026;box-shadow:inset 1px 1px 0 #ca7e2b,inset -1px -1px 0 #e6a359;"><span></span></div>
<div class="b" style="left:312px;top:24px;width:72px;height:24px;background:#e08c30;border-color:#b37026 #edbc87 #edbc87 #b37026;box-shadow:inset 1px 1px 0 #ca7e2b,inset -1px -1px 0 #e6a359;"><span></span></div>
<div class="b" style="left:0px;top:48px;width:96px;height:24px;background:#c8c8c8;border-color:#dfdfdf #a0a0a0 #a0a0a0 #dfdfdf;box-shadow:inset 1px 1px 0 #d3d3d3,inset -1px -1px 0 #b4b4b4;"><span>none</span></div>
<div class="b" style="left:96px;top:48px;width:72px;height:24px;background:#e08c30;border-color:#b37026 #edbc87 #edbc87 #b37026;box-shadow:inset 1px 1px 0 #ca7e2b,inset -1px -1px 0 #e6a359;"><span></span></div>
<div class="b" style="left:168px;top:48px;width:72px;height:24px;background:#e08c30;border-color:#b37026 #edbc87 #edbc87 #b37026;box-shadow:inset 1px 1px 0 #ca7e2b,inset -1px -1px 0 #e6a359;"><span></span></div>
<div class="b" style="left:240px;top:48px;width:72px;height:24px;background:#e08c30;border-color:#b37026 #edbc87 #edbc87 #b37026;box-shadow:inset 1px 1px 0 #ca7e2b,inset -1px -1px 0 #e6a359;"><span></span></div>
<div class="b" style="left:312px;top:48px;width:72px;height:24px;background:#e08c30;border-color:#b37026 #edbc87 #edbc87 #b37026;box-shadow:inset 1px 1px 0 #ca7e2b,inset -1px -1px 0 #e6a359;"><span></span></div>
<div class="b" style="left:0px;top:72px;width:96px;height:24px;background:#c8c8c8;border-color:#dfdfdf #a0a0a0 #a0a0a0 #dfdfdf;box-shadow:inset 1px 1px 0 #d3d3d3,inset -1px -1px 0 #b4b4b4;"><span>merge</span></div>
<div class="b" style="left:96px;top:72px;width:72px;height:24px;background:#e08c30;border-color:#b37026 #edbc87 #edbc87 #b37026;box-shadow:inset 1px 1px 0 #ca7e2b,inset -1px -1px 0 #e6a359;"><span></span></div>
<div class="b" style="left:168px;top:72px;width:72px;height:24px;background:#e08c30;border-color:#b37026 #edbc87 #edbc87 #b37026;box-shadow:inset 1px 1px 0 #ca7e2b,inset -1px -1px 0 #e6a359;"><span></span></div>
<div class="b" style="left:240px;top:72px;width:72px;height:24px;background:#e08c30;border-color:#b37026 #edbc87 #edbc87 #b37026;box-shadow:inset 1px 1px 0 #ca7e2b,inset -1px -1px 0 #e6a359;"><span></span></div>
<div class="b" style="left:312px;top:72px;width:72px;height:24px;background:#e08c30;border-color:#b37026 #edbc87 #edbc87 #b37026;box-shadow:inset 1px 1px 0 #ca7e2b,inset -1px -1px 0 #e6a359;"><span></span></div>
<div class="b" style="left:0px;top:96px;width:96px;height:24px;background:#c8c8c8;border-color:#dfdfdf #a0a0a0 #a0a0a0 #dfdfdf;box-shadow:inset 1px 1px 0 #d3d3d3,inset -1px -1px 0 #b4b4b4;"><span>–</span></div>
<div class="b" style="left:96px;top:96px;width:72px;height:24px;background:#e08c30;border-color:#b37026 #edbc87 #edbc87 #b37026;box-shadow:inset 1px 1px 0 #ca7e2b,inset -1px -1px 0 #e6a359;"><span></span></div>
<div class="b" style="left:168px;top:96px;width:72px;height:24px;background:#e08c30;border-color:#b37026 #edbc87 #edbc87 #b37026;box-shadow:inset 1px 1px 0 #ca7e2b,inset -1px -1px 0 #e6a359;"><span></span></div>
<div class="b" style="left:240px;top:96px;width:72px;height:24px;background:#e08c30;border-color:#b37026 #edbc87 #edbc87 #b37026;box-shadow:inset 1px 1px 0 #ca7e2b,inset -1px -1px 0 #e6a359;"><span></span></div>
<div class="b" style="left:312px;top:96px;width:72px;height:24px;background:#e08c30;border-color:#b37026 #edbc87 #edbc87 #b37026;box-shadow:inset 1px 1px 0 #ca7e2b,inset -1px -1px 0 #e6a359;"><span></span></div>
<div class="b" style="left:0px;top:120px;width:216px;height:24px;background:#ffffa8;border-color:#ffffcd #cccc86 #cccc86 #ffffcd;box-shadow:inset 1px 1px 0 #ffffb9,inset -1px -1px 0 #e6e697;"><span>auto</span></div>
<div class="b" style="left:216px;top:120px;width:72px;height:24px;background:#e0b48c;border-color:#edd4bc #b39070 #b39070 #edd4bc;box-shadow:inset 1px 1px 0 #e6c3a3,inset -1px -1px 0 #caa27e;"><span>lod1</span></div>
<div class="b" style="left:288px;top:120px;width:24px;height:24px;background:#969696;border-color:#c2c2c2 #787878 #787878 #c2c2c2;box-shadow:inset 1px 1px 0 #ababab,inset -1px -1px 0 #878787;"><span>–</span></div>
<div class="b" style="left:312px;top:120px;width:24px;height:24px;background:#969696;border-color:#c2c2c2 #787878 #787878 #c2c2c2;box-shadow:inset 1px 1px 0 #ababab,inset -1px -1px 0 #878787;"><span>+</span></div>
<div class="b" style="left:0px;top:144px;width:96px;height:24px;background:#a0a0ff;border-color:#c8c8ff #8080cc #8080cc #c8c8ff;box-shadow:inset 1px 1px 0 #b3b3ff,inset -1px -1px 0 #9090e6;"><span>lod dist</span></div>
<div class="b" style="left:96px;top:144px;width:144px;height:24px;background:#a0a0ff;border-color:#c8c8ff #8080cc #8080cc #c8c8ff;box-shadow:inset 1px 1px 0 #b3b3ff,inset -1px -1px 0 #9090e6;"><span>30 m</span></div>
<div class="b" style="left:240px;top:144px;width:24px;height:24px;background:#a0a0ff;border-color:#c8c8ff #8080cc #8080cc #c8c8ff;box-shadow:inset 1px 1px 0 #b3b3ff,inset -1px -1px 0 #9090e6;"><span>–</span></div>
<div class="b" style="left:264px;top:144px;width:24px;height:24px;background:#a0a0ff;border-color:#c8c8ff #8080cc #8080cc #c8c8ff;box-shadow:inset 1px 1px 0 #b3b3ff,inset -1px -1px 0 #9090e6;"><span>+</span></div>
<div class="b" style="left:0px;top:168px;width:144px;height:24px;background:#ffffa8;border-color:#ffffcd #cccc86 #cccc86 #ffffcd;box-shadow:inset 1px 1px 0 #ffffb9,inset -1px -1px 0 #e6e697;"><span>2234 tris</span></div>
<div class="b" style="left:144px;top:168px;width:144px;height:24px;background:#ffffa8;border-color:#ffffcd #cccc86 #cccc86 #ffffcd;box-shadow:inset 1px 1px 0 #ffffb9,inset -1px -1px 0 #e6e697;"><span>1565 pts</span></div>
<div class="b" style="left:0px;top:192px;width:144px;height:24px;background:#c8c8c8;border-color:#dfdfdf #a0a0a0 #a0a0a0 #dfdfdf;box-shadow:inset 1px 1px 0 #d3d3d3,inset -1px -1px 0 #b4b4b4;"><span>2242 tris</span></div>
<div class="b" style="left:144px;top:192px;width:144px;height:24px;background:#c8c8c8;border-color:#dfdfdf #a0a0a0 #a0a0a0 #dfdfdf;box-shadow:inset 1px 1px 0 #d3d3d3,inset -1px -1px 0 #b4b4b4;"><span>1581 pts</span></div>
<div class="b" style="left:0px;top:216px;width:48px;height:24px;background:#969696;border-color:#c2c2c2 #787878 #787878 #c2c2c2;box-shadow:inset 1px 1px 0 #ababab,inset -1px -1px 0 #878787;"><span>30</span></div>
<div class="b" style="left:48px;top:216px;width:96px;height:24px;background:#a0a0ff;border-color:#c8c8ff #8080cc #8080cc #c8c8ff;box-shadow:inset 1px 1px 0 #b3b3ff,inset -1px -1px 0 #9090e6;"><span>undo</span></div>
<div class="b" style="left:144px;top:216px;width:96px;height:24px;background:#969696;border-color:#c2c2c2 #787878 #787878 #c2c2c2;box-shadow:inset 1px 1px 0 #ababab,inset -1px -1px 0 #878787;"><span>redo</span></div>
<div class="b" style="left:240px;top:216px;width:48px;height:24px;background:#969696;border-color:#c2c2c2 #787878 #787878 #c2c2c2;box-shadow:inset 1px 1px 0 #ababab,inset -1px -1px 0 #878787;"><span>0</span></div>
<div class="b" style="left:0px;top:240px;width:96px;height:24px;background:#ffd0a0;border-color:#ffe4c8 #cca680 #cca680 #ffe4c8;box-shadow:inset 1px 1px 0 #ffd9b3,inset -1px -1px 0 #e6bb90;"><span>clear</span></div>
<div class="b" style="left:96px;top:240px;width:96px;height:24px;background:#ffd0a0;border-color:#ffe4c8 #cca680 #cca680 #ffe4c8;box-shadow:inset 1px 1px 0 #ffd9b3,inset -1px -1px 0 #e6bb90;"><span>select all</span></div>
<div class="b" style="left:192px;top:240px;width:96px;height:24px;background:#c8c8c8;border-color:#dfdfdf #a0a0a0 #a0a0a0 #dfdfdf;box-shadow:inset 1px 1px 0 #d3d3d3,inset -1px -1px 0 #b4b4b4;"><span>invert</span></div>
<div class="b" style="left:0px;top:264px;width:72px;height:24px;background:#c8c8c8;border-color:#dfdfdf #a0a0a0 #a0a0a0 #dfdfdf;box-shadow:inset 1px 1px 0 #d3d3d3,inset -1px -1px 0 #b4b4b4;"><span>index</span></div>
<div class="b" style="left:72px;top:264px;width:216px;height:24px;background:#a0f8f8;border-color:#c8fbfb #80c6c6 #80c6c6 #c8fbfb;box-shadow:inset 1px 1px 0 #b3f9f9,inset -1px -1px 0 #90dfdf;"><span>no triangles selected</span></div>
<div class="b" style="left:0px;top:288px;width:120px;height:24px;background:#a0f8a0;border-color:#c8fbc8 #80c680 #80c680 #c8fbc8;box-shadow:inset 1px 1px 0 #b3f9b3,inset -1px -1px 0 #90df90;"><span>unhide all</span></div>
<div class="b" style="left:120px;top:288px;width:168px;height:24px;background:#c8c8c8;border-color:#dfdfdf #a0a0a0 #a0a0a0 #dfdfdf;box-shadow:inset 1px 1px 0 #d3d3d3,inset -1px -1px 0 #b4b4b4;"><span>hide unselected</span></div>
<div class="b" style="left:0px;top:312px;width:192px;height:24px;background:#c8c8c8;border-color:#dfdfdf #a0a0a0 #a0a0a0 #dfdfdf;box-shadow:inset 1px 1px 0 #d3d3d3,inset -1px -1px 0 #b4b4b4;"><span>triangle buttons :</span></div>
<div class="b caps" style="left:192px;top:312px;width:48px;height:24px;background:#8c8ce0;border-color:#7070b3 #bcbced #bcbced #7070b3;box-shadow:inset 1px 1px 0 #7e7eca,inset -1px -1px 0 #a3a3e6;"><span>NO</span></div>
<div class="b caps" style="left:240px;top:312px;width:48px;height:24px;background:#a0a0ff;border-color:#c8c8ff #8080cc #8080cc #c8c8ff;box-shadow:inset 1px 1px 0 #b3b3ff,inset -1px -1px 0 #9090e6;"><span>YES</span></div>
<div class="b" style="left:0px;top:336px;width:144px;height:24px;background:#c8c8c8;border-color:#dfdfdf #a0a0a0 #a0a0a0 #dfdfdf;box-shadow:inset 1px 1px 0 #d3d3d3,inset -1px -1px 0 #b4b4b4;"><span>box select :</span></div>
<div class="b" style="left:144px;top:336px;width:72px;height:24px;background:#ffa040;border-color:#ffc890 #cc8033 #cc8033 #ffc890;box-shadow:inset 1px 1px 0 #ffb366,inset -1px -1px 0 #e6903a;"><span>facing</span></div>
<div class="b" style="left:216px;top:336px;width:72px;height:24px;background:#e08c30;border-color:#b37026 #edbc87 #edbc87 #b37026;box-shadow:inset 1px 1px 0 #ca7e2b,inset -1px -1px 0 #e6a359;"><span>all</span></div>
<div class="b" style="left:0px;top:720px;width:120px;height:24px;background:#ffffa8;border-color:#ffffcd #cccc86 #cccc86 #ffffcd;box-shadow:inset 1px 1px 0 #ffffb9,inset -1px -1px 0 #e6e697;"><span>cols : 2</span></div>
<div class="b" style="left:120px;top:720px;width:96px;height:24px;background:#a0a0ff;border-color:#c8c8ff #8080cc #8080cc #c8c8ff;box-shadow:inset 1px 1px 0 #b3b3ff,inset -1px -1px 0 #9090e6;"><span>clean</span></div>
<div class="b" style="left:216px;top:720px;width:96px;height:24px;background:#a0a0ff;border-color:#c8c8ff #8080cc #8080cc #c8c8ff;box-shadow:inset 1px 1px 0 #b3b3ff,inset -1px -1px 0 #9090e6;"><span>dup</span></div>
<div class="b" style="left:0px;top:744px;width:192px;height:24px;background:#c8c8c8;border-color:#dfdfdf #a0a0a0 #a0a0a0 #dfdfdf;box-shadow:inset 1px 1px 0 #d3d3d3,inset -1px -1px 0 #b4b4b4;"><span>unnamed mapping</span></div>
<div class="b" style="left:192px;top:744px;width:96px;height:24px;background:#c8c8c8;border-color:#dfdfdf #a0a0a0 #a0a0a0 #dfdfdf;box-shadow:inset 1px 1px 0 #d3d3d3,inset -1px -1px 0 #b4b4b4;"><span>783 tri</span></div>
<div class="b" style="left:288px;top:744px;width:24px;height:192px;background:#a0a0ff;border-color:#c8c8ff #8080cc #8080cc #c8c8ff;box-shadow:inset 1px 1px 0 #b3b3ff,inset -1px -1px 0 #9090e6;"><span></span></div>
<div class="b" style="left:0px;top:840px;width:192px;height:24px;background:#c8c8c8;border-color:#dfdfdf #a0a0a0 #a0a0a0 #dfdfdf;box-shadow:inset 1px 1px 0 #d3d3d3,inset -1px -1px 0 #b4b4b4;"><span>2</span></div>
<div class="b" style="left:192px;top:840px;width:96px;height:24px;background:#c8c8c8;border-color:#dfdfdf #a0a0a0 #a0a0a0 #dfdfdf;box-shadow:inset 1px 1px 0 #d3d3d3,inset -1px -1px 0 #b4b4b4;"><span>334 tri</span></div>
<div class="b l" style="left:0px;top:936px;width:96px;height:24px;background:#c8c8c8;border-color:#dfdfdf #a0a0a0 #a0a0a0 #dfdfdf;box-shadow:inset 1px 1px 0 #d3d3d3,inset -1px -1px 0 #b4b4b4;text-align:left;padding-left:6px;"><span>mapping</span></div>
<div class="b l" style="left:96px;top:936px;width:192px;height:24px;background:#a0a0ff;border-color:#c8c8ff #8080cc #8080cc #c8c8ff;box-shadow:inset 1px 1px 0 #b3b3ff,inset -1px -1px 0 #9090e6;text-align:left;padding-left:6px;"><span>unnamed mapping</span></div>
<div class="b" style="left:288px;top:936px;width:96px;height:24px;background:#a0f8f8;border-color:#c8fbfb #80c6c6 #80c6c6 #c8fbfb;box-shadow:inset 1px 1px 0 #b3f9f9,inset -1px -1px 0 #90dfdf;"><span>view</span></div>
<div class="b l" style="left:0px;top:960px;width:96px;height:24px;background:#c8c8c8;border-color:#dfdfdf #a0a0a0 #a0a0a0 #dfdfdf;box-shadow:inset 1px 1px 0 #d3d3d3,inset -1px -1px 0 #b4b4b4;text-align:left;padding-left:6px;"><span>cutout</span></div>
<div class="b l" style="left:96px;top:960px;width:192px;height:24px;background:#a0a0ff;border-color:#c8c8ff #8080cc #8080cc #c8c8ff;box-shadow:inset 1px 1px 0 #b3b3ff,inset -1px -1px 0 #9090e6;text-align:left;padding-left:6px;"><span>unnamed</span></div>
<div class="b" style="left:288px;top:960px;width:96px;height:24px;background:#a0f8f8;border-color:#c8fbfb #80c6c6 #80c6c6 #c8fbfb;box-shadow:inset 1px 1px 0 #b3f9f9,inset -1px -1px 0 #90dfdf;"><span>view</span></div>
<div class="b l" style="left:0px;top:984px;width:96px;height:24px;background:#c8c8c8;border-color:#dfdfdf #a0a0a0 #a0a0a0 #dfdfdf;box-shadow:inset 1px 1px 0 #d3d3d3,inset -1px -1px 0 #b4b4b4;text-align:left;padding-left:6px;"><span>page</span></div>
<div class="b l" style="left:96px;top:984px;width:240px;height:24px;background:#a0a0ff;border-color:#c8c8ff #8080cc #8080cc #c8c8ff;box-shadow:inset 1px 1px 0 #b3b3ff,inset -1px -1px 0 #9090e6;text-align:left;padding-left:6px;"><span>[no texture]</span></div>
<div class="b" style="left:336px;top:984px;width:48px;height:24px;background:#a0f8f8;border-color:#c8fbfb #80c6c6 #80c6c6 #c8fbfb;box-shadow:inset 1px 1px 0 #b3f9f9,inset -1px -1px 0 #90dfdf;font-size:16px;line-height:20px;"><span>▶</span></div>
<div class="b l" style="left:0px;top:1008px;width:48px;height:24px;background:#b0b0b0;border-color:#8d8d8d #d1d1d1 #d1d1d1 #8d8d8d;box-shadow:inset 1px 1px 0 #9e9e9e,inset -1px -1px 0 #c0c0c0;text-align:left;padding-left:6px;"><span>mat</span></div>
<div class="b l caps" style="left:48px;top:1008px;width:96px;height:24px;background:#a0a0ff;border-color:#c8c8ff #8080cc #8080cc #c8c8ff;box-shadow:inset 1px 1px 0 #b3b3ff,inset -1px -1px 0 #9090e6;text-align:left;padding-left:6px;"><span>SOLID</span></div>
<div class="b l caps" style="left:144px;top:1008px;width:96px;height:24px;background:#a0a0ff;border-color:#c8c8ff #8080cc #8080cc #c8c8ff;box-shadow:inset 1px 1px 0 #b3b3ff,inset -1px -1px 0 #9090e6;text-align:left;padding-left:6px;"><span>MATT</span></div>
<div class="b" style="left:240px;top:1008px;width:48px;height:24px;background:#c8c8c8;border-color:#dfdfdf #a0a0a0 #a0a0a0 #dfdfdf;box-shadow:inset 1px 1px 0 #d3d3d3,inset -1px -1px 0 #b4b4b4;"><span>0</span></div>
<div class="b l caps" style="left:288px;top:1008px;width:96px;height:24px;background:#ffffff;border-color:#ffffff #cccccc #cccccc #ffffff;box-shadow:inset 1px 1px 0 #ffffff,inset -1px -1px 0 #e6e6e6;text-align:left;padding-left:6px;"><span>NONE</span></div>
<div class="b" style="left:0px;top:1032px;width:240px;height:24px;background:#c8c8c8;border-color:#dfdfdf #a0a0a0 #a0a0a0 #dfdfdf;box-shadow:inset 1px 1px 0 #d3d3d3,inset -1px -1px 0 #b4b4b4;"><span>the130_2</span></div>
<div class="b caps" style="left:240px;top:1032px;width:72px;height:24px;background:#00f000;border-color:#6bf66b #00c000 #00c000 #6bf66b;box-shadow:inset 1px 1px 0 #33f333,inset -1px -1px 0 #00d800;"><span>LOAD</span></div>
<div class="b caps" style="left:312px;top:1032px;width:72px;height:24px;background:#00f000;border-color:#6bf66b #00c000 #00c000 #6bf66b;box-shadow:inset 1px 1px 0 #33f333,inset -1px -1px 0 #00d800;"><span>SAVE</span></div>
<div class="b" style="left:0px;top:1056px;width:72px;height:24px;background:#c8c8c8;border-color:#dfdfdf #a0a0a0 #a0a0a0 #dfdfdf;box-shadow:inset 1px 1px 0 #d3d3d3,inset -1px -1px 0 #b4b4b4;"><span>skin</span></div>
<div class="b" style="left:72px;top:1056px;width:240px;height:24px;background:#c8c8c8;border-color:#dfdfdf #a0a0a0 #a0a0a0 #dfdfdf;box-shadow:inset 1px 1px 0 #d3d3d3,inset -1px -1px 0 #b4b4b4;"><span></span></div>
<div class="b caps" style="left:312px;top:1056px;width:72px;height:24px;background:#ffffa8;border-color:#ffffcd #cccc86 #cccc86 #ffffcd;box-shadow:inset 1px 1px 0 #ffffb9,inset -1px -1px 0 #e6e697;"><span>OBJ</span></div>
<div class="b" style="left:1728px;top:888px;width:96px;height:24px;background:#c8c8c8;border-color:#dfdfdf #a0a0a0 #a0a0a0 #dfdfdf;box-shadow:inset 1px 1px 0 #d3d3d3,inset -1px -1px 0 #b4b4b4;"><span>invert</span></div>
<div class="b" style="left:1824px;top:888px;width:96px;height:24px;background:#b0b0b0;border-color:#8d8d8d #d1d1d1 #d1d1d1 #8d8d8d;box-shadow:inset 1px 1px 0 #9e9e9e,inset -1px -1px 0 #c0c0c0;"><span>shadow</span></div>
<div class="b" style="left:1728px;top:912px;width:96px;height:24px;background:#a0f8a0;border-color:#c8fbc8 #80c680 #80c680 #c8fbc8;box-shadow:inset 1px 1px 0 #b3f9b3,inset -1px -1px 0 #90df90;"><span>load scm</span></div>
<div class="b" style="left:1824px;top:912px;width:96px;height:24px;background:#a0f8a0;border-color:#c8fbc8 #80c680 #80c680 #c8fbc8;box-shadow:inset 1px 1px 0 #b3f9b3,inset -1px -1px 0 #90df90;"><span>save scm</span></div>
<div class="b caps" style="left:1728px;top:936px;width:24px;height:24px;background:#00c000;border-color:#009a00 #6bda6b #6bda6b #009a00;box-shadow:inset 1px 1px 0 #00ad00,inset -1px -1px 0 #33cd33;"><span>P</span></div>
<div class="b" style="left:1752px;top:936px;width:24px;height:24px;background:#00f000;border-color:#6bf66b #00c000 #00c000 #6bf66b;box-shadow:inset 1px 1px 0 #33f333,inset -1px -1px 0 #00d800;"><span>f</span></div>
<div class="b" style="left:1776px;top:936px;width:24px;height:24px;background:#00f000;border-color:#6bf66b #00c000 #00c000 #6bf66b;box-shadow:inset 1px 1px 0 #33f333,inset -1px -1px 0 #00d800;"><span>b</span></div>
<div class="b" style="left:1800px;top:936px;width:24px;height:24px;background:#00f000;border-color:#6bf66b #00c000 #00c000 #6bf66b;box-shadow:inset 1px 1px 0 #33f333,inset -1px -1px 0 #00d800;"><span>r</span></div>
<div class="b" style="left:1824px;top:936px;width:24px;height:24px;background:#00f000;border-color:#6bf66b #00c000 #00c000 #6bf66b;box-shadow:inset 1px 1px 0 #33f333,inset -1px -1px 0 #00d800;"><span>l</span></div>
<div class="b" style="left:1848px;top:936px;width:24px;height:24px;background:#00f000;border-color:#6bf66b #00c000 #00c000 #6bf66b;box-shadow:inset 1px 1px 0 #33f333,inset -1px -1px 0 #00d800;"><span>t</span></div>
<div class="b" style="left:1872px;top:936px;width:24px;height:24px;background:#00f000;border-color:#6bf66b #00c000 #00c000 #6bf66b;box-shadow:inset 1px 1px 0 #33f333,inset -1px -1px 0 #00d800;"><span>u</span></div>
<div class="b" style="left:1896px;top:936px;width:24px;height:24px;background:#ffffa8;border-color:#ffffcd #cccc86 #cccc86 #ffffcd;box-shadow:inset 1px 1px 0 #ffffb9,inset -1px -1px 0 #e6e697;"><span></span></div>
<div class="b l" style="left:1536px;top:960px;width:96px;height:24px;background:#a0a0ff;border-color:#c8c8ff #8080cc #8080cc #c8c8ff;box-shadow:inset 1px 1px 0 #b3b3ff,inset -1px -1px 0 #9090e6;text-align:left;padding-left:6px;"><span>layers</span></div>
<div class="b l" style="left:1632px;top:960px;width:96px;height:24px;background:#8c8ce0;border-color:#7070b3 #bcbced #bcbced #7070b3;box-shadow:inset 1px 1px 0 #7e7eca,inset -1px -1px 0 #a3a3e6;text-align:left;padding-left:6px;"><span>gouraud</span></div>
<div class="b" style="left:1728px;top:960px;width:96px;height:24px;background:#969696;border-color:#c2c2c2 #787878 #787878 #c2c2c2;box-shadow:inset 1px 1px 0 #ababab,inset -1px -1px 0 #878787;"><span>–</span></div>
<div class="b" style="left:1824px;top:960px;width:96px;height:24px;background:#969696;border-color:#c2c2c2 #787878 #787878 #c2c2c2;box-shadow:inset 1px 1px 0 #ababab,inset -1px -1px 0 #878787;"><span>–</span></div>
<div class="b l" style="left:1344px;top:984px;width:144px;height:24px;background:#ffd0a0;border-color:#ffe4c8 #cca680 #cca680 #ffe4c8;box-shadow:inset 1px 1px 0 #ffd9b3,inset -1px -1px 0 #e6bb90;text-align:left;padding-left:6px;"><span>show main</span></div>
<div class="b caps" style="left:1488px;top:984px;width:48px;height:24px;background:#b0b0b0;border-color:#8d8d8d #d1d1d1 #d1d1d1 #8d8d8d;box-shadow:inset 1px 1px 0 #9e9e9e,inset -1px -1px 0 #c0c0c0;"><span>YES</span></div>
<div class="b l" style="left:1536px;top:984px;width:96px;height:24px;background:#a0a0ff;border-color:#c8c8ff #8080cc #8080cc #c8c8ff;box-shadow:inset 1px 1px 0 #b3b3ff,inset -1px -1px 0 #9090e6;text-align:left;padding-left:6px;"><span>wire</span></div>
<div class="b l" style="left:1632px;top:984px;width:96px;height:24px;background:#a0a0ff;border-color:#c8c8ff #8080cc #8080cc #c8c8ff;box-shadow:inset 1px 1px 0 #b3b3ff,inset -1px -1px 0 #9090e6;text-align:left;padding-left:6px;"><span>flat</span></div>
<div class="b" style="left:1728px;top:984px;width:48px;height:24px;background:#a0a0ff;border-color:#c8c8ff #8080cc #8080cc #c8c8ff;box-shadow:inset 1px 1px 0 #b3b3ff,inset -1px -1px 0 #9090e6;"><span>0.1m</span></div>
<div class="b" style="left:1776px;top:984px;width:48px;height:24px;background:#8c8ce0;border-color:#7070b3 #bcbced #bcbced #7070b3;box-shadow:inset 1px 1px 0 #7e7eca,inset -1px -1px 0 #a3a3e6;"><span>1m</span></div>
<div class="b" style="left:1824px;top:984px;width:48px;height:24px;background:#a0a0ff;border-color:#c8c8ff #8080cc #8080cc #c8c8ff;box-shadow:inset 1px 1px 0 #b3b3ff,inset -1px -1px 0 #9090e6;"><span>10m</span></div>
<div class="b" style="left:1872px;top:984px;width:48px;height:24px;background:#a0a0ff;border-color:#c8c8ff #8080cc #8080cc #c8c8ff;box-shadow:inset 1px 1px 0 #b3b3ff,inset -1px -1px 0 #9090e6;"><span>–</span></div>
<div class="b l" style="left:1344px;top:1008px;width:144px;height:24px;background:#ffd0a0;border-color:#ffe4c8 #cca680 #cca680 #ffe4c8;box-shadow:inset 1px 1px 0 #ffd9b3,inset -1px -1px 0 #e6bb90;text-align:left;padding-left:6px;"><span>show subobs</span></div>
<div class="b caps" style="left:1488px;top:1008px;width:48px;height:24px;background:#b0b0b0;border-color:#8d8d8d #d1d1d1 #d1d1d1 #8d8d8d;box-shadow:inset 1px 1px 0 #9e9e9e,inset -1px -1px 0 #c0c0c0;"><span>YES</span></div>
<div class="b l" style="left:1536px;top:1008px;width:96px;height:24px;background:#a0a0ff;border-color:#c8c8ff #8080cc #8080cc #c8c8ff;box-shadow:inset 1px 1px 0 #b3b3ff,inset -1px -1px 0 #9090e6;text-align:left;padding-left:6px;"><span>mappings</span></div>
<div class="b l" style="left:1632px;top:1008px;width:96px;height:24px;background:#a0a0ff;border-color:#c8c8ff #8080cc #8080cc #c8c8ff;box-shadow:inset 1px 1px 0 #b3b3ff,inset -1px -1px 0 #9090e6;text-align:left;padding-left:6px;"><span>groups</span></div>
<div class="b" style="left:1728px;top:1008px;width:96px;height:24px;background:#a0f8f8;border-color:#c8fbfb #80c6c6 #80c6c6 #c8fbfb;box-shadow:inset 1px 1px 0 #b3f9f9,inset -1px -1px 0 #90dfdf;"><span>origin</span></div>
<div class="b" style="left:1824px;top:1008px;width:96px;height:24px;background:#a0f8f8;border-color:#c8fbfb #80c6c6 #80c6c6 #c8fbfb;box-shadow:inset 1px 1px 0 #b3f9f9,inset -1px -1px 0 #90dfdf;"><span>object</span></div>
<div class="b l" style="left:1344px;top:1032px;width:144px;height:24px;background:#ffffa8;border-color:#ffffcd #cccc86 #cccc86 #ffffcd;box-shadow:inset 1px 1px 0 #ffffb9,inset -1px -1px 0 #e6e697;text-align:left;padding-left:6px;"><span>show hidden</span></div>
<div class="b caps" style="left:1488px;top:1032px;width:48px;height:24px;background:#c8c8c8;border-color:#dfdfdf #a0a0a0 #a0a0a0 #dfdfdf;box-shadow:inset 1px 1px 0 #d3d3d3,inset -1px -1px 0 #b4b4b4;"><span>NO</span></div>
<div class="b l" style="left:1536px;top:1032px;width:96px;height:24px;background:#a0a0ff;border-color:#c8c8ff #8080cc #8080cc #c8c8ff;box-shadow:inset 1px 1px 0 #b3b3ff,inset -1px -1px 0 #9090e6;text-align:left;padding-left:6px;"><span>n.c.level</span></div>
<div class="b l" style="left:1632px;top:1032px;width:96px;height:24px;background:#a0a0ff;border-color:#c8c8ff #8080cc #8080cc #c8c8ff;box-shadow:inset 1px 1px 0 #b3b3ff,inset -1px -1px 0 #9090e6;text-align:left;padding-left:6px;"><span>l.r.swap</span></div>
<div class="b" style="left:1728px;top:1032px;width:48px;height:24px;background:#f8f000;border-color:#fbf66b #c6c000 #c6c000 #fbf66b;box-shadow:inset 1px 1px 0 #f9f333,inset -1px -1px 0 #dfd800;"><span>blob</span></div>
<div class="b" style="left:1776px;top:1032px;width:24px;height:24px;background:#f8f000;border-color:#fbf66b #c6c000 #c6c000 #fbf66b;box-shadow:inset 1px 1px 0 #f9f333,inset -1px -1px 0 #dfd800;"><span>–</span></div>
<div class="b" style="left:1800px;top:1032px;width:24px;height:24px;background:#f8f000;border-color:#fbf66b #c6c000 #c6c000 #fbf66b;box-shadow:inset 1px 1px 0 #f9f333,inset -1px -1px 0 #dfd800;"><span>+</span></div>
<div class="b" style="left:1824px;top:1032px;width:48px;height:24px;background:#f8f000;border-color:#fbf66b #c6c000 #c6c000 #fbf66b;box-shadow:inset 1px 1px 0 #f9f333,inset -1px -1px 0 #dfd800;"><span>text</span></div>
<div class="b" style="left:1872px;top:1032px;width:24px;height:24px;background:#f8f000;border-color:#fbf66b #c6c000 #c6c000 #fbf66b;box-shadow:inset 1px 1px 0 #f9f333,inset -1px -1px 0 #dfd800;"><span>–</span></div>
<div class="b" style="left:1896px;top:1032px;width:24px;height:24px;background:#f8f000;border-color:#fbf66b #c6c000 #c6c000 #fbf66b;box-shadow:inset 1px 1px 0 #f9f333,inset -1px -1px 0 #dfd800;"><span>+</span></div>
<div class="b" style="left:1344px;top:1056px;width:48px;height:24px;background:#a0a0ff;border-color:#c8c8ff #8080cc #8080cc #c8c8ff;box-shadow:inset 1px 1px 0 #b3b3ff,inset -1px -1px 0 #9090e6;"><span>nrm</span></div>
<div class="b" style="left:1392px;top:1056px;width:48px;height:24px;background:#b0b0b0;border-color:#8d8d8d #d1d1d1 #d1d1d1 #8d8d8d;box-shadow:inset 1px 1px 0 #9e9e9e,inset -1px -1px 0 #c0c0c0;"><span>off</span></div>
<div class="b" style="left:1440px;top:1056px;width:48px;height:24px;background:#c8c8c8;border-color:#dfdfdf #a0a0a0 #a0a0a0 #dfdfdf;box-shadow:inset 1px 1px 0 #d3d3d3,inset -1px -1px 0 #b4b4b4;"><span>sml</span></div>
<div class="b" style="left:1488px;top:1056px;width:48px;height:24px;background:#c8c8c8;border-color:#dfdfdf #a0a0a0 #a0a0a0 #dfdfdf;box-shadow:inset 1px 1px 0 #d3d3d3,inset -1px -1px 0 #b4b4b4;"><span>big</span></div>
<div class="b l" style="left:1536px;top:1056px;width:144px;height:24px;background:#ffd0a0;border-color:#ffe4c8 #cca680 #cca680 #ffe4c8;box-shadow:inset 1px 1px 0 #ffd9b3,inset -1px -1px 0 #e6bb90;text-align:left;padding-left:6px;"><span>wire overlay</span></div>
<div class="b caps" style="left:1680px;top:1056px;width:48px;height:24px;background:#b0b0b0;border-color:#8d8d8d #d1d1d1 #d1d1d1 #8d8d8d;box-shadow:inset 1px 1px 0 #9e9e9e,inset -1px -1px 0 #c0c0c0;"><span>YES</span></div>
<div class="b" style="left:1728px;top:1056px;width:168px;height:24px;background:#a0f8a0;border-color:#c8fbc8 #80c680 #80c680 #c8fbc8;box-shadow:inset 1px 1px 0 #b3f9b3,inset -1px -1px 0 #90df90;"><span>reload textures</span></div>
<div class="b" style="left:1896px;top:1056px;width:24px;height:24px;background:#c8c8c8;border-color:#dfdfdf #a0a0a0 #a0a0a0 #dfdfdf;box-shadow:inset 1px 1px 0 #d3d3d3,inset -1px -1px 0 #b4b4b4;"><span>–</span></div>
<div class="b" style="left:0px;top:768px;width:96px;height:18px;background:#f88c78;border-color:#fbbcb1 #c67060 #c67060 #fbbcb1;box-shadow:inset 1px 1px 0 #f9a393,inset -1px -1px 0 #df7e6c;"><span></span></div>
<div class="b" style="left:96px;top:768px;width:24px;height:18px;background:#969696;border-color:#c2c2c2 #787878 #787878 #c2c2c2;box-shadow:inset 1px 1px 0 #ababab,inset -1px -1px 0 #878787;font-size:11px;line-height:14px;"><span>◀</span></div>
<div class="b" style="left:120px;top:768px;width:24px;height:18px;background:#969696;border-color:#c2c2c2 #787878 #787878 #c2c2c2;box-shadow:inset 1px 1px 0 #ababab,inset -1px -1px 0 #878787;font-size:11px;line-height:14px;"><span>▶</span></div>
<div class="b" style="left:0px;top:786px;width:96px;height:18px;background:#a0f8a0;border-color:#c8fbc8 #80c680 #80c680 #c8fbc8;box-shadow:inset 1px 1px 0 #b3f9b3,inset -1px -1px 0 #90df90;"><span></span></div>
<div class="b" style="left:96px;top:786px;width:24px;height:18px;background:#969696;border-color:#c2c2c2 #787878 #787878 #c2c2c2;box-shadow:inset 1px 1px 0 #ababab,inset -1px -1px 0 #878787;font-size:11px;line-height:14px;"><span>◀</span></div>
<div class="b" style="left:120px;top:786px;width:24px;height:18px;background:#969696;border-color:#c2c2c2 #787878 #787878 #c2c2c2;box-shadow:inset 1px 1px 0 #ababab,inset -1px -1px 0 #878787;font-size:11px;line-height:14px;"><span>▶</span></div>
<div class="b" style="left:0px;top:804px;width:96px;height:18px;background:#a0a0f8;border-color:#c8c8fb #8080c6 #8080c6 #c8c8fb;box-shadow:inset 1px 1px 0 #b3b3f9,inset -1px -1px 0 #9090df;"><span></span></div>
<div class="b" style="left:96px;top:804px;width:24px;height:18px;background:#969696;border-color:#c2c2c2 #787878 #787878 #c2c2c2;box-shadow:inset 1px 1px 0 #ababab,inset -1px -1px 0 #878787;font-size:11px;line-height:14px;"><span>◀</span></div>
<div class="b" style="left:120px;top:804px;width:24px;height:18px;background:#969696;border-color:#c2c2c2 #787878 #787878 #c2c2c2;box-shadow:inset 1px 1px 0 #ababab,inset -1px -1px 0 #878787;font-size:11px;line-height:14px;"><span>▶</span></div>
<div class="b" style="left:0px;top:822px;width:96px;height:18px;background:#969696;border-color:#c2c2c2 #787878 #787878 #c2c2c2;box-shadow:inset 1px 1px 0 #ababab,inset -1px -1px 0 #878787;"><span></span></div>
<div class="b" style="left:96px;top:822px;width:24px;height:18px;background:#969696;border-color:#c2c2c2 #787878 #787878 #c2c2c2;box-shadow:inset 1px 1px 0 #ababab,inset -1px -1px 0 #878787;font-size:11px;line-height:14px;"><span>◀</span></div>
<div class="b" style="left:120px;top:822px;width:24px;height:18px;background:#969696;border-color:#c2c2c2 #787878 #787878 #c2c2c2;box-shadow:inset 1px 1px 0 #ababab,inset -1px -1px 0 #878787;font-size:11px;line-height:14px;"><span>▶</span></div>
<div class="b" style="left:144px;top:768px;width:48px;height:24px;background:#969696;border-color:#c2c2c2 #787878 #787878 #c2c2c2;box-shadow:inset 1px 1px 0 #ababab,inset -1px -1px 0 #878787;"><span>255</span></div>
<div class="b" style="left:144px;top:792px;width:48px;height:24px;background:#969696;border-color:#c2c2c2 #787878 #787878 #c2c2c2;box-shadow:inset 1px 1px 0 #ababab,inset -1px -1px 0 #878787;"><span>165</span></div>
<div class="b" style="left:144px;top:816px;width:48px;height:24px;background:#969696;border-color:#c2c2c2 #787878 #787878 #c2c2c2;box-shadow:inset 1px 1px 0 #ababab,inset -1px -1px 0 #878787;"><span>165</span></div>
<div class="b" style="left:0px;top:864px;width:96px;height:18px;background:#f88c78;border-color:#fbbcb1 #c67060 #c67060 #fbbcb1;box-shadow:inset 1px 1px 0 #f9a393,inset -1px -1px 0 #df7e6c;"><span></span></div>
<div class="b" style="left:96px;top:864px;width:24px;height:18px;background:#969696;border-color:#c2c2c2 #787878 #787878 #c2c2c2;box-shadow:inset 1px 1px 0 #ababab,inset -1px -1px 0 #878787;font-size:11px;line-height:14px;"><span>◀</span></div>
<div class="b" style="left:120px;top:864px;width:24px;height:18px;background:#969696;border-color:#c2c2c2 #787878 #787878 #c2c2c2;box-shadow:inset 1px 1px 0 #ababab,inset -1px -1px 0 #878787;font-size:11px;line-height:14px;"><span>▶</span></div>
<div class="b" style="left:0px;top:882px;width:96px;height:18px;background:#a0f8a0;border-color:#c8fbc8 #80c680 #80c680 #c8fbc8;box-shadow:inset 1px 1px 0 #b3f9b3,inset -1px -1px 0 #90df90;"><span></span></div>
<div class="b" style="left:96px;top:882px;width:24px;height:18px;background:#969696;border-color:#c2c2c2 #787878 #787878 #c2c2c2;box-shadow:inset 1px 1px 0 #ababab,inset -1px -1px 0 #878787;font-size:11px;line-height:14px;"><span>◀</span></div>
<div class="b" style="left:120px;top:882px;width:24px;height:18px;background:#969696;border-color:#c2c2c2 #787878 #787878 #c2c2c2;box-shadow:inset 1px 1px 0 #ababab,inset -1px -1px 0 #878787;font-size:11px;line-height:14px;"><span>▶</span></div>
<div class="b" style="left:0px;top:900px;width:96px;height:18px;background:#a0a0f8;border-color:#c8c8fb #8080c6 #8080c6 #c8c8fb;box-shadow:inset 1px 1px 0 #b3b3f9,inset -1px -1px 0 #9090df;"><span></span></div>
<div class="b" style="left:96px;top:900px;width:24px;height:18px;background:#969696;border-color:#c2c2c2 #787878 #787878 #c2c2c2;box-shadow:inset 1px 1px 0 #ababab,inset -1px -1px 0 #878787;font-size:11px;line-height:14px;"><span>◀</span></div>
<div class="b" style="left:120px;top:900px;width:24px;height:18px;background:#969696;border-color:#c2c2c2 #787878 #787878 #c2c2c2;box-shadow:inset 1px 1px 0 #ababab,inset -1px -1px 0 #878787;font-size:11px;line-height:14px;"><span>▶</span></div>
<div class="b" style="left:0px;top:918px;width:96px;height:18px;background:#969696;border-color:#c2c2c2 #787878 #787878 #c2c2c2;box-shadow:inset 1px 1px 0 #ababab,inset -1px -1px 0 #878787;"><span></span></div>
<div class="b" style="left:96px;top:918px;width:24px;height:18px;background:#969696;border-color:#c2c2c2 #787878 #787878 #c2c2c2;box-shadow:inset 1px 1px 0 #ababab,inset -1px -1px 0 #878787;font-size:11px;line-height:14px;"><span>◀</span></div>
<div class="b" style="left:120px;top:918px;width:24px;height:18px;background:#969696;border-color:#c2c2c2 #787878 #787878 #c2c2c2;box-shadow:inset 1px 1px 0 #ababab,inset -1px -1px 0 #878787;font-size:11px;line-height:14px;"><span>▶</span></div>
<div class="b" style="left:144px;top:864px;width:48px;height:24px;background:#969696;border-color:#c2c2c2 #787878 #787878 #c2c2c2;box-shadow:inset 1px 1px 0 #ababab,inset -1px -1px 0 #878787;"><span>88</span></div>
<div class="b" style="left:144px;top:888px;width:48px;height:24px;background:#969696;border-color:#c2c2c2 #787878 #787878 #c2c2c2;box-shadow:inset 1px 1px 0 #ababab,inset -1px -1px 0 #878787;"><span>165</span></div>
<div class="b" style="left:144px;top:912px;width:48px;height:24px;background:#969696;border-color:#c2c2c2 #787878 #787878 #c2c2c2;box-shadow:inset 1px 1px 0 #ababab,inset -1px -1px 0 #878787;"><span>255</span></div>
<div style="position:absolute;left:1904px;top:944px;width:8px;height:8px;border-radius:50%;background:#000"></div>
<div style="position:absolute;left:90px;top:770px;width:5px;height:14px;border-left:1px solid #fcc6bc;border-right:1px solid #ae6254"></div>
<div style="position:absolute;left:59px;top:788px;width:5px;height:14px;border-left:1px solid #d0fcd0;border-right:1px solid #70ae70"></div>
<div style="position:absolute;left:59px;top:806px;width:5px;height:14px;border-left:1px solid #d0d0fc;border-right:1px solid #7070ae"></div>
<div style="position:absolute;left:90px;top:824px;width:5px;height:14px;border-left:1px solid #cacaca;border-right:1px solid #696969"></div>
<div style="position:absolute;left:192px;top:768px;width:96px;height:72px;background:#ffa0a0;border:1px solid #ff4040;text-align:center;font-size:20px;line-height:24px;padding-top:0px"><span style="display:inline-block;transform:scaleX(0.94) translateY(-2px);-webkit-text-stroke:0.35px #000">unnamed<br>mapping</span></div>
<div class="b" style="left:252px;top:822px;width:18px;height:18px;background:#969696;border-color:#c2c2c2 #787878 #787878 #c2c2c2;box-shadow:inset 1px 1px 0 #ababab,inset -1px -1px 0 #878787;font-size:10px;line-height:14px;"><span>◀</span></div>
<div class="b" style="left:270px;top:822px;width:18px;height:18px;background:#969696;border-color:#c2c2c2 #787878 #787878 #c2c2c2;box-shadow:inset 1px 1px 0 #ababab,inset -1px -1px 0 #878787;font-size:10px;line-height:14px;"><span>▶</span></div>
<div style="position:absolute;left:30px;top:866px;width:5px;height:14px;border-left:1px solid #fcc6bc;border-right:1px solid #ae6254"></div>
<div style="position:absolute;left:59px;top:884px;width:5px;height:14px;border-left:1px solid #d0fcd0;border-right:1px solid #70ae70"></div>
<div style="position:absolute;left:90px;top:902px;width:5px;height:14px;border-left:1px solid #d0d0fc;border-right:1px solid #7070ae"></div>
<div style="position:absolute;left:90px;top:920px;width:5px;height:14px;border-left:1px solid #cacaca;border-right:1px solid #696969"></div>
<div style="position:absolute;left:192px;top:864px;width:96px;height:72px;background:#58a8f8;text-align:center;font-size:20px;line-height:24px;padding-top:0px"><span style="display:inline-block;transform:scaleX(0.94) translateY(-2px);-webkit-text-stroke:0.35px #000">2</span></div>
<div class="b" style="left:252px;top:918px;width:18px;height:18px;background:#969696;border-color:#c2c2c2 #787878 #787878 #c2c2c2;box-shadow:inset 1px 1px 0 #ababab,inset -1px -1px 0 #878787;font-size:10px;line-height:14px;"><span>◀</span></div>
<div class="b" style="left:270px;top:918px;width:18px;height:18px;background:#969696;border-color:#c2c2c2 #787878 #787878 #c2c2c2;box-shadow:inset 1px 1px 0 #ababab,inset -1px -1px 0 #878787;font-size:10px;line-height:14px;"><span>▶</span></div>
</body></html>
